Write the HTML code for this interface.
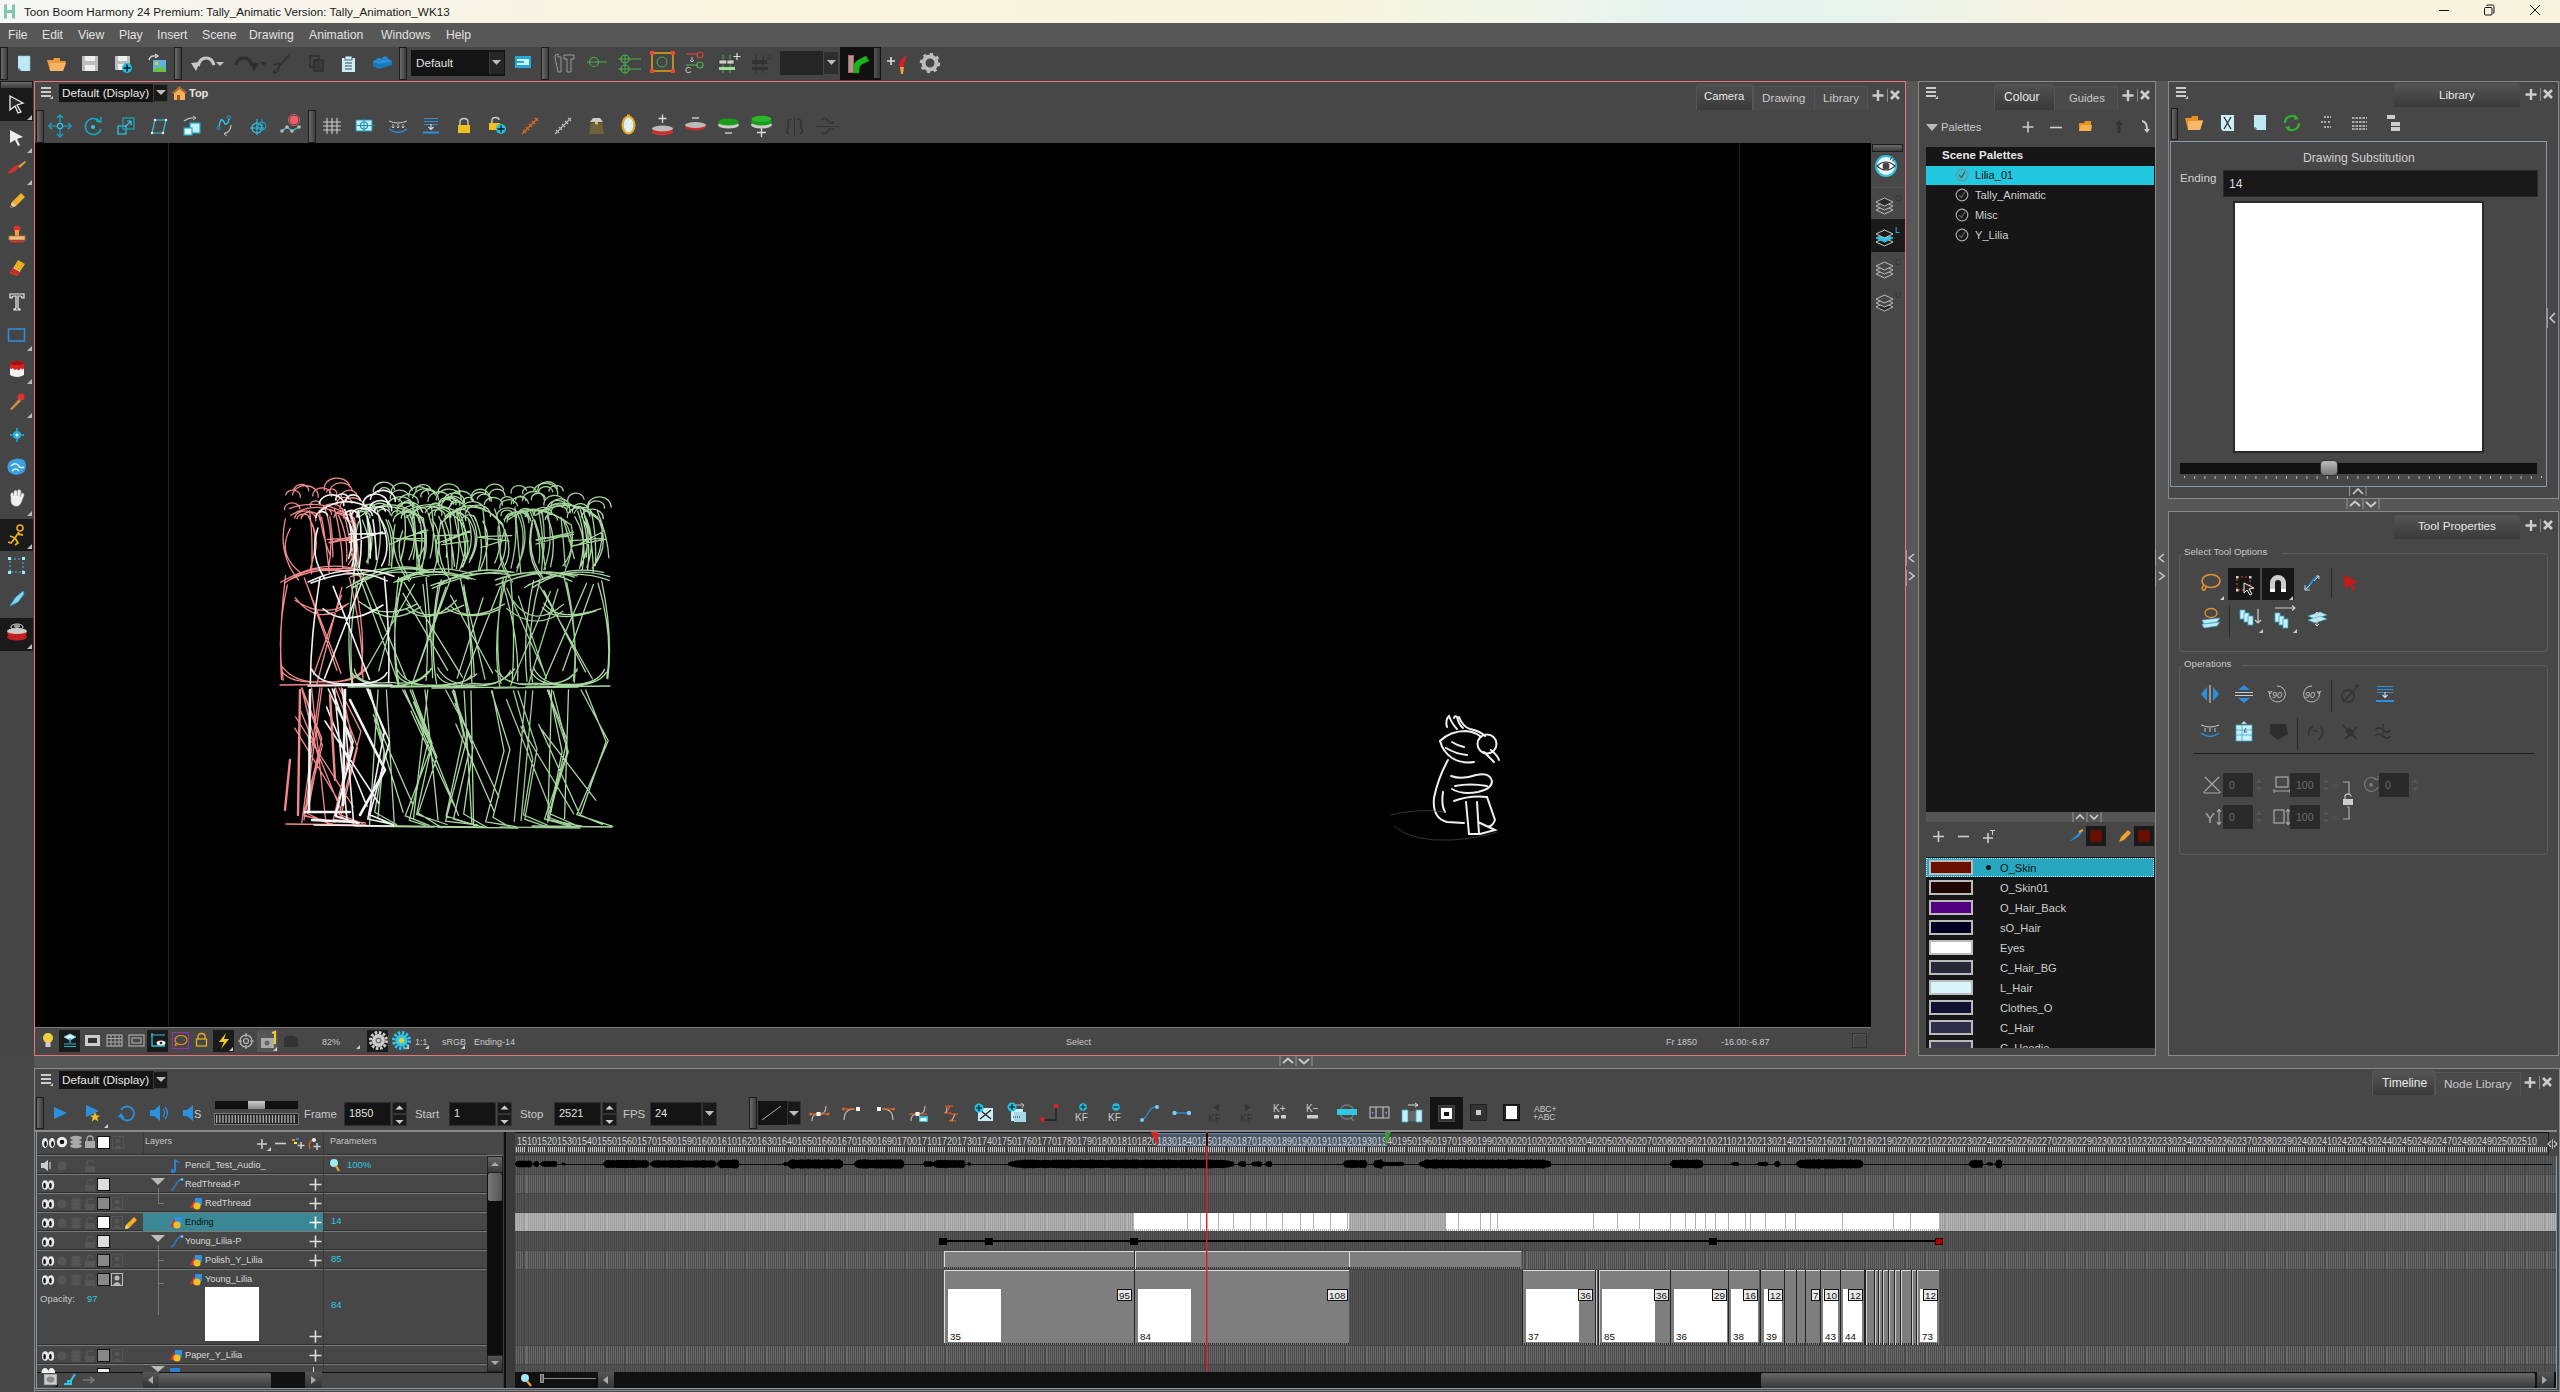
<!DOCTYPE html>
<html><head><meta charset="utf-8">
<style>
*{box-sizing:border-box;margin:0;padding:0}
html,body{width:2560px;height:1392px;overflow:hidden}
body{position:relative;background:#575757;font-family:"Liberation Sans",sans-serif;color:#ccc;font-size:12px}
.a{position:absolute}
.t{position:absolute;white-space:nowrap;line-height:1}
svg.a{overflow:visible}
</style></head><body>
<div class="a" style="left:0px;top:0px;width:2560px;height:23px;background:linear-gradient(90deg,#f5f7f4 0%,#f7f4ea 12%,#f9f5e0 30%,#f8f5dd 50%,#f2f6e8 58%,#e6f3f1 66%,#e8f4ee 72%,#f8f3e0 82%,#f8f3de 100%);"></div>
<svg class="a" style="left:3px;top:3px;" width="14" height="17" viewBox="0 0 14 17"><path d="M1 2 L4 1 L4 7 L9 7 L9 2 L12 1 L12 16 L9 15 L9 10 L4 10 L4 16 L1 15 Z" fill="#7cc9b0"/></svg>
<div class="t" style="left:24px;top:6px;font-size:11.7px;color:#1a1a1a;">Toon Boom Harmony 24 Premium: Tally_Animatic Version: Tally_Animation_WK13</div>
<div class="a" style="left:2439px;top:10px;width:10px;height:1px;background:#111;"></div>
<svg class="a" style="left:2483px;top:4px;" width="12" height="12" viewBox="0 0 12 12"><rect x="1.5" y="3.5" width="7.5" height="7.5" rx="1" fill="none" stroke="#111" stroke-width="1"/><path d="M3.5 2 Q3.5 1 5 1 H9.5 Q11 1 11 2.5 V8 Q11 9.5 10 9.5" fill="none" stroke="#111" stroke-width="1"/></svg>
<svg class="a" style="left:2529px;top:4px;" width="12" height="12" viewBox="0 0 12 12"><path d="M1 1 L11 11 M11 1 L1 11" stroke="#111" stroke-width="1"/></svg>
<div class="a" style="left:0px;top:23px;width:2560px;height:24px;background:#575757;"></div>
<div class="t" style="left:8px;top:29px;font-size:12.2px;color:#e0e0e0;">File</div>
<div class="t" style="left:42px;top:29px;font-size:12.2px;color:#e0e0e0;">Edit</div>
<div class="t" style="left:78px;top:29px;font-size:12.2px;color:#e0e0e0;">View</div>
<div class="t" style="left:119px;top:29px;font-size:12.2px;color:#e0e0e0;">Play</div>
<div class="t" style="left:157px;top:29px;font-size:12.2px;color:#e0e0e0;">Insert</div>
<div class="t" style="left:202px;top:29px;font-size:12.2px;color:#e0e0e0;">Scene</div>
<div class="t" style="left:249px;top:29px;font-size:12.2px;color:#e0e0e0;">Drawing</div>
<div class="t" style="left:309px;top:29px;font-size:12.2px;color:#e0e0e0;">Animation</div>
<div class="t" style="left:381px;top:29px;font-size:12.2px;color:#e0e0e0;">Windows</div>
<div class="t" style="left:446px;top:29px;font-size:12.2px;color:#e0e0e0;">Help</div>
<div class="a" style="left:0px;top:47px;width:2560px;height:34px;background:#454545;"></div>
<div class="a" style="left:0px;top:47px;width:8px;height:33px;background:#1c1c1c;"><div class="a" style="left:1px;top:1px;right:1px;bottom:1px;background:linear-gradient(90deg,#6a6a6a,#3c3c3c)"></div></div>
<div class="a" style="left:174px;top:47px;width:8px;height:33px;background:#1c1c1c;"><div class="a" style="left:1px;top:1px;right:1px;bottom:1px;background:linear-gradient(90deg,#6a6a6a,#3c3c3c)"></div></div>
<div class="a" style="left:399px;top:47px;width:8px;height:33px;background:#1c1c1c;"><div class="a" style="left:1px;top:1px;right:1px;bottom:1px;background:linear-gradient(90deg,#6a6a6a,#3c3c3c)"></div></div>
<div class="a" style="left:541px;top:47px;width:8px;height:33px;background:#1c1c1c;"><div class="a" style="left:1px;top:1px;right:1px;bottom:1px;background:linear-gradient(90deg,#6a6a6a,#3c3c3c)"></div></div>
<svg class="a" style="left:16px;top:55px;" width="16" height="17" viewBox="0 0 16 17"><path d="M2 1 H14 V16 H4 L2 14 Z" fill="#bfe8f5"/><path d="M2 14 L4 14 L4 16" fill="none" stroke="#457" stroke-width="1"/><path d="M2 1 H14 V16" fill="none" stroke="#8cc" stroke-width="0.6"/></svg>
<svg class="a" style="left:46px;top:57px;" width="21" height="15" viewBox="0 0 21 15"><path d="M1 3 L7 3 L8 1 L14 1 L14 4 L20 4 L17 14 L4 14 Z" fill="#e89a3c"/><path d="M4 6 L20 6 L17 14 L4 14 Z" fill="#f3b565"/></svg>
<svg class="a" style="left:81px;top:55px;" width="18" height="17" viewBox="0 0 18 17"><path d="M1 1 H17 V16 H1 Z" fill="#bdbdbd"/><rect x="4" y="1" width="10" height="5" fill="#eee"/><rect x="4" y="10" width="10" height="6" fill="#eee"/></svg>
<svg class="a" style="left:114px;top:55px;" width="19" height="18" viewBox="0 0 19 18"><path d="M1 1 H16 V15 H1 Z" fill="#bdbdbd"/><rect x="4" y="1" width="9" height="5" fill="#eee"/><rect x="4" y="9" width="9" height="6" fill="#eee"/><circle cx="13" cy="13" r="5" fill="#20c0e0"/><path d="M13 9.5 V16.5 M9.5 13 H16.5" stroke="#111" stroke-width="1.4"/></svg>
<svg class="a" style="left:147px;top:53px;" width="20" height="20" viewBox="0 0 20 20"><path d="M2 7 Q3 2 9 3" fill="none" stroke="#ddd" stroke-width="1.4"/><path d="M8 1 L11 3 L8 5" fill="none" stroke="#ddd" stroke-width="1.2"/><rect x="6" y="7" width="13" height="12" fill="#5ab6e0"/><path d="M6 19 L10 13 L13 16 L16 12 L19 19 Z" fill="#6cbf3c"/><rect x="8" y="9" width="3" height="3" fill="#f0c040"/></svg>
<svg class="a" style="left:190px;top:54px;" width="36" height="18" viewBox="0 0 36 18"><path d="M8 12 Q10 4 16 4 Q22 4 24 11" fill="none" stroke="#c8c8c8" stroke-width="3.2"/><path d="M1 9 L10 8 L6 17 Z" fill="#c8c8c8"/><path d="M26 8 L34 8 L30 12 Z" fill="#c8c8c8"/></svg>
<svg class="a" style="left:232px;top:54px;" width="36" height="18" viewBox="0 0 36 18"><path d="M4 11 Q6 4 12 4 Q18 4 20 12" fill="none" stroke="#2e2e2e" stroke-width="3.2"/><path d="M27 9 L18 8 L22 17 Z" fill="#2e2e2e"/><path d="M28 8 L35 8 L31.5 12 Z" fill="#2e2e2e"/></svg>
<svg class="a" style="left:271px;top:52px;" width="22" height="22" viewBox="0 0 22 22"><path d="M19 2 L8 14 M4 18 Q1 21 4 21 Q7 20 8 14 Q10 9 3 13" fill="none" stroke="#2e2e2e" stroke-width="1.6"/></svg>
<svg class="a" style="left:309px;top:55px;" width="15" height="17" viewBox="0 0 15 17"><rect x="1" y="1" width="9" height="11" fill="none" stroke="#2e2e2e" stroke-width="1.4"/><rect x="5" y="5" width="9" height="11" fill="#3a3a3a" stroke="#2e2e2e" stroke-width="1.4"/></svg>
<svg class="a" style="left:340px;top:55px;" width="17" height="18" viewBox="0 0 17 18"><rect x="2" y="3" width="13" height="14" fill="#cdeef7"/><rect x="5" y="1" width="7" height="4" fill="#cdeef7" stroke="#345" stroke-width="0.8"/><path d="M5 8 H12 M5 11 H12 M5 14 H12" stroke="#345" stroke-width="1"/></svg>
<svg class="a" style="left:372px;top:53px;" width="21" height="17" viewBox="0 0 21 17"><path d="M1 8 L14 5 L20 8 L20 12 L7 16 L1 13 Z" fill="#1a7ac0"/><path d="M1 8 L14 5 L20 8 L7 11 Z" fill="#2c94d8"/><ellipse cx="7" cy="6.5" rx="2.6" ry="1.6" fill="#2c94d8" stroke="#1a6aa8" stroke-width="0.6"/><ellipse cx="13" cy="5" rx="2.6" ry="1.6" fill="#2c94d8" stroke="#1a6aa8" stroke-width="0.6"/></svg>
<div class="a" style="left:411px;top:50px;width:94px;height:26px;background:#141414;"></div>
<div class="t" style="left:416px;top:57px;font-size:11.7px;color:#e0e0e0;">Default</div>
<div class="a" style="left:489px;top:52px;width:15px;height:22px;background:#262626;border-left:1px solid #3a3a3a"></div>
<svg class="a" style="left:491px;top:59px;" width="11" height="8" viewBox="0 0 11 8"><path d="M1 1 L10 1 L5.5 6 Z" fill="#bbb"/></svg>
<svg class="a" style="left:514px;top:53px;" width="19" height="18" viewBox="0 0 19 18"><rect x="1" y="3" width="16" height="12" fill="#25a8d8"/><rect x="3" y="6" width="12" height="2" fill="#d6f2ff"/><rect x="3" y="10" width="7" height="2" fill="#d6f2ff"/><rect x="10" y="6" width="5" height="6" fill="#bfe"/></svg>
<svg class="a" style="left:552px;top:53px;" width="23" height="20" viewBox="0 0 23 20"><path d="M3 4 Q3 1 6 1 L6 4 L9 4 L9 19 L6 19 Z M12 2 L22 2 L22 6 L19 6 L19 19 L15 19 L15 6 L12 6 Z" fill="none" stroke="#999" stroke-width="1"/></svg>
<svg class="a" style="left:586px;top:54px;" width="22" height="18" viewBox="0 0 22 18"><circle cx="8" cy="8" r="4.5" fill="none" stroke="#4cae4c" stroke-width="1.2"/><path d="M1 8 H21" stroke="#4cae4c" stroke-width="1"/></svg>
<svg class="a" style="left:617px;top:53px;" width="26" height="22" viewBox="0 0 26 22"><circle cx="8" cy="6" r="4" fill="none" stroke="#4cae4c" stroke-width="1.2"/><circle cx="8" cy="16" r="4" fill="none" stroke="#4cae4c" stroke-width="1.2"/><path d="M1 6 H24 M1 16 H24 M8 2 V21" stroke="#4cae4c" stroke-width="1"/></svg>
<svg class="a" style="left:650px;top:51px;" width="25" height="22" viewBox="0 0 25 22"><rect x="2" y="2" width="21" height="18" fill="none" stroke="#e8b010" stroke-width="1.4"/><circle cx="12" cy="11" r="5" fill="none" stroke="#4cae4c" stroke-width="1"/><rect x="0" y="0" width="4" height="4" fill="#e43"/><rect x="21" y="0" width="4" height="4" fill="#e43"/><rect x="0" y="18" width="4" height="4" fill="#e43"/><rect x="21" y="18" width="4" height="4" fill="#e43"/></svg>
<svg class="a" style="left:685px;top:51px;" width="22" height="22" viewBox="0 0 22 22"><path d="M1 3 H13" stroke="#e04040" stroke-width="1.2"/><circle cx="15" cy="4" r="3" fill="none" stroke="#e04040" stroke-width="1.2"/><path d="M1 14 H13" stroke="#4cae4c" stroke-width="1.2"/><circle cx="15" cy="14" r="3" fill="none" stroke="#4cae4c" stroke-width="1.2"/><path d="M7 6 V11 M5 9 L7 11 L9 9" stroke="#ccc" stroke-width="1"/><text x="0" y="22" font-size="9" fill="#ccc" font-family="Liberation Sans">C</text></svg>
<svg class="a" style="left:717px;top:52px;" width="24" height="23" viewBox="0 0 24 23"><path d="M6 3 V21 M13 3 V21" stroke="#4cae4c" stroke-width="1"/><rect x="2" y="8" width="8" height="4" fill="#ccc" stroke="#222" stroke-width="0.6"/><rect x="10" y="8" width="7" height="4" fill="#ccc" stroke="#222" stroke-width="0.6"/><rect x="2" y="15" width="16" height="3" fill="#9be09b"/><path d="M20 1 V8 M16.5 4.5 H23.5" stroke="#ddd" stroke-width="1.2"/></svg>
<svg class="a" style="left:750px;top:52px;" width="24" height="23" viewBox="0 0 24 23"><path d="M6 3 V21 M13 3 V21" stroke="#2e2e2e" stroke-width="1"/><rect x="2" y="8" width="8" height="4" fill="#333"/><rect x="10" y="8" width="7" height="4" fill="#333"/><rect x="2" y="15" width="16" height="3" fill="#333"/><text x="17" y="8" font-size="8" fill="#333" font-family="Liberation Sans">A</text></svg>
<div class="a" style="left:780px;top:51px;width:43px;height:24px;background:#262626;"></div>
<div class="a" style="left:824px;top:52px;width:14px;height:22px;background:#2e2e2e;"></div>
<svg class="a" style="left:826px;top:59px;" width="11" height="8" viewBox="0 0 11 8"><path d="M1 1 L10 1 L5.5 6 Z" fill="#bbb"/></svg>
<div class="a" style="left:840px;top:47px;width:41px;height:33px;background:#111;"></div>
<div class="a" style="left:874px;top:48px;width:6px;height:30px;background:linear-gradient(90deg,#555,#333);"></div>
<svg class="a" style="left:846px;top:53px;" width="25" height="22" viewBox="0 0 25 22"><rect x="2" y="2" width="6" height="18" fill="#c06060"/><rect x="3" y="3" width="4" height="16" fill="#a99"/><path d="M8 20 L8 12 Q9 8 14 6 L20 3 L23 8 L16 11 Q13 13 13 16 L13 20 Z" fill="#20b020" stroke="#0a0" stroke-width="0.6"/></svg>
<svg class="a" style="left:886px;top:53px;" width="22" height="22" viewBox="0 0 22 22"><path d="M1 8 H9 M5 4 V12" stroke="#ddd" stroke-width="1.6"/><path d="M16 20 L18 12 Q19 6 21 2 Q14 6 13 12 Z" fill="#d82020"/><path d="M14 14 L18 14 L17 21 L15 21 Z" fill="#f0a040"/></svg>
<svg class="a" style="left:919px;top:52px;" width="22" height="22" viewBox="0 0 22 22"><circle cx="11" cy="11" r="6.5" fill="none" stroke="#bbb" stroke-width="4"/><circle cx="11" cy="11" r="9" fill="none" stroke="#bbb" stroke-width="2.5" stroke-dasharray="3.2 3.8"/><circle cx="11" cy="11" r="3" fill="#454545"/></svg>

<div class="a" style="left:0px;top:81px;width:34px;height:975px;background:#454545;"></div>
<div class="a" style="left:0px;top:81px;width:33px;height:8px;background:#1c1c1c;"><div class="a" style="left:1px;top:1px;right:1px;bottom:1px;background:linear-gradient(180deg,#6a6a6a,#3c3c3c)"></div></div>
<div class="a" style="left:0px;top:88px;width:33px;height:33px;background:#1a1a1a;"></div>
<div class="a" style="left:0px;top:519px;width:33px;height:32px;background:#1a1a1a;"></div>
<div class="a" style="left:0px;top:618px;width:33px;height:33px;background:#1a1a1a;"></div>
<svg class="a" style="left:8px;top:95px;" width="18" height="20" viewBox="0 0 18 20"><path d="M2 1 L15 8 L9 10 L13 17 L10 18 L7 11 L2 15 Z" fill="#2a2a2a" stroke="#eee" stroke-width="1.3"/></svg>
<svg class="a" style="left:27px;top:115px;" width="5" height="5" viewBox="0 0 5 5"><path d="M5 0 L5 5 L0 5 Z" fill="#bbb"/></svg>
<svg class="a" style="left:8px;top:129px;" width="18" height="18" viewBox="0 0 18 18"><path d="M2 1 L15 8 L9 10 L12 16 L10 17 L7 11 L2 14 Z" fill="#eee"/></svg>
<svg class="a" style="left:27px;top:148px;" width="5" height="5" viewBox="0 0 5 5"><path d="M5 0 L5 5 L0 5 Z" fill="#bbb"/></svg>
<svg class="a" style="left:6px;top:160px;" width="20" height="16" viewBox="0 0 20 16"><path d="M1 13 Q4 14 8 12 Q12 9 13 7 L11 5 Q6 7 4 10 Q3 12 1 13 Z" fill="#d03030"/><path d="M12 6 L19 1 L20 2 L14 8 Z" fill="#e0a040"/></svg>
<svg class="a" style="left:27px;top:180px;" width="5" height="5" viewBox="0 0 5 5"><path d="M5 0 L5 5 L0 5 Z" fill="#bbb"/></svg>
<svg class="a" style="left:8px;top:192px;" width="18" height="18" viewBox="0 0 18 18"><path d="M2 16 L4 10 L13 1 L17 5 L8 14 Z" fill="#f0b030"/><path d="M2 16 L4 10 L8 14 Z" fill="#f0d0a0"/><path d="M2 16 L3 13 L5 15 Z" fill="#553"/></svg>
<svg class="a" style="left:8px;top:225px;" width="18" height="18" viewBox="0 0 18 18"><circle cx="9" cy="4" r="3.5" fill="#e03030"/><rect x="7" y="5" width="4" height="7" fill="#e8a040"/><rect x="1" y="11" width="16" height="4" fill="#f0c080" stroke="#b07030" stroke-width="0.8"/><rect x="2" y="16" width="14" height="1.5" fill="#e03030"/></svg>
<svg class="a" style="left:8px;top:258px;" width="18" height="20" viewBox="0 0 18 20"><path d="M2 15 L10 2 L17 6 L9 18 Z" fill="#e8b020"/><path d="M2 15 L5 10 L12 14 L9 18 Z" fill="#d02828"/><path d="M6 10 L13 14" stroke="#fff" stroke-width="1" stroke-dasharray="1 1"/></svg>
<svg class="a" style="left:8px;top:292px;" width="18" height="20" viewBox="0 0 18 20"><path d="M2 2 H16 V6 H14 Q14 4 12 4 H10 V16 Q10 17 12 17 V18 H6 V17 Q8 17 8 16 V4 H6 Q4 4 4 6 H2 Z" fill="none" stroke="#eee" stroke-width="1.2"/></svg>
<svg class="a" style="left:7px;top:327px;" width="20" height="16" viewBox="0 0 20 16"><rect x="1.5" y="2" width="16" height="12" fill="none" stroke="#2a90e0" stroke-width="1.5"/></svg>
<svg class="a" style="left:27px;top:346px;" width="5" height="5" viewBox="0 0 5 5"><path d="M5 0 L5 5 L0 5 Z" fill="#bbb"/></svg>
<svg class="a" style="left:8px;top:359px;" width="18" height="20" viewBox="0 0 18 20"><path d="M2 4 Q9 0 16 4 V16 Q9 20 2 16 Z" fill="#f4f4f4"/><path d="M2 4 Q9 0 16 4 V9 Q14 12 13 9 Q11 13 9 10 Q6 12 5 9 Q3 11 2 9 Z" fill="#d82020"/><ellipse cx="9" cy="4" rx="7" ry="2" fill="#a01010"/></svg>
<svg class="a" style="left:27px;top:379px;" width="5" height="5" viewBox="0 0 5 5"><path d="M5 0 L5 5 L0 5 Z" fill="#bbb"/></svg>
<svg class="a" style="left:8px;top:393px;" width="18" height="18" viewBox="0 0 18 18"><circle cx="13" cy="4" r="3.5" fill="#e03030"/><path d="M2 16 L11 6 L13 8 L4 17 Z" fill="#d09040"/></svg>
<svg class="a" style="left:27px;top:413px;" width="5" height="5" viewBox="0 0 5 5"><path d="M5 0 L5 5 L0 5 Z" fill="#bbb"/></svg>
<svg class="a" style="left:8px;top:426px;" width="18" height="18" viewBox="0 0 18 18"><circle cx="9" cy="9" r="4" fill="#20b0e0"/><path d="M9 2 V16 M2 9 H16" stroke="#20b0e0" stroke-width="1.4"/><circle cx="9" cy="9" r="1.5" fill="#fff"/></svg>
<svg class="a" style="left:6px;top:456px;" width="22" height="22" viewBox="0 0 22 22"><path d="M3 6 Q10 0 18 4 Q22 10 18 16 Q10 22 3 16 Q0 11 3 6 Z" fill="#3aa0e0"/><path d="M5 10 Q9 6 12 9 Q14 13 18 11 M6 15 Q10 11 13 15" fill="none" stroke="#d8f0ff" stroke-width="1.6"/></svg>
<svg class="a" style="left:7px;top:489px;" width="20" height="20" viewBox="0 0 20 20"><path d="M4 8 Q3 3 6 4 L7 7 L7 2 Q9 1 10 2 L10 7 L11 1 Q13 0 14 2 L13 8 L15 4 Q17 4 17 6 L14 14 Q12 18 8 17 Q4 16 4 12 Z" fill="#f0f0f0" stroke="#bbb" stroke-width="0.6"/></svg>
<svg class="a" style="left:27px;top:511px;" width="5" height="5" viewBox="0 0 5 5"><path d="M5 0 L5 5 L0 5 Z" fill="#bbb"/></svg>
<svg class="a" style="left:6px;top:524px;" width="22" height="22" viewBox="0 0 22 22"><circle cx="14" cy="4" r="3" fill="none" stroke="#e8b020" stroke-width="1.6"/><path d="M13 8 L9 14 L4 12 M12 10 L17 11 M9 14 L12 19 L9 21 M9 14 L5 19 L2 18" fill="none" stroke="#e8b020" stroke-width="1.8"/></svg>
<svg class="a" style="left:27px;top:544px;" width="5" height="5" viewBox="0 0 5 5"><path d="M5 0 L5 5 L0 5 Z" fill="#bbb"/></svg>
<svg class="a" style="left:7px;top:556px;" width="20" height="20" viewBox="0 0 20 20"><rect x="3" y="3" width="13" height="13" fill="none" stroke="#40c0e0" stroke-width="1" stroke-dasharray="2 2"/><rect x="1" y="1" width="3" height="3" fill="#9ee"/><rect x="15" y="1" width="3" height="3" fill="#9ee"/><rect x="1" y="15" width="3" height="3" fill="#9ee"/><rect x="15" y="15" width="3" height="3" fill="#9ee"/></svg>
<svg class="a" style="left:7px;top:589px;" width="20" height="20" viewBox="0 0 20 20"><path d="M3 17 L8 9 L16 2 L17 5 L11 13 Z" fill="#8ad8f0" stroke="#30a0d0" stroke-width="1"/></svg>
<svg class="a" style="left:5px;top:621px;" width="24" height="24" viewBox="0 0 24 24"><ellipse cx="12" cy="6" rx="6" ry="3" fill="none" stroke="#ddd" stroke-width="1"/><ellipse cx="12" cy="12" rx="10" ry="3.5" fill="#d82828"/><ellipse cx="12" cy="16" rx="10" ry="3.5" fill="#c02020"/><ellipse cx="12" cy="10" rx="10" ry="3" fill="#ccc"/><ellipse cx="12" cy="5" rx="3" ry="2" fill="#999"/></svg>
<svg class="a" style="left:27px;top:644px;" width="5" height="5" viewBox="0 0 5 5"><path d="M5 0 L5 5 L0 5 Z" fill="#bbb"/></svg>
<div class="a" style="left:34px;top:81px;width:1872px;height:975px;background:#e87878;"></div>
<div class="a" style="left:35px;top:82px;width:1870px;height:973px;background:#474747;"></div>
<svg class="a" style="left:41px;top:87px;" width="13" height="13" viewBox="0 0 13 13"><rect x="0" y="0" width="10" height="2" fill="#ccc"/><rect x="0" y="4" width="10" height="2" fill="#ccc"/><rect x="0" y="8" width="10" height="2" fill="#ccc"/><path d="M12 9 L12 12 L9 12 Z" fill="#ccc"/></svg>
<div class="a" style="left:59px;top:84px;width:94px;height:18px;background:#141414;"></div>
<div class="t" style="left:62px;top:88px;font-size:11.8px;color:#e8e8e8;">Default (Display)</div>
<div class="a" style="left:153px;top:84px;width:15px;height:18px;background:#1a1a1a;border:1px solid #3c3c3c"></div>
<svg class="a" style="left:156px;top:90px;" width="10" height="6" viewBox="0 0 10 6"><path d="M0 0 L10 0 L5 5 Z" fill="#bbb"/></svg>
<svg class="a" style="left:172px;top:86px;" width="15" height="15" viewBox="0 0 15 15"><path d="M7.5 0.5 L15 7 L13 7 L13 14 L2 14 L2 7 L0 7 Z" fill="#f6b060"/><path d="M7.5 0.5 L15 7 L13.5 8 L7.5 3 L1.5 8 L0 7 Z" fill="#b06820"/><rect x="5" y="9" width="3" height="5" fill="#a05818"/></svg>
<div class="t" style="left:189px;top:88px;font-size:11px;color:#e8e8e8;font-weight:bold">Top</div>
<div class="a" style="left:1696px;top:84px;width:57px;height:26px;background:linear-gradient(180deg,#505050,#3a3a3a);border:1px solid #555;border-bottom:none;border-radius:3px 3px 0 0"></div>
<div class="t" style="left:1704px;top:91px;font-size:11.3px;color:#e8e8e8;">Camera</div>
<div class="a" style="left:1753px;top:86px;width:62px;height:24px;background:#4a4a4a;border:1px solid #555;border-bottom:none"></div>
<div class="t" style="left:1762px;top:93px;font-size:11.8px;color:#c8c8c8;">Drawing</div>
<div class="a" style="left:1814px;top:86px;width:54px;height:24px;background:#4a4a4a;border:1px solid #555;border-bottom:none"></div>
<div class="t" style="left:1823px;top:93px;font-size:11.8px;color:#c8c8c8;">Library</div>
<svg class="a" style="left:1872px;top:89px;" width="30" height="14" viewBox="0 0 30 14"><path d="M6 1 V12 M0.5 6.5 H11.5" stroke="#ccc" stroke-width="2.4"/><path d="M15.5 0 V13" stroke="#999" stroke-width="0.8"/><path d="M19 2 L27 10 M27 2 L19 10" stroke="#ccc" stroke-width="2.6"/></svg>
<div class="a" style="left:36px;top:110px;width:8px;height:33px;background:#1c1c1c;"><div class="a" style="left:1px;top:1px;right:1px;bottom:1px;background:linear-gradient(90deg,#6a6a6a,#3c3c3c)"></div></div>
<div class="a" style="left:308px;top:110px;width:8px;height:33px;background:#1c1c1c;"><div class="a" style="left:1px;top:1px;right:1px;bottom:1px;background:linear-gradient(90deg,#6a6a6a,#3c3c3c)"></div></div>
<svg class="a" style="left:48px;top:114px;" width="24" height="24" viewBox="0 0 24 24"><circle cx="12" cy="12" r="2.6" fill="none" stroke="#30c8e8" stroke-width="1.2"/><path d="M12 1 V9 M12 15 V23 M1 12 H9 M15 12 H23" stroke="#16a8c8" stroke-width="1.2"/><path d="M9 4 L12 1 L15 4 M9 20 L12 23 L15 20 M4 9 L1 12 L4 15 M20 9 L23 12 L20 15" fill="none" stroke="#16a8c8" stroke-width="1.4"/></svg>
<svg class="a" style="left:83px;top:116px;" width="20" height="20" viewBox="0 0 20 20"><path d="M17 6 A8 8 0 1 0 18 13" fill="none" stroke="#16a8c8" stroke-width="1.6"/><path d="M13 5 L18 6 L18 1" fill="none" stroke="#16a8c8" stroke-width="1.4"/><circle cx="10" cy="11" r="2" fill="#30c8e8"/></svg>
<svg class="a" style="left:117px;top:117px;" width="18" height="18" viewBox="0 0 18 18"><rect x="1" y="9" width="8" height="8" fill="none" stroke="#30c8e8" stroke-width="1.2"/><rect x="6" y="1" width="11" height="11" fill="none" stroke="#16a8c8" stroke-width="1.2"/><path d="M8 10 L14 4 M10 4 H14 V8" fill="none" stroke="#30c8e8" stroke-width="1.2"/></svg>
<svg class="a" style="left:150px;top:118px;" width="18" height="17" viewBox="0 0 18 17"><path d="M5 2 L16 2 L13 15 L2 15 Z" fill="none" stroke="#30c8e8" stroke-width="1.2"/><circle cx="5" cy="2" r="1.2" fill="#eee"/><circle cx="16" cy="2" r="1.2" fill="#eee"/><circle cx="13" cy="15" r="1.2" fill="#eee"/><circle cx="2" cy="15" r="1.2" fill="#eee"/></svg>
<svg class="a" style="left:182px;top:115px;" width="20" height="22" viewBox="0 0 20 22"><path d="M2 6 Q7 2 13 3" fill="none" stroke="#bbb" stroke-width="1.2"/><path d="M11 1 L14 3 L11 5" fill="none" stroke="#bbb" stroke-width="1"/><rect x="8" y="8" width="10" height="10" fill="#bff0f8" stroke="#20a8c8" stroke-width="1.2"/><rect x="2" y="13" width="8" height="7" fill="#dff" stroke="#20a8c8" stroke-width="1.2"/></svg>
<svg class="a" style="left:216px;top:115px;" width="18" height="22" viewBox="0 0 18 22"><circle cx="13" cy="2.5" r="1.6" fill="none" stroke="#16a8c8" stroke-width="1"/><circle cx="2.5" cy="13" r="1.6" fill="none" stroke="#16a8c8" stroke-width="1"/><path d="M13 4 Q12 10 9 9 Q7 4 5 5 Q3 9 3 11" fill="none" stroke="#30c8e8" stroke-width="1.4"/><path d="M15 10 Q15 17 8 19" fill="none" stroke="#bbb" stroke-width="1.2"/><path d="M10 17 L8 19 L11 21" fill="none" stroke="#bbb" stroke-width="1"/></svg>
<svg class="a" style="left:249px;top:115px;" width="20" height="20" viewBox="0 0 20 20"><circle cx="8" cy="13" r="5" fill="none" stroke="#30c8e8" stroke-width="1.2"/><path d="M8 4 V20 M1 13 H15" stroke="#30c8e8" stroke-width="1"/><circle cx="13" cy="11" r="4" fill="none" stroke="#16a8c8" stroke-width="1"/><path d="M13 4 V16" stroke="#16a8c8" stroke-width="1"/></svg>
<svg class="a" style="left:280px;top:115px;" width="23" height="20" viewBox="0 0 23 20"><circle cx="14" cy="5" r="4" fill="#f06060" stroke="#f06060" stroke-width="0.8"/><circle cx="14" cy="5" r="5.6" fill="none" stroke="#f06060" stroke-width="0.8"/><path d="M2 16 L7 12 L12 16 L19 12" fill="none" stroke="#30c8e8" stroke-width="1.2"/><circle cx="2" cy="16" r="1.8" fill="#bbb"/><circle cx="7" cy="12" r="1.8" fill="#bbb"/><circle cx="12" cy="16" r="1.8" fill="#bbb"/><circle cx="19" cy="12" r="1.8" fill="#bbb"/></svg>
<svg class="a" style="left:322px;top:117px;" width="20" height="18" viewBox="0 0 20 18"><path d="M5 1 V17 M10 1 V17 M15 1 V17 M1 5 H19 M1 9 H19 M1 13 H19" stroke="#ccc" stroke-width="1.1"/></svg>
<svg class="a" style="left:355px;top:117px;" width="21" height="17" viewBox="0 0 21 17"><rect x="1" y="3" width="16" height="11" fill="#c8eef8" stroke="#1890b0" stroke-width="1"/><circle cx="9" cy="8.5" r="3.5" fill="none" stroke="#1890b0" stroke-width="1.2"/><path d="M9 2 V15 M2 8.5 H20" stroke="#1890b0" stroke-width="1"/></svg>
<svg class="a" style="left:388px;top:118px;" width="20" height="17" viewBox="0 0 20 17"><path d="M1 3 Q10 7 19 3" fill="none" stroke="#ccc" stroke-width="1"/><path d="M1 11 Q10 18 19 11" fill="none" stroke="#2a90e0" stroke-width="1.4"/><path d="M5 6 V10 M10 6 V10 M15 6 V10 M3.5 8.5 L5 10 L6.5 8.5 M8.5 8.5 L10 10 L11.5 8.5 M13.5 8.5 L15 10 L16.5 8.5" fill="none" stroke="#ccc" stroke-width="0.9"/></svg>
<svg class="a" style="left:422px;top:117px;" width="18" height="18" viewBox="0 0 18 18"><path d="M2 1.5 H16 M2 4.5 H16 M2 7.5 H16" stroke="#2a90e0" stroke-width="1.2"/><path d="M9 7 V12 M6.5 10 L9 12.5 L11.5 10" fill="none" stroke="#ddd" stroke-width="1.1"/><rect x="1" y="14.5" width="16" height="2" fill="#2a90e0"/></svg>
<svg class="a" style="left:456px;top:117px;" width="16" height="17" viewBox="0 0 16 17"><path d="M4 8 V5 Q4 1.5 8 1.5 Q12 1.5 12 5 V8" fill="none" stroke="#ccc" stroke-width="1.4"/><rect x="2" y="8" width="12" height="8" fill="#f0c020"/></svg>
<svg class="a" style="left:488px;top:116px;" width="19" height="19" viewBox="0 0 19 19"><path d="M4 7 V4.5 Q4 1.5 7.5 1.5 Q11 1.5 11 4" fill="none" stroke="#ccc" stroke-width="1.4"/><rect x="1" y="7" width="11" height="7" fill="#f0c020"/><circle cx="13" cy="13" r="5" fill="#20c0e0"/><path d="M13 9.5 V16.5 M9.5 13 H16.5" stroke="#111" stroke-width="1.3"/></svg>
<svg class="a" style="left:521px;top:117px;" width="18" height="18" viewBox="0 0 18 18"><path d="M1 17 L17 1" stroke="#e06820" stroke-width="1.2"/><path d="M2 13 L5 16 M5 10 L8 13 M8 7 L11 10 M11 4 L14 7 M14 1 L17 4" stroke="#e06820" stroke-width="1.2"/></svg>
<svg class="a" style="left:554px;top:117px;" width="18" height="18" viewBox="0 0 18 18"><path d="M1 17 L17 1" stroke="#bbb" stroke-width="1.1"/><path d="M2 13 L5 16 M5 10 L8 13 M8 7 L11 10 M11 4 L14 7 M14 1 L17 4" stroke="#bbb" stroke-width="1.1"/></svg>
<svg class="a" style="left:588px;top:116px;" width="17" height="19" viewBox="0 0 17 19"><path d="M5 2 H12 L15 6 H2 Z" fill="#ccc"/><path d="M3 7 H14 L16 18 H1 Z" fill="#8a7430" opacity="0.6"/><circle cx="8.5" cy="7" r="1.5" fill="#f0d040"/></svg>
<svg class="a" style="left:620px;top:114px;" width="17" height="22" viewBox="0 0 17 22"><ellipse cx="8.5" cy="11" rx="7" ry="9.5" fill="#e8a820"/><ellipse cx="8.5" cy="11" rx="4.8" ry="7.5" fill="#d8f0f8"/><path d="M6 13 L11 6 M7 16 L11 11" stroke="#fff" stroke-width="1"/><rect x="7" y="0.5" width="3" height="2" fill="#e8a820"/></svg>
<svg class="a" style="left:651px;top:114px;" width="23" height="22" viewBox="0 0 23 22"><path d="M11.5 0.5 V9 M7.5 4.5 H15.5" stroke="#ddd" stroke-width="1.3"/><ellipse cx="11.5" cy="17" rx="10.5" ry="3.5" fill="#d02828"/><ellipse cx="11.5" cy="14.5" rx="10.5" ry="3" fill="#bbb"/><path d="M1 18.5 Q11 23 22 18.5" stroke="#e04040" fill="none" stroke-width="1"/></svg>
<svg class="a" style="left:684px;top:115px;" width="23" height="18" viewBox="0 0 23 18"><path d="M8 3 H15" stroke="#ddd" stroke-width="1.3"/><ellipse cx="11.5" cy="12" rx="10.5" ry="3.2" fill="#d02828"/><ellipse cx="11.5" cy="10" rx="10.5" ry="3" fill="#bbb"/></svg>
<svg class="a" style="left:717px;top:117px;" width="23" height="20" viewBox="0 0 23 20"><ellipse cx="11.5" cy="8" rx="10.5" ry="3.6" fill="#ccc"/><ellipse cx="11.5" cy="5" rx="10.5" ry="3.6" fill="#1a9a1a"/><path d="M8 16 H15" stroke="#ddd" stroke-width="1.3"/></svg>
<svg class="a" style="left:750px;top:115px;" width="23" height="23" viewBox="0 0 23 23"><ellipse cx="11.5" cy="10" rx="10.5" ry="3.4" fill="#ccc"/><ellipse cx="11.5" cy="7" rx="10.5" ry="3.4" fill="#1a9a1a"/><ellipse cx="11.5" cy="3.8" rx="10" ry="3" fill="#2ab82a"/><path d="M11.5 13 V22 M7 17.5 H16" stroke="#ddd" stroke-width="1.3"/></svg>
<svg class="a" style="left:784px;top:116px;" width="21" height="20" viewBox="0 0 21 20"><path d="M10.5 0 V20" stroke="#333" stroke-width="1"/><path d="M8 3 Q3 3 4 8 Q5 12 3 14 Q2 17 5 17 M13 3 Q18 3 17 8 Q16 12 18 14 Q19 17 16 17" fill="none" stroke="#333" stroke-width="1.6"/></svg>
<svg class="a" style="left:816px;top:116px;" width="23" height="20" viewBox="0 0 23 20"><path d="M0 10.5 H23" stroke="#333" stroke-width="1"/><path d="M5 4 Q9 0 12 5 Q14 9 18 6 M5 16 Q9 20 12 15 Q14 11 18 14" fill="none" stroke="#333" stroke-width="1.6"/></svg>
<div class="a" style="left:35px;top:143px;width:1836px;height:884px;background:#000;"></div>
<div class="a" style="left:168px;top:143px;width:1px;height:884px;background:#1e1e1e;"></div>
<div class="a" style="left:1739px;top:143px;width:1px;height:884px;background:#1e1e1e;"></div>
<div class="a" style="left:1871px;top:143px;width:34px;height:884px;background:#474747;"></div>
<div class="a" style="left:1872px;top:144px;width:31px;height:8px;background:#1c1c1c;"><div class="a" style="left:1px;top:1px;right:1px;bottom:1px;background:linear-gradient(180deg,#6a6a6a,#3c3c3c)"></div></div>
<svg class="a" style="left:1874px;top:154px;" width="24" height="24" viewBox="0 0 24 24"><circle cx="12" cy="12" r="11" fill="#30c0e0"/><circle cx="12" cy="12" r="9" fill="#e8f8fc"/><path d="M3 12 Q12 4 21 12 Q12 20 3 12 Z" fill="#fff" stroke="#333" stroke-width="1.1"/><circle cx="12" cy="12" r="3.5" fill="#444"/><path d="M16 6 L18 3 M18 7 L21 5" stroke="#333" stroke-width="0.8"/></svg>
<div class="a" style="left:1871px;top:187px;width:34px;height:1px;background:#555;"></div>
<svg class="a" style="left:1875px;top:192px;" width="28" height="26" viewBox="0 0 28 26"><text x="20" y="9" font-size="9" font-family="Liberation Sans" fill="#333">O</text><path d="M1 18 L9.5 14 L18 18 L9.5 22 Z" fill="#474747" stroke="#bbb" stroke-width="1"/><path d="M1 14 L9.5 10 L18 14 L9.5 18 Z" fill="#474747" stroke="#bbb" stroke-width="1"/><path d="M1 10 L9.5 6 L18 10 L9.5 14 Z" fill="#2a2a2a" stroke="#bbb" stroke-width="1"/></svg>
<div class="a" style="left:1871px;top:219px;width:34px;height:33px;background:#1a1a1a;"></div>
<svg class="a" style="left:1875px;top:224px;" width="28" height="26" viewBox="0 0 28 26"><text x="20" y="9" font-size="9" font-family="Liberation Sans" fill="#30c0e0">L</text><path d="M1 18 L9.5 14 L18 18 L9.5 22 Z" fill="#1a1a1a" stroke="#ccc" stroke-width="1"/><path d="M1 14 L9.5 10 L18 14 L9.5 18 Z" fill="#30c0e0" stroke="#30c0e0" stroke-width="1"/><path d="M1 10 L9.5 6 L18 10 L9.5 14 Z" fill="#1a1a1a" stroke="#ccc" stroke-width="1"/></svg>
<svg class="a" style="left:1875px;top:256px;" width="28" height="26" viewBox="0 0 28 26"><text x="20" y="9" font-size="9" font-family="Liberation Sans" fill="#333">C</text><path d="M1 18 L9.5 14 L18 18 L9.5 22 Z" fill="#474747" stroke="#bbb" stroke-width="1"/><path d="M1 14 L9.5 10 L18 14 L9.5 18 Z" fill="#474747" stroke="#bbb" stroke-width="1"/><path d="M1 10 L9.5 6 L18 10 L9.5 14 Z" fill="#474747" stroke="#bbb" stroke-width="1"/></svg>
<svg class="a" style="left:1875px;top:289px;" width="28" height="26" viewBox="0 0 28 26"><text x="20" y="9" font-size="9" font-family="Liberation Sans" fill="#333">U</text><path d="M1 18 L9.5 14 L18 18 L9.5 22 Z" fill="#2a2a2a" stroke="#bbb" stroke-width="1"/><path d="M1 14 L9.5 10 L18 14 L9.5 18 Z" fill="#474747" stroke="#bbb" stroke-width="1"/><path d="M1 10 L9.5 6 L18 10 L9.5 14 Z" fill="#474747" stroke="#bbb" stroke-width="1"/></svg>
<div class="a" style="left:35px;top:1027px;width:1836px;height:1px;background:#7a7a7a;"></div>
<svg class="a" style="left:42px;top:1032px;" width="12" height="18" viewBox="0 0 12 18"><circle cx="6" cy="6" r="5" fill="#f0d040"/><rect x="3.5" y="10" width="5" height="5" fill="#ccc"/></svg>
<div class="a" style="left:59px;top:1030px;width:21px;height:22px;background:#1a1a1a;"></div>
<svg class="a" style="left:62px;top:1032px;" width="16" height="16" viewBox="0 0 16 16"><path d="M2 5 L8 2 L14 5 L8 8 Z" fill="#d8f4fc" stroke="#8ce" stroke-width="0.8"/><path d="M8 6 V11" stroke="#30b0d8" stroke-width="1.4"/><path d="M2 12 H14 M2 14.5 H14" stroke="#30b0d8" stroke-width="1"/></svg>
<svg class="a" style="left:84px;top:1034px;" width="17" height="13" viewBox="0 0 17 13"><rect x="1" y="1" width="15" height="11" fill="#ccc"/><rect x="4" y="4" width="9" height="5" fill="#333"/></svg>
<svg class="a" style="left:106px;top:1034px;" width="17" height="13" viewBox="0 0 17 13"><rect x="1" y="1" width="15" height="11" fill="none" stroke="#bbb" stroke-width="1"/><path d="M1 4.5 H16 M1 8 H16 M5 1 V12 M9 1 V12 M13 1 V12" stroke="#bbb" stroke-width="0.8"/></svg>
<svg class="a" style="left:128px;top:1034px;" width="17" height="13" viewBox="0 0 17 13"><rect x="1" y="1" width="15" height="11" fill="none" stroke="#bbb" stroke-width="1"/><rect x="4" y="4" width="9" height="5" fill="none" stroke="#bbb" stroke-width="1"/></svg>
<div class="a" style="left:147px;top:1030px;width:21px;height:22px;background:#1a1a1a;"></div>
<svg class="a" style="left:150px;top:1032px;" width="17" height="17" viewBox="0 0 17 17"><path d="M2 1 V14 H15" fill="none" stroke="#30c0e0" stroke-width="1.3"/><path d="M1 3 H15" stroke="#30c0e0" stroke-width="1"/><ellipse cx="11" cy="11" rx="4.5" ry="2.5" fill="#eee"/><circle cx="11" cy="11" r="1.3" fill="#222"/></svg>
<svg class="a" style="left:172px;top:1032px;" width="17" height="17" viewBox="0 0 17 17"><rect x="0.5" y="0.5" width="16" height="16" fill="none" stroke="#9a30b0" stroke-width="1"/><ellipse cx="9" cy="8" rx="6" ry="4.5" fill="none" stroke="#e89020" stroke-width="1.2"/><path d="M4 11 L3 14 L6 12" fill="none" stroke="#e89020" stroke-width="1"/></svg>
<svg class="a" style="left:195px;top:1032px;" width="13" height="16" viewBox="0 0 13 16"><path d="M3 7 V4.5 Q3 1.5 6.5 1.5 Q10 1.5 10 4.5 V7" fill="none" stroke="#e8b020" stroke-width="1.3"/><rect x="1.5" y="7" width="10" height="7" fill="none" stroke="#e8b020" stroke-width="1.3"/></svg>
<div class="a" style="left:213px;top:1030px;width:21px;height:22px;background:#1a1a1a;"></div>
<svg class="a" style="left:216px;top:1032px;" width="16" height="18" viewBox="0 0 16 18"><path d="M10 1 L3 10 L8 10 L5 17 L13 7 L8 7 Z" fill="#f0d020"/></svg>
<svg class="a" style="left:229px;top:1047px;" width="4" height="4" viewBox="0 0 4 4"><path d="M4 0 L4 4 L0 4 Z" fill="#ccc"/></svg>
<svg class="a" style="left:237px;top:1032px;" width="18" height="18" viewBox="0 0 18 18"><circle cx="9" cy="9" r="6" fill="none" stroke="#bbb" stroke-width="1.2"/><circle cx="9" cy="9" r="2.5" fill="none" stroke="#bbb" stroke-width="1.2"/><path d="M9 1 V5 M9 13 V17 M1 9 H5 M13 9 H17" stroke="#bbb" stroke-width="1.2"/></svg>
<div class="a" style="left:257px;top:1030px;width:21px;height:22px;background:#555;"></div>
<svg class="a" style="left:260px;top:1032px;" width="17" height="17" viewBox="0 0 17 17"><rect x="1" y="6" width="13" height="10" fill="#aaa"/><circle cx="7" cy="11" r="2.5" fill="#666"/><path d="M12 1 L15 0 L15 12" fill="none" stroke="#f0d020" stroke-width="2"/></svg>
<svg class="a" style="left:273px;top:1047px;" width="4" height="4" viewBox="0 0 4 4"><path d="M4 0 L4 4 L0 4 Z" fill="#ccc"/></svg>
<svg class="a" style="left:283px;top:1033px;" width="16" height="15" viewBox="0 0 16 15"><path d="M1 5 Q8 0 15 5 L15 14 L1 14 Z" fill="#333"/></svg>
<div class="t" style="left:322px;top:1038px;font-size:9px;color:#c8c8c8;">82%</div>
<svg class="a" style="left:356px;top:1045px;" width="4" height="4" viewBox="0 0 4 4"><path d="M4 0 L4 4 L0 4 Z" fill="#ccc"/></svg>
<div class="a" style="left:367px;top:1030px;width:21px;height:22px;background:#1a1a1a;"></div>
<svg class="a" style="left:369px;top:1031px;" width="19" height="19" viewBox="0 0 19 19"><circle cx="9.5" cy="9.5" r="6.5" fill="#ccc"/><circle cx="9.5" cy="9.5" r="8" fill="none" stroke="#ccc" stroke-width="3" stroke-dasharray="2.6 1.6"/><circle cx="9.5" cy="9.5" r="3" fill="#777"/><circle cx="9.5" cy="9.5" r="1.5" fill="#ddd"/></svg>
<svg class="a" style="left:392px;top:1031px;" width="19" height="19" viewBox="0 0 19 19"><circle cx="9.5" cy="9.5" r="6" fill="#30c8f0"/><circle cx="9.5" cy="9.5" r="7.8" fill="none" stroke="#30c8f0" stroke-width="3.4" stroke-dasharray="2.4 1.7"/><circle cx="9.5" cy="9.5" r="2.6" fill="#f0d020"/></svg>
<svg class="a" style="left:405px;top:1045px;" width="4" height="4" viewBox="0 0 4 4"><path d="M4 0 L4 4 L0 4 Z" fill="#ccc"/></svg>
<div class="t" style="left:415px;top:1038px;font-size:9px;color:#c8c8c8;">1:1</div>
<svg class="a" style="left:425px;top:1045px;" width="4" height="4" viewBox="0 0 4 4"><path d="M4 0 L4 4 L0 4 Z" fill="#ccc"/></svg>
<div class="t" style="left:442px;top:1038px;font-size:9px;color:#c8c8c8;">sRGB</div>
<svg class="a" style="left:461px;top:1045px;" width="4" height="4" viewBox="0 0 4 4"><path d="M4 0 L4 4 L0 4 Z" fill="#ccc"/></svg>
<div class="t" style="left:474px;top:1038px;font-size:9px;color:#c8c8c8;">Ending-14</div>
<div class="t" style="left:1066px;top:1038px;font-size:9px;color:#c8c8c8;">Select</div>
<div class="t" style="left:1666px;top:1038px;font-size:9px;color:#c8c8c8;">Fr 1850</div>
<div class="t" style="left:1721px;top:1038px;font-size:9px;color:#c8c8c8;">-16.00:-6.87</div>
<div class="a" style="left:1852px;top:1033px;width:15px;height:15px;border:1px solid #333;background:transparent;box-shadow:inset 1px 1px 0 #555"></div>
<svg class="a" style="left:1279px;top:1056px;" width="34" height="11" viewBox="0 0 34 11"><path d="M1 0 V10 M17 0 V10 M33 0 V10" stroke="#aaa" stroke-width="0.8"/><path d="M4 7 L9 2.5 L14 7" fill="none" stroke="#ccc" stroke-width="1.8"/><path d="M20 3 L25 7.5 L30 3" fill="none" stroke="#ccc" stroke-width="1.8"/></svg>

<svg class="a" style="left:0;top:0" width="1871" height="1027" viewBox="0 0 1871 1027"><path d="M320.5 511.7 a11.4 9.1 0 1 1 22.7 2.7 M334.1 517.5 a5.2 4.2 0 1 1 10.5 -0.2 M340.2 508.8 a12.2 9.8 0 1 1 24.4 -2.3 M312.7 495.9 a9.4 7.5 0 1 1 18.7 0.4 M285.6 494.9 a7.2 5.8 0 1 1 14.5 2.5 M329.6 493.1 a11.4 9.1 0 1 1 22.8 -2.2 M326.5 492.1 a5.0 4.0 0 1 1 10.0 2.2 M292.5 494.9 a12.9 10.3 0 1 1 25.7 2.2 M301.2 518.8 a9.3 7.5 0 1 1 18.6 1.1 M294.6 518.1 a10.5 8.4 0 1 1 21.1 2.8 M341.3 497.6 a7.9 6.3 0 1 1 15.8 -2.0 M293.9 490.1 a7.4 5.9 0 1 1 14.8 0.6 M284.5 509.7 a7.7 6.2 0 1 1 15.4 -1.1 M336.9 503.4 a7.5 6.0 0 1 1 15.1 -0.1 M324.3 489.8 a12.8 10.2 0 1 1 25.6 -2.9 M334.8 515.0 a5.1 4.1 0 1 1 10.3 1.7 M310.4 506.5 a5.1 4.1 0 1 1 10.1 -2.7 M297.0 518.6 a6.6 5.3 0 1 1 13.1 1.5 M343.7 518.1 a7.8 6.2 0 1 1 15.5 -0.9 M319.7 512.8 a5.9 4.7 0 1 1 11.7 1.5 M290.4 528.3 Q276.3 554.0 300.6 572.7 M290.7 515.3 Q322.0 496.2 352.7 523.2 Q362.4 544.0 348.5 564.5 M285.4 518.9 Q277.2 554.0 298.5 580.0 M289.3 508.6 Q322.0 496.9 354.3 518.1 Q359.9 544.0 350.8 568.6 M319.3 510.7 Q322.0 536.0 330.0 554.7 M321.6 517.4 Q325.2 536.0 329.3 573.0 M329.8 516.6 Q333.1 536.0 332.8 557.0 M342.7 508.7 Q350.1 536.0 354.7 571.0 M350.6 511.3 Q358.4 536.0 358.2 563.6 M309.5 510.5 Q313.2 536.0 311.5 573.8 M349.6 514.0 Q357.6 536.0 351.0 555.8 M308.3 516.5 Q320.7 536.0 310.1 569.7 M338.5 515.1 Q348.5 536.0 346.6 561.3 M334.3 508.5 Q342.1 536.0 342.6 567.8 M309.6 519.1 Q319.4 536.0 314.9 554.2 M324.8 508.0 Q334.9 536.0 328.2 570.3 M328.8 542.6 L354.8 535.7 M329.9 542.9 L354.8 538.1 M331.4 541.3 L359.8 539.5 M327.2 539.4 L353.3 538.0 M289.2 579.7 Q324.3 564.2 364.3 570.1 M287.4 581.0 Q324.0 561.2 363.2 577.3 M285.6 582.6 Q316.3 558.6 361.4 575.8 M280.6 582.2 Q323.6 557.4 361.7 570.7 M285.5 575.6 Q278.5 634.0 281.5 679.5 M349.4 577.6 Q363.0 634.0 362.9 678.7 M287.4 584.8 Q276.0 634.0 283.2 680.2 M353.1 573.4 Q366.7 634.0 361.0 674.3 M304.3 577.9 L341.1 673.4 M341.6 595.2 L313.6 674.7 M308.3 588.8 L336.9 670.3 M341.9 587.3 L317.0 683.5 M295.1 600.2 Q320.9 618.0 346.1 604.8 M295.2 597.7 Q318.3 628.7 348.8 603.2 M281.8 666.3 Q295.8 684.0 322.0 681.5 Q355.7 684.0 365.3 668.8 M282.1 671.8 Q292.0 684.0 322.0 681.7 Q350.6 684.0 365.9 667.9 M280.0 685.0 L364.0 684.0 M301.9 688.0 L321.7 738.4 L307.5 813.5 L331.5 825.1 M341.3 688.0 L352.2 739.7 L333.3 819.5 L365.4 823.0 M301.7 688.0 L317.9 755.8 L303.5 814.9 L333.7 824.6 M339.0 688.0 L360.9 731.4 L339.1 814.4 L362.4 823.3 M302.0 688.0 L322.4 745.3 L304.3 816.0 L335.1 822.1 M335.5 688.0 L357.5 747.3 L340.7 816.4 L356.2 825.1 M295.6 717.0 L353.2 806.6 M311.6 688.0 L325.5 819.1 M294.8 728.1 L337.9 799.9 M319.9 688.0 L301.8 822.7 M300.9 711.3 L340.6 809.6 M321.9 688.0 L304.0 819.8 M286.0 824.0 L366.0 825.0" stroke="#f08a8a" stroke-width="1.3" fill="none" stroke-linecap="round"/><path d="M387.5 505.9 a7.6 6.1 0 1 1 15.3 -2.1 M391.9 516.0 a5.5 4.4 0 1 1 11.1 -1.6 M402.1 515.3 a10.3 8.2 0 1 1 20.6 -2.8 M393.3 521.3 a13.0 10.4 0 1 1 26.0 1.2 M356.4 516.9 a6.8 5.4 0 1 1 13.5 0.9 M414.9 512.8 a6.1 4.9 0 1 1 12.2 -1.2 M408.9 494.8 a9.9 7.9 0 1 1 19.8 -0.5 M365.0 509.9 a5.3 4.3 0 1 1 10.7 -2.4 M378.8 492.3 a5.5 4.4 0 1 1 10.9 0.5 M401.4 518.1 a6.1 4.9 0 1 1 12.1 -0.4 M371.2 509.2 a8.9 7.1 0 1 1 17.8 2.6 M373.4 491.8 a10.6 8.5 0 1 1 21.2 -2.1 M388.1 506.2 a12.3 9.8 0 1 1 24.6 0.3 M390.3 498.4 a9.4 7.5 0 1 1 18.8 -1.5 M402.0 506.5 a6.1 4.9 0 1 1 12.1 -1.6 M377.3 513.6 a6.4 5.1 0 1 1 12.9 1.3 M391.6 492.7 a10.3 8.3 0 1 1 20.7 -2.5 M361.1 509.0 a6.9 5.5 0 1 1 13.8 2.3 M355.8 523.9 Q350.4 556.0 361.2 579.8 M356.4 511.8 Q390.0 498.5 423.4 518.2 Q426.9 546.0 421.8 569.3 M358.6 521.7 Q349.0 556.0 363.8 575.9 M358.7 517.4 Q390.0 492.5 421.1 517.4 Q432.6 546.0 419.2 570.4 M386.0 519.6 Q394.2 538.0 391.5 567.5 M404.4 512.3 Q407.6 538.0 400.9 560.0 M362.4 520.2 Q370.1 538.0 370.5 556.0 M388.2 520.2 Q397.6 538.0 391.1 565.3 M366.0 508.5 Q369.9 538.0 368.0 563.7 M412.8 508.4 Q417.9 538.0 413.3 559.2 M377.2 509.8 Q385.0 538.0 373.7 574.5 M382.1 521.0 Q392.4 538.0 388.9 565.4 M416.7 507.9 Q426.7 538.0 417.4 569.5 M403.8 508.6 Q408.2 538.0 400.2 560.6 M364.7 512.4 Q378.4 538.0 366.5 562.2 M394.6 538.4 L425.9 538.6 M391.0 537.9 L425.4 541.3 M396.8 540.2 L427.8 530.1 M389.7 544.4 L423.3 530.5 M352.6 587.9 Q390.2 562.5 425.9 570.9 M356.8 581.9 Q395.2 559.5 427.4 570.6 M350.8 576.7 Q387.1 563.1 428.1 570.6 M346.5 587.7 Q386.2 564.1 429.0 576.4 M353.8 579.8 Q344.9 636.0 352.3 687.4 M423.0 584.3 Q429.7 636.0 426.1 680.3 M357.9 582.9 Q347.0 636.0 353.0 685.8 M426.1 577.7 Q431.6 636.0 432.6 677.8 M362.3 584.2 L398.1 682.4 M414.4 584.3 L365.1 671.3 M364.9 579.7 L406.3 679.2 M402.9 579.2 L378.8 670.8 M359.0 601.4 Q383.7 621.2 417.2 603.8 M364.5 604.7 Q389.0 627.8 420.6 606.9 M351.5 672.5 Q361.2 686.0 390.0 685.8 Q421.8 686.0 431.6 668.1 M354.5 669.1 Q357.0 686.0 390.0 682.3 Q417.4 686.0 428.1 671.4 M348.0 687.0 L432.0 686.0 M369.9 690.0 L384.8 753.3 L374.7 812.2 L396.6 824.5 M404.6 690.0 L430.3 750.0 L405.3 815.8 L429.1 825.4 M370.3 690.0 L384.1 749.7 L377.9 817.8 L397.1 826.1 M402.7 690.0 L428.5 739.9 L409.3 820.4 L425.4 825.3 M373.3 714.4 L413.0 804.8 M386.4 690.0 L394.2 822.3 M374.4 719.8 L403.1 812.3 M378.1 690.0 L369.5 825.8 M354.0 826.0 L434.0 827.0" stroke="#a8d8a0" stroke-width="1.3" fill="none" stroke-linecap="round"/><path d="M396.2 508.5 a8.9 7.1 0 1 1 17.7 2.3 M420.9 496.9 a7.2 5.8 0 1 1 14.4 -1.8 M428.0 501.4 a11.0 8.8 0 1 1 22.0 -1.6 M412.7 497.9 a12.9 10.3 0 1 1 25.7 2.0 M449.2 509.8 a8.2 6.6 0 1 1 16.4 -2.1 M450.9 505.7 a5.3 4.2 0 1 1 10.6 -2.0 M397.1 513.0 a12.2 9.8 0 1 1 24.4 -1.8 M443.5 500.4 a10.5 8.4 0 1 1 20.9 2.2 M434.9 515.6 a8.0 6.4 0 1 1 16.0 -2.9 M429.3 508.8 a6.5 5.2 0 1 1 13.0 -0.7 M415.8 490.9 a7.5 6.0 0 1 1 15.0 -0.7 M425.3 512.5 a8.2 6.6 0 1 1 16.4 2.9 M444.7 519.6 a10.5 8.4 0 1 1 21.1 1.0 M429.4 515.6 a7.9 6.3 0 1 1 15.8 0.6 M439.2 506.7 a7.3 5.8 0 1 1 14.5 -2.5 M398.9 501.4 a9.6 7.7 0 1 1 19.3 1.6 M436.3 499.8 a12.4 9.9 0 1 1 24.9 -1.4 M437.8 492.3 a11.0 8.8 0 1 1 22.1 1.0 M402.7 530.8 Q392.5 556.0 410.7 579.9 M403.9 512.5 Q433.0 494.2 468.2 518.4 Q476.8 546.0 461.4 567.1 M395.0 524.7 Q388.4 556.0 409.2 581.2 M406.3 517.4 Q433.0 492.9 461.9 522.9 Q473.4 546.0 462.7 567.0 M456.2 509.4 Q461.9 538.0 456.5 568.4 M456.8 508.7 Q466.4 538.0 465.1 560.5 M406.8 515.1 Q418.7 538.0 416.8 570.6 M428.0 512.8 Q436.4 538.0 438.5 562.0 M419.8 515.7 Q433.4 538.0 418.8 556.6 M409.9 515.0 Q419.2 538.0 408.9 559.8 M438.7 516.3 Q449.0 538.0 446.3 557.2 M432.1 519.4 Q445.6 538.0 433.2 573.0 M441.7 520.8 Q446.5 538.0 448.9 572.8 M431.6 507.6 Q435.9 538.0 430.1 557.9 M412.1 515.9 Q415.4 538.0 420.2 570.7 M441.8 544.6 L468.7 541.1 M443.5 542.5 L470.7 531.2 M433.2 535.8 L464.7 534.5 M437.5 543.2 L468.9 531.0 M393.8 582.5 Q431.5 560.2 474.0 574.5 M397.2 581.9 Q438.6 568.5 468.7 579.1 M397.7 579.6 Q428.4 563.8 471.5 578.8 M400.0 580.6 Q430.5 564.0 475.0 579.5 M401.8 579.6 Q389.7 636.0 397.8 684.2 M460.5 579.0 Q472.9 636.0 474.3 676.6 M398.7 577.2 Q390.8 636.0 398.9 684.3 M463.9 585.2 Q471.7 636.0 471.8 682.5 M403.1 593.3 L447.7 670.3 M446.0 587.2 L414.2 678.3 M404.1 582.4 L462.4 677.1 M450.4 579.7 L411.7 685.3 M406.9 604.1 Q423.5 624.7 463.8 605.2 M405.9 608.8 Q429.5 627.6 456.4 600.3 M397.2 669.3 Q406.0 686.0 433.0 685.3 Q466.3 686.0 472.0 674.0 M397.0 673.1 Q400.2 686.0 433.0 685.1 Q462.4 686.0 476.8 674.0 M391.0 687.0 L475.0 686.0 M412.2 690.0 L432.1 743.4 L416.6 814.3 L447.0 824.5 M445.7 690.0 L468.5 732.5 L445.6 821.2 L477.6 824.8 M410.2 690.0 L436.9 757.2 L418.2 813.1 L441.8 827.7 M453.4 690.0 L463.4 734.7 L446.1 816.1 L476.0 825.5 M413.5 702.1 L458.5 815.5 M427.8 690.0 L413.5 818.9 M410.9 711.0 L454.1 805.6 M425.0 690.0 L438.0 819.9 M397.0 826.0 L477.0 827.0" stroke="#a8d8a0" stroke-width="1.3" fill="none" stroke-linecap="round"/><path d="M471.0 499.4 a9.4 7.5 0 1 1 18.7 1.4 M441.9 506.4 a10.6 8.5 0 1 1 21.3 -3.0 M484.3 504.4 a9.0 7.2 0 1 1 18.1 0.7 M485.7 492.8 a9.0 7.2 0 1 1 18.0 -2.8 M463.5 502.1 a5.2 4.1 0 1 1 10.3 -1.2 M460.4 512.0 a12.4 9.9 0 1 1 24.8 -0.8 M465.4 513.8 a12.5 10.0 0 1 1 25.0 2.7 M500.9 500.7 a6.3 5.1 0 1 1 12.7 2.6 M438.1 505.4 a10.9 8.7 0 1 1 21.8 0.2 M461.5 520.6 a7.4 5.9 0 1 1 14.8 0.3 M489.3 495.4 a7.8 6.2 0 1 1 15.6 -0.0 M471.6 497.6 a8.6 6.9 0 1 1 17.3 -2.6 M443.5 501.9 a6.2 4.9 0 1 1 12.3 2.8 M449.6 499.8 a11.3 9.0 0 1 1 22.5 1.4 M450.8 517.5 a10.0 8.0 0 1 1 20.0 -0.7 M477.1 498.9 a7.1 5.7 0 1 1 14.2 2.3 M439.5 531.8 Q429.4 557.0 446.1 575.4 M445.9 517.7 Q474.0 490.1 502.3 525.2 Q514.0 547.0 505.0 565.3 M440.7 522.4 Q433.8 557.0 449.9 579.9 M441.8 522.4 Q474.0 491.1 502.5 523.8 Q510.7 547.0 498.5 568.7 M482.9 521.3 Q493.6 539.0 480.0 569.9 M494.6 508.9 Q505.7 539.0 494.8 563.0 M444.1 519.1 Q452.3 539.0 454.5 566.3 M453.3 510.5 Q458.5 539.0 464.5 561.1 M449.3 512.6 Q452.2 539.0 452.1 569.4 M483.0 509.8 Q486.7 539.0 486.9 570.7 M470.8 516.2 Q483.8 539.0 469.2 562.4 M473.6 515.6 Q486.4 539.0 478.5 570.2 M469.2 519.5 Q481.2 539.0 469.9 559.2 M459.6 512.7 Q472.2 539.0 459.8 569.6 M480.7 547.5 L504.9 540.2 M477.0 537.2 L509.1 541.1 M480.0 536.6 L511.8 535.6 M437.6 585.7 Q471.1 564.1 512.3 572.2 M430.8 585.6 Q472.9 568.7 509.6 574.6 M432.2 588.3 Q477.5 569.0 514.1 572.3 M441.2 579.7 Q428.2 637.0 436.5 683.3 M502.1 581.1 Q519.5 637.0 517.6 680.7 M438.0 586.2 Q428.9 637.0 436.3 681.7 M510.9 581.5 Q515.5 637.0 512.2 681.4 M463.5 587.6 L485.0 679.2 M500.4 586.6 L461.2 685.7 M450.5 595.2 L492.7 673.2 M483.1 597.8 L457.2 678.1 M450.2 605.9 Q469.0 624.4 504.4 604.1 M445.7 608.1 Q470.0 622.6 499.0 609.3 M437.8 667.8 Q448.0 687.0 474.0 683.5 Q501.3 687.0 510.7 670.6 M437.0 673.9 Q441.3 687.0 474.0 685.8 Q500.8 687.0 514.6 669.0 M432.0 688.0 L516.0 687.0 M454.6 691.0 L468.6 753.4 L453.5 819.1 L484.0 827.4 M491.4 691.0 L509.9 749.5 L493.0 817.3 L512.0 828.5 M452.3 691.0 L473.0 747.3 L463.7 814.0 L487.9 828.0 M492.3 691.0 L504.0 750.9 L485.7 821.8 L515.9 826.7 M455.8 724.0 L494.2 811.6 M464.1 691.0 L471.9 823.9 M454.9 703.4 L498.8 797.0 M471.0 691.0 L473.6 825.7 M438.0 827.0 L518.0 828.0" stroke="#a8d8a0" stroke-width="1.3" fill="none" stroke-linecap="round"/><path d="M499.9 508.1 a8.8 7.1 0 1 1 17.7 -2.3 M507.1 522.2 a11.8 9.5 0 1 1 23.6 -1.6 M551.0 511.8 a8.1 6.5 0 1 1 16.2 0.9 M515.6 499.8 a5.1 4.1 0 1 1 10.2 0.9 M534.2 514.8 a9.0 7.2 0 1 1 18.1 -0.4 M517.6 514.5 a8.0 6.4 0 1 1 16.0 0.6 M544.0 505.2 a10.5 8.4 0 1 1 21.0 -2.6 M516.5 517.9 a6.2 4.9 0 1 1 12.4 -2.7 M501.1 515.5 a5.9 4.7 0 1 1 11.7 -0.3 M525.2 516.7 a8.8 7.1 0 1 1 17.6 0.1 M496.4 516.4 a11.1 8.9 0 1 1 22.3 0.7 M548.7 510.7 a10.7 8.6 0 1 1 21.5 2.1 M533.4 491.6 a12.1 9.7 0 1 1 24.2 2.9 M511.2 493.1 a7.7 6.2 0 1 1 15.4 -2.4 M522.9 493.9 a6.8 5.4 0 1 1 13.5 -3.0 M522.6 500.6 a10.8 8.7 0 1 1 21.7 -0.7 M504.5 521.5 a12.2 9.7 0 1 1 24.3 1.1 M511.3 503.9 a8.6 6.9 0 1 1 17.2 -0.5 M498.2 526.5 Q496.1 557.0 512.5 581.9 M507.5 520.2 Q536.0 498.7 571.3 524.9 Q575.3 547.0 565.3 570.3 M505.1 529.6 Q493.5 557.0 508.5 577.6 M504.0 519.2 Q536.0 497.7 565.5 522.3 Q578.7 547.0 562.9 565.8 M542.3 512.8 Q546.1 539.0 542.9 557.1 M514.9 513.8 Q518.2 539.0 511.0 568.0 M563.5 520.3 Q569.4 539.0 574.3 558.6 M515.0 507.1 Q517.7 539.0 520.7 572.1 M534.7 519.9 Q542.1 539.0 545.4 569.2 M538.2 509.7 Q545.3 539.0 541.3 573.5 M519.8 511.7 Q531.6 539.0 516.9 567.7 M519.2 517.6 Q528.3 539.0 516.7 571.6 M530.4 512.1 Q542.7 539.0 538.9 563.2 M546.7 509.0 Q554.9 539.0 544.0 569.8 M561.0 517.2 Q563.4 539.0 565.2 566.4 M540.3 537.8 L568.2 536.4 M535.9 544.1 L567.9 534.5 M536.1 539.6 L573.4 534.5 M536.2 540.1 L573.6 532.1 M496.1 579.5 Q538.2 564.6 572.0 581.3 M495.9 585.2 Q535.4 568.7 571.6 573.7 M495.4 580.2 Q539.9 565.0 574.5 577.1 M502.1 583.8 Q535.4 566.6 577.2 575.9 M503.3 578.6 Q493.5 637.0 501.0 683.4 M566.7 582.2 Q578.7 637.0 573.4 680.6 M506.3 577.5 Q490.9 637.0 500.0 688.2 M563.7 576.0 Q579.0 637.0 574.3 682.3 M506.7 588.1 L545.9 676.3 M557.9 589.2 L528.5 684.5 M518.4 596.0 L546.3 678.6 M550.4 591.5 L510.7 685.2 M506.7 608.4 Q535.4 632.3 562.9 611.3 M513.0 600.6 Q533.5 629.7 563.6 604.3 M495.4 670.3 Q509.5 687.0 536.0 684.6 Q564.0 687.0 577.0 670.5 M498.9 670.6 Q504.3 687.0 536.0 683.1 Q568.5 687.0 577.3 668.9 M494.0 688.0 L578.0 687.0 M518.0 691.0 L537.0 749.1 L524.8 819.2 L545.7 826.4 M553.1 691.0 L567.9 750.7 L544.5 819.0 L573.3 827.1 M513.5 691.0 L532.7 758.8 L523.5 814.8 L547.5 825.1 M548.2 691.0 L568.3 751.7 L547.7 817.0 L570.8 825.4 M520.9 726.6 L573.6 813.7 M532.8 691.0 L521.1 820.4 M506.4 699.6 L551.3 811.4 M525.8 691.0 L514.3 821.4 M500.0 827.0 L580.0 828.0" stroke="#9ccc94" stroke-width="1.3" fill="none" stroke-linecap="round"/><path d="M581.5 517.2 a10.8 8.7 0 1 1 21.7 1.4 M588.3 507.8 a8.1 6.5 0 1 1 16.1 0.4 M549.0 491.2 a7.1 5.7 0 1 1 14.2 -0.3 M538.7 492.6 a7.0 5.6 0 1 1 14.0 -0.8 M587.6 505.6 a11.7 9.4 0 1 1 23.4 1.5 M567.8 500.3 a8.1 6.5 0 1 1 16.3 -1.1 M567.3 517.4 a11.3 9.1 0 1 1 22.6 -1.2 M537.9 490.3 a9.7 7.7 0 1 1 19.4 -1.6 M531.5 499.7 a6.8 5.5 0 1 1 13.7 -1.8 M573.3 508.7 a7.3 5.8 0 1 1 14.5 1.4 M545.3 519.5 a6.0 4.8 0 1 1 11.9 0.6 M574.2 513.4 a8.9 7.1 0 1 1 17.8 2.2 M572.6 512.1 a5.6 4.5 0 1 1 11.3 -1.9 M562.0 507.4 a5.8 4.6 0 1 1 11.5 1.5 M551.0 505.2 a9.2 7.3 0 1 1 18.4 2.0 M547.5 507.9 a9.8 7.9 0 1 1 19.7 0.9 M532.5 523.3 Q525.8 556.0 543.8 579.2 M535.1 515.4 Q568.0 494.6 597.6 517.0 Q611.4 546.0 592.2 568.0 M532.4 520.4 Q524.2 556.0 540.3 577.2 M541.3 511.0 Q568.0 492.5 601.6 522.2 Q604.2 546.0 593.8 566.2 M591.7 513.1 Q596.8 538.0 595.4 565.7 M547.0 516.7 Q557.6 538.0 550.6 566.7 M584.2 521.3 Q593.6 538.0 580.9 566.1 M577.7 511.3 Q587.9 538.0 579.6 568.3 M574.8 516.7 Q588.0 538.0 582.2 570.2 M580.3 509.7 Q589.6 538.0 586.2 557.2 M583.3 509.6 Q591.2 538.0 587.6 570.4 M583.9 513.5 Q597.2 538.0 587.0 567.3 M597.5 511.2 Q608.1 538.0 608.8 557.7 M584.6 516.4 Q593.1 538.0 593.3 573.2 M568.8 540.8 L602.9 538.4 M578.5 544.6 L604.6 530.8 M572.1 546.0 L605.6 539.1 M528.0 585.2 Q568.4 565.7 609.4 580.4 M532.6 587.6 Q567.9 563.9 609.6 576.7 M524.6 587.5 Q565.8 564.0 603.4 572.3 M540.3 579.3 Q524.4 636.0 532.5 681.9 M601.7 580.8 Q613.2 636.0 607.8 678.6 M533.6 580.4 Q522.0 636.0 527.0 681.2 M598.1 583.2 Q613.5 636.0 606.8 678.0 M543.9 590.6 L585.5 671.9 M586.5 583.4 L543.5 682.6 M540.1 586.8 L592.4 678.7 M593.5 584.3 L562.7 670.7 M544.0 603.1 Q558.0 623.1 600.9 608.6 M542.4 607.7 Q558.1 623.7 595.7 610.9 M533.3 667.2 Q541.9 686.0 568.0 684.2 Q596.4 686.0 604.7 669.4 M530.2 669.6 Q536.5 686.0 568.0 685.8 Q597.8 686.0 606.5 672.2 M526.0 687.0 L610.0 686.0 M547.4 690.0 L567.1 740.1 L548.9 820.0 L581.5 826.1 M585.7 690.0 L606.1 741.4 L580.4 815.2 L602.4 824.5 M549.1 690.0 L562.1 751.5 L550.0 813.9 L577.8 826.0 M581.1 690.0 L608.2 740.7 L576.8 814.7 L612.7 826.3 M538.8 724.5 L579.4 813.8 M568.5 690.0 L564.6 818.4 M541.5 729.5 L595.8 800.2 M551.6 690.0 L547.8 822.2 M532.0 826.0 L612.0 827.0" stroke="#a8d8a0" stroke-width="1.3" fill="none" stroke-linecap="round"/><path d="M319.4 503.3 a12.2 9.7 0 1 1 24.3 2.4 M345.4 514.1 a6.1 4.9 0 1 1 12.1 2.7 M363.3 504.4 a12.1 9.7 0 1 1 24.2 -1.2 M370.4 499.3 a12.4 9.9 0 1 1 24.8 2.0 M374.2 512.3 a5.6 4.5 0 1 1 11.2 -1.3 M351.5 518.1 a10.4 8.4 0 1 1 20.9 -2.8 M335.9 500.0 a6.4 5.1 0 1 1 12.7 -1.6 M345.9 500.9 a7.1 5.7 0 1 1 14.3 -0.5 M369.6 508.1 a11.0 8.8 0 1 1 22.0 2.6 M316.2 517.2 a5.8 4.6 0 1 1 11.5 -1.8 M317.9 528.0 Q308.9 555.0 324.8 578.8 M319.4 511.3 Q350.0 490.2 378.9 515.4 Q393.6 545.0 381.6 565.8 M344.7 509.5 Q356.1 537.0 348.6 558.4 M373.0 519.9 Q375.6 537.0 376.4 559.4 M358.3 510.7 Q363.9 537.0 359.2 567.1 M350.2 512.8 Q360.4 537.0 353.8 573.9 M346.3 517.7 Q359.5 537.0 352.3 566.8 M367.4 516.4 Q371.7 537.0 370.1 558.1 M349.3 542.2 L382.6 532.1 M349.3 534.3 L385.4 533.3 M311.2 583.1 Q354.9 565.0 387.2 580.9 M308.2 582.0 Q351.7 560.9 393.9 576.3 M320.1 576.7 Q310.7 635.0 310.3 683.9 M384.4 576.9 Q390.1 635.0 388.6 682.8 M333.2 586.4 L369.5 679.5 M363.2 578.5 L324.6 678.3 M323.0 608.7 Q346.2 629.2 382.9 605.0 M311.4 668.8 Q319.0 685.0 350.0 684.0 Q380.6 685.0 387.0 672.6 M308.0 686.0 L392.0 685.0 M332.3 689.0 L353.0 747.9 L335.1 815.6 L357.4 823.5 M368.3 689.0 L384.2 732.6 L367.8 819.0 L393.2 824.5 M328.3 689.0 L353.1 741.3 L336.0 816.6 L359.3 823.0 M366.9 689.0 L389.5 741.8 L369.8 814.8 L392.8 824.7 M326.6 707.1 L366.9 806.0 M342.6 689.0 L353.5 821.8 M325.0 721.0 L378.8 803.2 M334.4 689.0 L347.1 820.1 M314.0 825.0 L394.0 826.0" stroke="#f2f2f2" stroke-width="1.6" fill="none" stroke-linecap="round"/><path d="M310 690 L309 810 M345 690 L343 805 M350 700 L385 770 L360 815 M305 812 L350 812 M312 820 L355 822" stroke="#f4f4f4" stroke-width="2.6" fill="none" stroke-linecap="round"/><path d="M300 690 L298 815 M290 760 L285 810 M330 695 L335 780" stroke="#f08a8a" stroke-width="2.4" fill="none" stroke-linecap="round"/></svg>
<svg class="a" style="left:0;top:0" width="1871" height="1027" viewBox="0 0 1871 1027"><g stroke="#f0f0f0" stroke-width="2" fill="none" stroke-linecap="round">
<path d="M1447 727 Q1445 720 1449 716 Q1452 724 1457 729 M1454 718 Q1455 715 1457 717 Q1459 725 1463 728 M1459 717 Q1463 727 1470 729 Q1480 731 1485 736"/>
<path d="M1440 741 Q1450 731 1466 731 Q1476 732 1481 737"/>
<circle cx="1487" cy="744" r="9.5"/>
<path d="M1491 750 Q1498 756 1499 760 M1484 752 Q1490 758 1494 762"/>
<path d="M1440 741 Q1443 752 1452 758 Q1462 764 1474 762 M1446 748 Q1456 754 1467 755 M1452 742 Q1458 746 1464 747"/>
<path d="M1448 760 Q1438 778 1434 798 Q1432 818 1447 822 L1464 823 M1443 792 Q1441 805 1445 812"/>
<path d="M1451 776 Q1462 780 1476 775 Q1490 772 1492 781 Q1492 789 1478 792 Q1462 795 1452 789 M1455 786 Q1470 783 1487 786"/>
<path d="M1454 801 Q1470 795 1487 797 L1495 820 Q1492 828 1486 826 M1466 802 L1469 834 L1479 834 L1477 802 M1478 822 L1495 830 L1480 834"/>
</g>
<path d="M1390 815 Q1420 808 1445 812 M1394 826 Q1412 842 1452 840 Q1480 838 1497 832" stroke="#444" stroke-width="0.8" fill="none"/></svg>

<div class="a" style="left:1918px;top:81px;width:238px;height:975px;background:#8a8a8a;"></div>
<div class="a" style="left:1919px;top:82px;width:236px;height:973px;background:#474747;"></div>
<svg class="a" style="left:1926px;top:87px;" width="13" height="13" viewBox="0 0 13 13"><rect x="0" y="0" width="10" height="2" fill="#ccc"/><rect x="0" y="4" width="10" height="2" fill="#ccc"/><rect x="0" y="8" width="10" height="2" fill="#ccc"/><path d="M12 9 L12 12 L9 12 Z" fill="#ccc"/></svg>
<div class="a" style="left:1994px;top:84px;width:61px;height:26px;background:linear-gradient(180deg,#505050,#3a3a3a);border:1px solid #555;border-bottom:none;border-radius:3px 3px 0 0"></div>
<div class="t" style="left:2004px;top:91px;font-size:12.1px;color:#e8e8e8;">Colour</div>
<div class="a" style="left:2054px;top:86px;width:64px;height:24px;background:#4a4a4a;border:1px solid #555;border-bottom:none"></div>
<div class="t" style="left:2069px;top:93px;font-size:11.3px;color:#c8c8c8;">Guides</div>
<svg class="a" style="left:2122px;top:89px;" width="30" height="14" viewBox="0 0 30 14"><path d="M6 1 V12 M0.5 6.5 H11.5" stroke="#ccc" stroke-width="2.4"/><path d="M15.5 0 V13" stroke="#999" stroke-width="0.8"/><path d="M19 2 L27 10 M27 2 L19 10" stroke="#ccc" stroke-width="2.6"/></svg>
<svg class="a" style="left:1926px;top:124px;" width="12" height="8" viewBox="0 0 12 8"><path d="M0 0 L12 0 L6 7 Z" fill="#bbb"/></svg>
<div class="t" style="left:1941px;top:122px;font-size:11.2px;color:#c8c8c8;">Palettes</div>
<svg class="a" style="left:2022px;top:121px;" width="12" height="12" viewBox="0 0 12 12"><path d="M6 0.5 V11.5 M0.5 6 H11.5" stroke="#ccc" stroke-width="1.6"/></svg>
<svg class="a" style="left:2050px;top:126px;" width="12" height="3" viewBox="0 0 12 3"><path d="M0 1.5 H12" stroke="#ccc" stroke-width="1.6"/></svg>
<svg class="a" style="left:2078px;top:120px;" width="15" height="12" viewBox="0 0 15 12"><path d="M1 3 H6 L7 1 H13 V11 H1 Z" fill="#e89020"/><path d="M3 5 H14 L13 11 H1 Z" fill="#f3b050"/></svg>
<svg class="a" style="left:2113px;top:119px;" width="12" height="15" viewBox="0 0 12 15"><path d="M6 1 L10 6 H7.5 V14 H4.5 V6 H2 Z" fill="#333"/></svg>
<svg class="a" style="left:2140px;top:119px;" width="12" height="15" viewBox="0 0 12 15"><path d="M2 1 Q8 2 8 10 L10 10 L7 14 L4 10 L6 10 Q6 4 2 3 Z" fill="#ccc"/></svg>
<div class="a" style="left:1926px;top:147px;width:229px;height:666px;background:#161616;"></div>
<div class="t" style="left:1942px;top:150px;font-size:11.5px;color:#e8e8e8;font-weight:bold">Scene Palettes</div>
<div class="a" style="left:1926px;top:166px;width:228px;height:19px;background:#22c8e0;"></div>
<svg class="a" style="left:1955px;top:168px;" width="14" height="14" viewBox="0 0 14 14"><circle cx="7" cy="7" r="5.8" fill="none" stroke="#888" stroke-width="1.2"/><path d="M4 7 L6.5 9.5 L10 3.5" fill="none" stroke="#5a5a5a" stroke-width="1.4"/></svg>
<div class="t" style="left:1975px;top:170px;font-size:11.1px;color:#111;">Lilia_01</div>
<svg class="a" style="left:1955px;top:188px;" width="14" height="14" viewBox="0 0 14 14"><circle cx="7" cy="7" r="5.8" fill="none" stroke="#aaa" stroke-width="1.2"/><path d="M4 7 L6.5 9.5 L10 3.5" fill="none" stroke="#5a5a5a" stroke-width="1.4"/></svg>
<div class="t" style="left:1975px;top:190px;font-size:11.1px;color:#d0d0d0;">Tally_Animatic</div>
<svg class="a" style="left:1955px;top:208px;" width="14" height="14" viewBox="0 0 14 14"><circle cx="7" cy="7" r="5.8" fill="none" stroke="#aaa" stroke-width="1.2"/><path d="M4 7 L6.5 9.5 L10 3.5" fill="none" stroke="#5a5a5a" stroke-width="1.4"/></svg>
<div class="t" style="left:1975px;top:210px;font-size:11.1px;color:#d0d0d0;">Misc</div>
<svg class="a" style="left:1955px;top:228px;" width="14" height="14" viewBox="0 0 14 14"><circle cx="7" cy="7" r="5.8" fill="none" stroke="#aaa" stroke-width="1.2"/><path d="M4 7 L6.5 9.5 L10 3.5" fill="none" stroke="#5a5a5a" stroke-width="1.4"/></svg>
<div class="t" style="left:1975px;top:230px;font-size:11.1px;color:#d0d0d0;">Y_Lilia</div>
<div class="a" style="left:1926px;top:812px;width:229px;height:10px;background:#555;"></div>
<svg class="a" style="left:2072px;top:811px;" width="30" height="12" viewBox="0 0 30 12"><path d="M1 1 V11 M15 1 V11 M29 1 V11" stroke="#aaa" stroke-width="0.8"/><path d="M4 8 L8 4 L12 8" fill="none" stroke="#ccc" stroke-width="1.6"/><path d="M18 4 L22 8 L26 4" fill="none" stroke="#ccc" stroke-width="1.6"/></svg>
<svg class="a" style="left:1932px;top:830px;" width="13" height="13" viewBox="0 0 13 13"><path d="M6.5 1 V12 M1 6.5 H12" stroke="#ccc" stroke-width="1.6"/></svg>
<svg class="a" style="left:1957px;top:835px;" width="13" height="3" viewBox="0 0 13 3"><path d="M1 1.5 H12" stroke="#ccc" stroke-width="1.6"/></svg>
<svg class="a" style="left:1982px;top:829px;" width="15" height="15" viewBox="0 0 15 15"><path d="M6 4 V14 M1 9 H11" stroke="#ccc" stroke-width="1.6"/><path d="M8 1.5 H13 M10.5 1.5 V6" stroke="#ccc" stroke-width="1"/></svg>
<svg class="a" style="left:2068px;top:829px;" width="16" height="13" viewBox="0 0 16 13"><path d="M1 12 Q5 10 9 6 L12 2 L14 4 L10 8 Q6 11 1 12 Z" fill="#2a90e0"/><path d="M11 3 L15 1" stroke="#e8a040" stroke-width="2"/></svg>
<div class="a" style="left:2086px;top:826px;width:20px;height:20px;background:#1a1a1a;"></div>
<div class="a" style="left:2090px;top:830px;width:12px;height:12px;background:#6a1000;border-radius:3px"></div>
<svg class="a" style="left:2118px;top:829px;" width="13" height="14" viewBox="0 0 13 14"><path d="M1 13 L3 8 L10 1 L13 4 L6 11 Z" fill="#f0a030"/></svg>
<div class="a" style="left:2134px;top:826px;width:20px;height:20px;background:#1a1a1a;"></div>
<div class="a" style="left:2138px;top:830px;width:12px;height:12px;background:#6a1000;border-radius:3px"></div>
<div class="a" style="left:1926px;top:857px;width:229px;height:191px;background:#161616;"></div>
<div class="a" style="left:1926px;top:858px;width:228px;height:19px;background:#28a8c0;outline:1px dotted #bdf;outline-offset:-1px"></div>
<div class="a" style="left:1986px;top:865px;width:5px;height:5px;background:#111;border-radius:50%"></div>
<div class="a" style="left:1929px;top:860px;width:44px;height:15px;background:#6a1000;border:2px solid #bbb;border-bottom-width:2px"></div>
<div class="t" style="left:2000px;top:863px;font-size:11.1px;color:#111;">O_Skin</div>
<div class="a" style="left:1929px;top:880px;width:44px;height:15px;background:#200400;border:2px solid #bbb;border-bottom-width:2px"></div>
<div class="t" style="left:2000px;top:883px;font-size:11.1px;color:#d0d0d0;">O_Skin01</div>
<div class="a" style="left:1929px;top:900px;width:44px;height:15px;background:#500080;border:2px solid #bbb;border-bottom-width:2px"></div>
<div class="t" style="left:2000px;top:903px;font-size:11.1px;color:#d0d0d0;">O_Hair_Back</div>
<div class="a" style="left:1929px;top:920px;width:44px;height:15px;background:#000020;border:2px solid #bbb;border-bottom-width:2px"></div>
<div class="t" style="left:2000px;top:923px;font-size:11.1px;color:#d0d0d0;">sO_Hair</div>
<div class="a" style="left:1929px;top:940px;width:44px;height:15px;background:#ffffff;border:2px solid #bbb;border-bottom-width:2px"></div>
<div class="t" style="left:2000px;top:943px;font-size:11.1px;color:#d0d0d0;">Eyes</div>
<div class="a" style="left:1929px;top:960px;width:44px;height:15px;background:#282838;border:2px solid #bbb;border-bottom-width:2px"></div>
<div class="t" style="left:2000px;top:963px;font-size:11.1px;color:#d0d0d0;">C_Hair_BG</div>
<div class="a" style="left:1929px;top:980px;width:44px;height:15px;background:#d8f4fc;border:2px solid #bbb;border-bottom-width:2px"></div>
<div class="t" style="left:2000px;top:983px;font-size:11.1px;color:#d0d0d0;">L_Hair</div>
<div class="a" style="left:1929px;top:1000px;width:44px;height:15px;background:#101030;border:2px solid #bbb;border-bottom-width:2px"></div>
<div class="t" style="left:2000px;top:1003px;font-size:11.1px;color:#d0d0d0;">Clothes_O</div>
<div class="a" style="left:1929px;top:1020px;width:44px;height:15px;background:#2e2e48;border:2px solid #bbb;border-bottom-width:2px"></div>
<div class="t" style="left:2000px;top:1023px;font-size:11.1px;color:#d0d0d0;">C_Hair</div>
<div class="a" style="left:1929px;top:1040px;width:44px;height:9px;background:#3e3e50;border:2px solid #bbb;border-bottom-width:0px"></div>
<div class="t" style="left:2000px;top:1043px;font-size:11.1px;color:#d0d0d0;">C_Hoodie</div>
<div class="a" style="left:1926px;top:1048px;width:229px;height:7px;background:#474747;"></div>
<svg class="a" style="left:1906px;top:550px;" width="11" height="36" viewBox="0 0 11 36"><path d="M0.5 0 V16 M0.5 20 V36" stroke="#aaa" stroke-width="0.8"/><path d="M8 4 L3 8 L8 12" fill="none" stroke="#ccc" stroke-width="1.5"/><path d="M3 22 L8 26 L3 30" fill="none" stroke="#ccc" stroke-width="1.5"/></svg>

<div class="a" style="left:2168px;top:81px;width:391px;height:418px;background:#8a8a8a;"></div>
<div class="a" style="left:2169px;top:82px;width:389px;height:416px;background:#474747;"></div>
<svg class="a" style="left:2176px;top:87px;" width="13" height="13" viewBox="0 0 13 13"><rect x="0" y="0" width="10" height="2" fill="#ccc"/><rect x="0" y="4" width="10" height="2" fill="#ccc"/><rect x="0" y="8" width="10" height="2" fill="#ccc"/><path d="M12 9 L12 12 L9 12 Z" fill="#ccc"/></svg>
<div class="a" style="left:2394px;top:83px;width:126px;height:24px;background:linear-gradient(180deg,#555,#3a3a3a);border-radius:3px 3px 0 0"></div>
<div class="t" style="left:2439px;top:89px;font-size:11.6px;color:#e8e8e8;">Library</div>
<svg class="a" style="left:2525px;top:88px;" width="30" height="14" viewBox="0 0 30 14"><path d="M6 1 V12 M0.5 6.5 H11.5" stroke="#ccc" stroke-width="2.4"/><path d="M15.5 0 V13" stroke="#999" stroke-width="0.8"/><path d="M19 2 L27 10 M27 2 L19 10" stroke="#ccc" stroke-width="2.6"/></svg>
<div class="a" style="left:2171px;top:108px;width:7px;height:32px;background:#1c1c1c;"><div class="a" style="left:1px;top:1px;right:1px;bottom:1px;background:linear-gradient(90deg,#6a6a6a,#3c3c3c)"></div></div>
<svg class="a" style="left:2184px;top:115px;" width="20" height="16" viewBox="0 0 20 16"><path d="M1 3 H7 L8 1 H14 V5 H19 L16 15 H4 Z" fill="#e89020"/><path d="M4 6 H19 L16 15 H4 Z" fill="#f6b868"/></svg>
<svg class="a" style="left:2219px;top:114px;" width="17" height="18" viewBox="0 0 17 18"><path d="M2 1 H15 V17 H4 L2 15 Z" fill="#cdeef7"/><path d="M5 3 L12 15 M12 3 L5 15" stroke="#222" stroke-width="1.2"/></svg>
<svg class="a" style="left:2253px;top:114px;" width="14" height="17" viewBox="0 0 14 17"><path d="M1 1 H13 V16 H3 L1 14 Z" fill="#bfe8f5"/><path d="M1 14 H3 V16" fill="none" stroke="#457" stroke-width="1"/></svg>
<svg class="a" style="left:2282px;top:114px;" width="20" height="18" viewBox="0 0 20 18"><path d="M3 9 A7 7 0 0 1 15 4" fill="none" stroke="#30b030" stroke-width="2.2"/><path d="M13 1 L17 5 L12 6 Z" fill="#30b030"/><path d="M17 9 A7 7 0 0 1 5 14" fill="none" stroke="#30b030" stroke-width="2.2"/><path d="M7 17 L3 13 L8 12 Z" fill="#30b030"/></svg>
<svg class="a" style="left:2319px;top:115px;" width="16" height="16" viewBox="0 0 16 16"><path d="M5 2 H12 M2 7 H7 M9 7 H12 M5 12 H12" stroke="#ccc" stroke-width="1.6" stroke-dasharray="2 1"/></svg>
<svg class="a" style="left:2351px;top:116px;" width="17" height="14" viewBox="0 0 17 14"><path d="M1 2 H16 M1 6 H16 M1 10 H16 M1 13 H16" stroke="#ccc" stroke-width="1.4" stroke-dasharray="2.5 1"/></svg>
<svg class="a" style="left:2386px;top:114px;" width="15" height="18" viewBox="0 0 15 18"><rect x="1" y="1" width="8" height="4" fill="#ccc"/><rect x="5" y="8" width="9" height="4" fill="#ccc"/><rect x="5" y="13" width="9" height="4" fill="#ccc"/></svg>
<div class="a" style="left:2170px;top:141px;width:377px;height:346px;background:#8898a8;"></div>
<div class="a" style="left:2171px;top:142px;width:375px;height:344px;background:#474747;"></div>
<div class="t" style="left:2303px;top:152px;font-size:12.2px;color:#d0d0d0;">Drawing Substitution</div>
<div class="t" style="left:2180px;top:172px;font-size:11.7px;color:#d0d0d0;">Ending</div>
<div class="a" style="left:2223px;top:170px;width:315px;height:27px;background:#181818;border:1px solid #2a2a2a"></div>
<div class="t" style="left:2229px;top:178px;font-size:12.2px;color:#d8d8d8;">14</div>
<div class="a" style="left:2233px;top:201px;width:251px;height:252px;background:#2a2a2a;"></div>
<div class="a" style="left:2235px;top:203px;width:247px;height:248px;background:#ffffff;"></div>
<div class="a" style="left:2180px;top:463px;width:357px;height:11px;background:#111;"></div>
<div class="a" style="left:2320px;top:460px;width:18px;height:16px;background:linear-gradient(180deg,#bbb,#777);border-radius:4px;border:1px solid #333"></div>
<svg class="a" style="left:2180px;top:476px;" width="360" height="4" viewBox="0 0 360 4"><rect x="4.0" y="0" width="1" height="2" fill="#bbb"/><rect x="14.2" y="0" width="1" height="3" fill="#bbb"/><rect x="24.4" y="0" width="1" height="3" fill="#bbb"/><rect x="34.6" y="0" width="1" height="3" fill="#bbb"/><rect x="44.8" y="0" width="1" height="3" fill="#bbb"/><rect x="55.0" y="0" width="1" height="3" fill="#bbb"/><rect x="65.2" y="0" width="1" height="3" fill="#bbb"/><rect x="75.4" y="0" width="1" height="3" fill="#bbb"/><rect x="85.6" y="0" width="1" height="3" fill="#bbb"/><rect x="95.8" y="0" width="1" height="3" fill="#bbb"/><rect x="106.0" y="0" width="1" height="3" fill="#bbb"/><rect x="116.2" y="0" width="1" height="3" fill="#bbb"/><rect x="126.4" y="0" width="1" height="3" fill="#bbb"/><rect x="136.6" y="0" width="1" height="3" fill="#bbb"/><rect x="146.8" y="0" width="1" height="3" fill="#bbb"/><rect x="157.0" y="0" width="1" height="3" fill="#bbb"/><rect x="167.2" y="0" width="1" height="3" fill="#bbb"/><rect x="177.4" y="0" width="1" height="3" fill="#bbb"/><rect x="187.6" y="0" width="1" height="3" fill="#bbb"/><rect x="197.8" y="0" width="1" height="3" fill="#bbb"/><rect x="208.0" y="0" width="1" height="3" fill="#bbb"/><rect x="218.2" y="0" width="1" height="3" fill="#bbb"/><rect x="228.4" y="0" width="1" height="3" fill="#bbb"/><rect x="238.6" y="0" width="1" height="3" fill="#bbb"/><rect x="248.8" y="0" width="1" height="3" fill="#bbb"/><rect x="259.0" y="0" width="1" height="3" fill="#bbb"/><rect x="269.2" y="0" width="1" height="3" fill="#bbb"/><rect x="279.4" y="0" width="1" height="3" fill="#bbb"/><rect x="289.6" y="0" width="1" height="3" fill="#bbb"/><rect x="299.8" y="0" width="1" height="3" fill="#bbb"/><rect x="310.0" y="0" width="1" height="3" fill="#bbb"/><rect x="320.2" y="0" width="1" height="3" fill="#bbb"/><rect x="330.4" y="0" width="1" height="3" fill="#bbb"/><rect x="340.6" y="0" width="1" height="3" fill="#bbb"/><rect x="350.8" y="0" width="1" height="3" fill="#bbb"/><rect x="361.0" y="0" width="1" height="2" fill="#bbb"/></svg>
<svg class="a" style="left:2547px;top:308px;" width="11" height="20" viewBox="0 0 11 20"><path d="M0.5 0 V20" stroke="#aaa" stroke-width="0.8"/><path d="M8 5 L3 10 L8 15" fill="none" stroke="#ccc" stroke-width="1.5"/></svg>
<svg class="a" style="left:2349px;top:486px;" width="18" height="11" viewBox="0 0 18 11"><path d="M0.5 0 V10 M17 0 V10" stroke="#aaa" stroke-width="0.8"/><path d="M4 8 L9 3 L14 8" fill="none" stroke="#ccc" stroke-width="1.6"/></svg>
<svg class="a" style="left:2346px;top:499px;" width="35" height="11" viewBox="0 0 35 11"><path d="M1 0 V10 M17 0 V10 M33 0 V10" stroke="#aaa" stroke-width="0.8"/><path d="M4 7 L9 2.5 L14 7" fill="none" stroke="#ccc" stroke-width="1.8"/><path d="M20 3 L25 7.5 L30 3" fill="none" stroke="#ccc" stroke-width="1.8"/></svg>
<div class="a" style="left:2168px;top:511px;width:391px;height:545px;background:#8a8a8a;"></div>
<div class="a" style="left:2169px;top:512px;width:389px;height:543px;background:#474747;"></div>
<div class="a" style="left:2394px;top:515px;width:126px;height:24px;background:linear-gradient(180deg,#555,#3a3a3a);border-radius:3px 3px 0 0"></div>
<div class="t" style="left:2418px;top:520px;font-size:11.7px;color:#e8e8e8;">Tool Properties</div>
<svg class="a" style="left:2525px;top:519px;" width="30" height="14" viewBox="0 0 30 14"><path d="M6 1 V12 M0.5 6.5 H11.5" stroke="#ccc" stroke-width="2.4"/><path d="M15.5 0 V13" stroke="#999" stroke-width="0.8"/><path d="M19 2 L27 10 M27 2 L19 10" stroke="#ccc" stroke-width="2.6"/></svg>
<svg class="a" style="left:2155px;top:550px;" width="12" height="36" viewBox="0 0 12 36"><path d="M0.5 0 V16 M0.5 20 V36" stroke="#aaa" stroke-width="0.8"/><path d="M9 4 L4 8 L9 12" fill="none" stroke="#ccc" stroke-width="1.5"/><path d="M4 22 L9 26 L4 30" fill="none" stroke="#ccc" stroke-width="1.5"/></svg>
<div class="a" style="left:2179px;top:553px;width:369px;height:99px;border:1px solid #5e5e5e;background:transparent;border-radius:4px"></div>
<div class="a" style="left:2182px;top:545px;width:100px;height:14px;background:#474747;"></div>
<div class="t" style="left:2184px;top:547px;font-size:9.7px;color:#c8c8c8;">Select Tool Options</div>
<div class="a" style="left:2179px;top:665px;width:369px;height:190px;border:1px solid #5e5e5e;background:transparent;border-radius:4px"></div>
<div class="a" style="left:2182px;top:657px;width:60px;height:14px;background:#474747;"></div>
<div class="t" style="left:2184px;top:659px;font-size:9.7px;color:#c8c8c8;">Operations</div>
<svg class="a" style="left:2198px;top:572px;" width="24" height="22" viewBox="0 0 24 22"><ellipse cx="13" cy="9" rx="9" ry="6.5" fill="none" stroke="#e89030" stroke-width="1.6"/><path d="M6 13 Q3 16 5 18 Q7 19 8 15" fill="none" stroke="#e89030" stroke-width="1.6"/></svg>
<svg class="a" style="left:2220px;top:596px;" width="4" height="4" viewBox="0 0 4 4"><path d="M4 0 L4 4 L0 4 Z" fill="#ccc"/></svg>
<div class="a" style="left:2228px;top:568px;width:32px;height:32px;background:#161616;"></div>
<svg class="a" style="left:2234px;top:574px;" width="22" height="22" viewBox="0 0 22 22"><rect x="3" y="3" width="13" height="13" fill="none" stroke="#e85020" stroke-width="1" stroke-dasharray="2 2"/><rect x="2" y="2" width="2.5" height="2.5" fill="#ccc"/><rect x="15" y="2" width="2.5" height="2.5" fill="#ccc"/><rect x="2" y="15" width="2.5" height="2.5" fill="#ccc"/><path d="M10 9 L20 14 L15 15 L18 20 L16 21 L13 16 L10 19 Z" fill="#222" stroke="#eee" stroke-width="1"/></svg>
<div class="a" style="left:2262px;top:568px;width:32px;height:32px;background:#161616;"></div>
<svg class="a" style="left:2268px;top:574px;" width="20" height="20" viewBox="0 0 20 20"><path d="M2 18 V9 A8 8 0 0 1 18 9 V18 H13 V9 A3 3 0 0 0 7 9 V18 Z" fill="#ccc"/><rect x="2" y="15" width="5" height="3" fill="#fff"/><rect x="13" y="15" width="5" height="3" fill="#fff"/></svg>
<svg class="a" style="left:2289px;top:596px;" width="4" height="4" viewBox="0 0 4 4"><path d="M4 0 L4 4 L0 4 Z" fill="#ccc"/></svg>
<svg class="a" style="left:2303px;top:574px;" width="18" height="18" viewBox="0 0 18 18"><path d="M1 16 Q5 14 8 9 Q11 4 16 2" fill="none" stroke="#2a90e0" stroke-width="1.8"/><path d="M11 7 L16 2 M13 2 H16 V5 M2 11 V16 H7 M2 16 L7 11" fill="none" stroke="#ccc" stroke-width="1"/></svg>
<div class="a" style="left:2331px;top:568px;width:1px;height:30px;background:#2a2a2a;"></div>
<svg class="a" style="left:2343px;top:574px;" width="16" height="18" viewBox="0 0 16 18"><path d="M1 1 L15 8 L9 10 L13 16 L11 17 L7 11 L2 15 Z" fill="#c81818"/></svg>
<svg class="a" style="left:2200px;top:607px;" width="22" height="22" viewBox="0 0 22 22"><ellipse cx="11" cy="6" rx="6" ry="4.5" fill="none" stroke="#e89030" stroke-width="1.3"/><path d="M2 13 L20 11 L17 15 L4 17 Z M2 17 L20 15 L17 19 L4 21 Z" fill="#bfeaf6" stroke="#3ac" stroke-width="0.6"/></svg>
<div class="a" style="left:2229px;top:605px;width:1px;height:32px;background:#2a2a2a;"></div>
<svg class="a" style="left:2238px;top:607px;" width="26" height="22" viewBox="0 0 26 22"><rect x="2" y="3" width="5" height="9" fill="#c8f0f8" stroke="#38a8c8" stroke-width="0.8"/><rect x="6" y="6" width="5" height="9" fill="#c8f0f8" stroke="#38a8c8" stroke-width="0.8"/><rect x="10" y="9" width="5" height="9" fill="#c8f0f8" stroke="#38a8c8" stroke-width="0.8"/><path d="M20 2 V16 M17 13 L20 16 L23 13" fill="none" stroke="#ccc" stroke-width="1.2"/></svg>
<svg class="a" style="left:2259px;top:629px;" width="4" height="4" viewBox="0 0 4 4"><path d="M4 0 L4 4 L0 4 Z" fill="#ccc"/></svg>
<svg class="a" style="left:2273px;top:605px;" width="26" height="24" viewBox="0 0 26 24"><path d="M2 3 H22 M19 0.5 L22 3 L19 5.5" fill="none" stroke="#ccc" stroke-width="1.2"/><rect x="2" y="8" width="5" height="9" fill="#c8f0f8" stroke="#38a8c8" stroke-width="0.8"/><rect x="6" y="11" width="5" height="9" fill="#c8f0f8" stroke="#38a8c8" stroke-width="0.8"/><rect x="10" y="14" width="5" height="9" fill="#c8f0f8" stroke="#38a8c8" stroke-width="0.8"/></svg>
<svg class="a" style="left:2293px;top:629px;" width="4" height="4" viewBox="0 0 4 4"><path d="M4 0 L4 4 L0 4 Z" fill="#ccc"/></svg>
<svg class="a" style="left:2306px;top:609px;" width="22" height="18" viewBox="0 0 22 18"><path d="M2 7 L14 3 L21 6 L9 10 Z" fill="#bfeaf6" stroke="#3ac" stroke-width="0.6"/><path d="M2 11 L14 7 L21 10 L9 14 Z" fill="#bfeaf6" stroke="#3ac" stroke-width="0.6"/><path d="M11 3 V17 M9 15 L11 17 L13 15 M9 5 L11 3 L13 5" fill="none" stroke="#ccc" stroke-width="1"/></svg>
<svg class="a" style="left:2200px;top:684px;" width="20" height="20" viewBox="0 0 20 20"><path d="M7 3 L1 10 L7 17 Z M13 3 L19 10 L13 17 Z" fill="#2a90e0"/><path d="M10 1 V19" stroke="#ccc" stroke-width="1.2"/></svg>
<svg class="a" style="left:2234px;top:684px;" width="20" height="20" viewBox="0 0 20 20"><path d="M4 6 L10 1 L16 6 Z M4 14 L10 19 L16 14 Z" fill="#2a90e0"/><path d="M1 8.5 H19 M1 11.5 H19" stroke="#ccc" stroke-width="1"/></svg>
<svg class="a" style="left:2266px;top:683px;" width="23" height="22" viewBox="0 0 23 22"><path d="M4 8 A8 8 0 1 0 11 3" fill="none" stroke="#bbb" stroke-width="1"/><path d="M2 8 L4 11 L6 8" fill="none" stroke="#bbb" stroke-width="1"/><text x="6" y="15" font-size="9" fill="#bbb" font-family="Liberation Sans" font-style="italic">90</text></svg>
<svg class="a" style="left:2300px;top:683px;" width="23" height="22" viewBox="0 0 23 22"><path d="M19 8 A8 8 0 1 1 12 3" fill="none" stroke="#bbb" stroke-width="1"/><path d="M17 8 L19 11 L21 8" fill="none" stroke="#bbb" stroke-width="1"/><text x="5" y="15" font-size="9" fill="#bbb" font-family="Liberation Sans" font-style="italic">90</text></svg>
<div class="a" style="left:2331px;top:680px;width:1px;height:32px;background:#2a2a2a;"></div>
<svg class="a" style="left:2340px;top:684px;" width="20" height="20" viewBox="0 0 20 20"><circle cx="8" cy="12" r="6" fill="none" stroke="#333" stroke-width="1.4"/><path d="M3 18 L18 2 M15 2 H19 M17 0 V4" stroke="#333" stroke-width="1.4"/></svg>
<svg class="a" style="left:2375px;top:685px;" width="20" height="19" viewBox="0 0 20 19"><path d="M2 1.5 H18 M2 4.5 H18 M2 7.5 H18" stroke="#2a90e0" stroke-width="1.1"/><path d="M10 7 V12 M7.5 10 L10 12.5 L12.5 10" fill="none" stroke="#ddd" stroke-width="1.1"/><rect x="1" y="15" width="18" height="2" fill="#2a90e0"/></svg>
<svg class="a" style="left:2200px;top:722px;" width="20" height="18" viewBox="0 0 20 18"><path d="M1 3 Q10 7 19 3" fill="none" stroke="#ccc" stroke-width="1"/><path d="M1 11 Q10 18 19 11" fill="none" stroke="#2a90e0" stroke-width="1.4"/><path d="M5 6 V10 M10 6 V10 M15 6 V10" fill="none" stroke="#ccc" stroke-width="0.9"/></svg>
<svg class="a" style="left:2234px;top:720px;" width="20" height="22" viewBox="0 0 20 22"><path d="M10 1 L13 4 H7 Z" fill="#ccc"/><rect x="2" y="5" width="16" height="16" fill="#c8f0f8" stroke="#38a8c8" stroke-width="0.8"/><path d="M2 10 H18 M2 15 H18 M8 5 V21" stroke="#38a8c8" stroke-width="0.8"/><path d="M12 8 L10 12 L13 12" fill="none" stroke="#333" stroke-width="0.8"/></svg>
<svg class="a" style="left:2268px;top:722px;" width="22" height="20" viewBox="0 0 22 20"><path d="M2 2 H18 L20 12 L10 18 L2 12 Z" fill="#2e2e2e"/></svg>
<div class="a" style="left:2297px;top:718px;width:1px;height:32px;background:#2a2a2a;"></div>
<svg class="a" style="left:2305px;top:722px;" width="22" height="20" viewBox="0 0 22 20"><path d="M4 14 Q2 8 8 4 M14 18 Q20 12 16 4 M8 8 L13 10" fill="none" stroke="#333" stroke-width="1.6"/></svg>
<svg class="a" style="left:2340px;top:722px;" width="20" height="20" viewBox="0 0 20 20"><path d="M3 3 L17 17 M17 5 L5 17" stroke="#333" stroke-width="1.6"/><rect x="6" y="7" width="8" height="6" fill="#333" transform="rotate(40 10 10)"/></svg>
<svg class="a" style="left:2373px;top:722px;" width="22" height="20" viewBox="0 0 22 20"><path d="M2 8 Q6 4 10 8 Q14 12 18 8 M2 14 Q6 10 10 14 Q14 18 18 14 M10 2 V12" fill="none" stroke="#333" stroke-width="1.4"/></svg>
<div class="a" style="left:2194px;top:753px;width:340px;height:1px;background:#1e1e1e;"></div>
<svg class="a" style="left:2203px;top:776px;" width="18" height="18" viewBox="0 0 18 18"><path d="M2 1 L16 15 M16 1 L2 15" stroke="#aaa" stroke-width="1.1"/><path d="M1 17 H17 M1 15 V17 M17 15 V17" stroke="#aaa" stroke-width="1"/></svg>
<div class="a" style="left:2223px;top:773px;width:30px;height:24px;background:#2a2a2a;"></div><div class="t" style="left:2229px;top:780px;font-size:10.5px;color:#6a6a6a;">0</div>
<svg class="a" style="left:2255px;top:778px;" width="8" height="14" viewBox="0 0 8 14"><path d="M1 5 L4 1 L7 5 Z M1 9 L4 13 L7 9 Z" fill="#555"/></svg>
<svg class="a" style="left:2273px;top:776px;" width="18" height="18" viewBox="0 0 18 18"><rect x="3" y="1" width="12" height="10" fill="none" stroke="#aaa" stroke-width="1.2"/><path d="M1 15 H17 M1 13 V17 M17 13 V17" stroke="#aaa" stroke-width="1"/></svg>
<div class="a" style="left:2290px;top:773px;width:30px;height:24px;background:#2a2a2a;"></div><div class="t" style="left:2296px;top:780px;font-size:10.5px;color:#6a6a6a;">100</div>
<svg class="a" style="left:2322px;top:778px;" width="8" height="14" viewBox="0 0 8 14"><path d="M1 5 L4 1 L7 5 Z M1 9 L4 13 L7 9 Z" fill="#555"/></svg>
<div class="t" style="left:2330px;top:780px;font-size:9.5px;color:#555;">%</div>
<svg class="a" style="left:2343px;top:781px;" width="8" height="14" viewBox="0 0 8 14"><path d="M0 1 H6 V13 H4" fill="none" stroke="#aaa" stroke-width="1.2"/></svg>
<svg class="a" style="left:2342px;top:793px;" width="12" height="13" viewBox="0 0 12 13"><path d="M3 6 V3.5 Q3 1 6 1 Q9 1 9 3.5" fill="none" stroke="#ccc" stroke-width="1.1"/><rect x="1" y="6" width="10" height="6" fill="#ccc"/></svg>
<svg class="a" style="left:2343px;top:806px;" width="8" height="14" viewBox="0 0 8 14"><path d="M4 1 H6 V13 H0" fill="none" stroke="#aaa" stroke-width="1.2"/></svg>
<svg class="a" style="left:2362px;top:776px;" width="19" height="18" viewBox="0 0 19 18"><path d="M15 4 A7 7 0 1 0 16 11" fill="none" stroke="#777" stroke-width="1.1"/><path d="M12 3 L16 4 L16 0" fill="none" stroke="#777" stroke-width="1"/><circle cx="9" cy="9" r="2" fill="#777"/></svg>
<div class="a" style="left:2379px;top:773px;width:30px;height:24px;background:#2a2a2a;"></div><div class="t" style="left:2385px;top:780px;font-size:10.5px;color:#6a6a6a;">0</div>
<svg class="a" style="left:2411px;top:778px;" width="8" height="14" viewBox="0 0 8 14"><path d="M1 5 L4 1 L7 5 Z M1 9 L4 13 L7 9 Z" fill="#555"/></svg>
<svg class="a" style="left:2205px;top:808px;" width="18" height="18" viewBox="0 0 18 18"><text x="0" y="15" font-size="15" fill="#aaa" font-family="Liberation Sans">Y</text><path d="M14 2 V16 M12 4 L14 1.5 L16 4 M12 14 L14 16.5 L16 14" fill="none" stroke="#aaa" stroke-width="1.1"/></svg>
<div class="a" style="left:2223px;top:805px;width:30px;height:24px;background:#2a2a2a;"></div><div class="t" style="left:2229px;top:812px;font-size:10.5px;color:#6a6a6a;">0</div>
<svg class="a" style="left:2255px;top:810px;" width="8" height="14" viewBox="0 0 8 14"><path d="M1 5 L4 1 L7 5 Z M1 9 L4 13 L7 9 Z" fill="#555"/></svg>
<svg class="a" style="left:2273px;top:808px;" width="18" height="18" viewBox="0 0 18 18"><rect x="1" y="2" width="10" height="13" fill="none" stroke="#aaa" stroke-width="1.2"/><path d="M15 2 V16 M13 4 L15 1.5 L17 4 M13 14 L15 16.5 L17 14" fill="none" stroke="#aaa" stroke-width="1.1"/></svg>
<div class="a" style="left:2290px;top:805px;width:30px;height:24px;background:#2a2a2a;"></div><div class="t" style="left:2296px;top:812px;font-size:10.5px;color:#6a6a6a;">100</div>
<svg class="a" style="left:2322px;top:810px;" width="8" height="14" viewBox="0 0 8 14"><path d="M1 5 L4 1 L7 5 Z M1 9 L4 13 L7 9 Z" fill="#555"/></svg>
<div class="t" style="left:2330px;top:812px;font-size:9.5px;color:#555;">%</div>

<div class="a" style="left:0px;top:1056px;width:34px;height:336px;background:#474747;"></div>
<div class="a" style="left:34px;top:1068px;width:2526px;height:324px;background:#8a8a8a;"></div>
<div class="a" style="left:35px;top:1069px;width:2524px;height:323px;background:#474747;"></div>
<svg class="a" style="left:41px;top:1074px;" width="13" height="13" viewBox="0 0 13 13"><rect x="0" y="0" width="10" height="2" fill="#ccc"/><rect x="0" y="4" width="10" height="2" fill="#ccc"/><rect x="0" y="8" width="10" height="2" fill="#ccc"/><path d="M12 9 L12 12 L9 12 Z" fill="#ccc"/></svg>
<div class="a" style="left:59px;top:1071px;width:94px;height:18px;background:#141414;"></div>
<div class="t" style="left:62px;top:1075px;font-size:11.8px;color:#e8e8e8;">Default (Display)</div>
<div class="a" style="left:153px;top:1071px;width:15px;height:18px;background:#1a1a1a;border:1px solid #3c3c3c"></div>
<svg class="a" style="left:156px;top:1077px;" width="10" height="6" viewBox="0 0 10 6"><path d="M0 0 L10 0 L5 5 Z" fill="#bbb"/></svg>
<div class="a" style="left:2372px;top:1070px;width:63px;height:25px;background:linear-gradient(180deg,#555,#3a3a3a);border:1px solid #555;border-bottom:none;border-radius:3px 3px 0 0"></div>
<div class="t" style="left:2382px;top:1077px;font-size:12.1px;color:#e8e8e8;">Timeline</div>
<div class="a" style="left:2435px;top:1072px;width:86px;height:23px;background:#4a4a4a;border:1px solid #555;border-bottom:none"></div>
<div class="t" style="left:2444px;top:1079px;font-size:11.8px;color:#c8c8c8;">Node Library</div>
<svg class="a" style="left:2524px;top:1076px;" width="30" height="14" viewBox="0 0 30 14"><path d="M6 1 V12 M0.5 6.5 H11.5" stroke="#ccc" stroke-width="2.4"/><path d="M15.5 0 V13" stroke="#999" stroke-width="0.8"/><path d="M19 2 L27 10 M27 2 L19 10" stroke="#ccc" stroke-width="2.6"/></svg>
<div class="a" style="left:36px;top:1097px;width:8px;height:32px;background:#1c1c1c;"><div class="a" style="left:1px;top:1px;right:1px;bottom:1px;background:linear-gradient(90deg,#6a6a6a,#3c3c3c)"></div></div>
<svg class="a" style="left:53px;top:1106px;" width="15" height="14" viewBox="0 0 15 14"><path d="M1 1 L14 7 L1 13 Z" fill="#2a90e0"/></svg>
<svg class="a" style="left:85px;top:1104px;" width="19" height="19" viewBox="0 0 19 19"><path d="M1 1 L14 7 L1 13 Z" fill="#2a90e0"/><path d="M10 8 L11.5 11.5 L15 11.5 L12.3 13.8 L13.3 17.5 L10 15.3 L6.7 17.5 L7.7 13.8 L5 11.5 L8.5 11.5 Z" fill="#f0c030"/></svg>
<svg class="a" style="left:104px;top:1124px;" width="4" height="4" viewBox="0 0 4 4"><path d="M4 0 L4 4 L0 4 Z" fill="#ccc"/></svg>
<svg class="a" style="left:117px;top:1104px;" width="19" height="18" viewBox="0 0 19 18"><path d="M4 6 A7 7 0 1 1 4 13" fill="none" stroke="#2a90e0" stroke-width="1.8"/><path d="M1 13 L4 9 L8 14 Z" fill="#2a90e0"/></svg>
<svg class="a" style="left:149px;top:1104px;" width="20" height="18" viewBox="0 0 20 18"><path d="M1 6 H5 L11 1 V17 L5 12 H1 Z" fill="#2a90e0"/><path d="M14 5 Q17 9 14 13 M16 3 Q21 9 16 15" fill="none" stroke="#2a90e0" stroke-width="1.2"/></svg>
<svg class="a" style="left:182px;top:1104px;" width="20" height="18" viewBox="0 0 20 18"><path d="M1 6 H5 L11 1 V17 L5 12 H1 Z" fill="#2a90e0"/><text x="12" y="14" font-size="11" fill="#ccc" font-family="Liberation Sans">S</text></svg>
<div class="a" style="left:215px;top:1101px;width:83px;height:8px;background:#111;"></div>
<div class="a" style="left:248px;top:1101px;width:17px;height:8px;background:linear-gradient(180deg,#ccc,#888);"></div>
<svg class="a" style="left:214px;top:1113px;" width="85" height="12" viewBox="0 0 85 12"><rect x="0.5" y="0.5" width="84" height="11" fill="#222" stroke="#777"/><rect x="2.0" y="2" width="1.4" height="8" fill="#aaa"/><rect x="5.1" y="2" width="1.4" height="8" fill="#aaa"/><rect x="8.2" y="2" width="1.4" height="8" fill="#aaa"/><rect x="11.3" y="2" width="1.4" height="8" fill="#aaa"/><rect x="14.4" y="2" width="1.4" height="8" fill="#aaa"/><rect x="17.5" y="2" width="1.4" height="8" fill="#aaa"/><rect x="20.6" y="2" width="1.4" height="8" fill="#aaa"/><rect x="23.7" y="2" width="1.4" height="8" fill="#aaa"/><rect x="26.8" y="2" width="1.4" height="8" fill="#aaa"/><rect x="29.9" y="2" width="1.4" height="8" fill="#aaa"/><rect x="33.0" y="2" width="1.4" height="8" fill="#aaa"/><rect x="36.1" y="2" width="1.4" height="8" fill="#aaa"/><rect x="39.2" y="2" width="1.4" height="8" fill="#aaa"/><rect x="42.3" y="2" width="1.4" height="8" fill="#aaa"/><rect x="45.4" y="2" width="1.4" height="8" fill="#aaa"/><rect x="48.5" y="2" width="1.4" height="8" fill="#aaa"/><rect x="51.6" y="2" width="1.4" height="8" fill="#aaa"/><rect x="54.7" y="2" width="1.4" height="8" fill="#aaa"/><rect x="57.8" y="2" width="1.4" height="8" fill="#aaa"/><rect x="60.9" y="2" width="1.4" height="8" fill="#aaa"/><rect x="64.0" y="2" width="1.4" height="8" fill="#aaa"/><rect x="67.1" y="2" width="1.4" height="8" fill="#aaa"/><rect x="70.2" y="2" width="1.4" height="8" fill="#aaa"/><rect x="73.3" y="2" width="1.4" height="8" fill="#aaa"/><rect x="76.4" y="2" width="1.4" height="8" fill="#aaa"/><rect x="79.5" y="2" width="1.4" height="8" fill="#aaa"/></svg>
<div class="t" style="left:304px;top:1109px;font-size:11.4px;color:#c8c8c8;">Frame</div>
<div class="a" style="left:344px;top:1102px;width:47px;height:24px;background:#141414;border:1px solid #2e2e2e"></div><div class="t" style="left:349px;top:1108px;font-size:11px;color:#e0e0e0;">1850</div>
<div class="a" style="left:392px;top:1102px;width:15px;height:12px;background:#1a1a1a;border:1px solid #333"></div><div class="a" style="left:392px;top:1114px;width:15px;height:12px;background:#1a1a1a;border:1px solid #333"></div><svg class="a" style="left:395px;top:1105px;" width="9" height="20" viewBox="0 0 9 20"><path d="M0.5 4.5 L4.5 0.5 L8.5 4.5 Z M0.5 15 L4.5 19 L8.5 15 Z" fill="#ccc"/></svg>
<div class="t" style="left:415px;top:1109px;font-size:11.4px;color:#c8c8c8;">Start</div>
<div class="a" style="left:449px;top:1102px;width:47px;height:24px;background:#141414;border:1px solid #2e2e2e"></div><div class="t" style="left:454px;top:1108px;font-size:11px;color:#e0e0e0;">1</div>
<div class="a" style="left:497px;top:1102px;width:15px;height:12px;background:#1a1a1a;border:1px solid #333"></div><div class="a" style="left:497px;top:1114px;width:15px;height:12px;background:#1a1a1a;border:1px solid #333"></div><svg class="a" style="left:500px;top:1105px;" width="9" height="20" viewBox="0 0 9 20"><path d="M0.5 4.5 L4.5 0.5 L8.5 4.5 Z M0.5 15 L4.5 19 L8.5 15 Z" fill="#ccc"/></svg>
<div class="t" style="left:520px;top:1109px;font-size:11.4px;color:#c8c8c8;">Stop</div>
<div class="a" style="left:554px;top:1102px;width:47px;height:24px;background:#141414;border:1px solid #2e2e2e"></div><div class="t" style="left:559px;top:1108px;font-size:11px;color:#e0e0e0;">2521</div>
<div class="a" style="left:602px;top:1102px;width:15px;height:12px;background:#1a1a1a;border:1px solid #333"></div><div class="a" style="left:602px;top:1114px;width:15px;height:12px;background:#1a1a1a;border:1px solid #333"></div><svg class="a" style="left:605px;top:1105px;" width="9" height="20" viewBox="0 0 9 20"><path d="M0.5 4.5 L4.5 0.5 L8.5 4.5 Z M0.5 15 L4.5 19 L8.5 15 Z" fill="#ccc"/></svg>
<div class="t" style="left:623px;top:1109px;font-size:11.4px;color:#c8c8c8;">FPS</div>
<div class="a" style="left:650px;top:1102px;width:52px;height:24px;background:#141414;border:1px solid #2e2e2e"></div><div class="t" style="left:655px;top:1108px;font-size:11px;color:#e0e0e0;">24</div>
<div class="a" style="left:702px;top:1102px;width:15px;height:24px;background:#1a1a1a;border:1px solid #333"></div>
<svg class="a" style="left:705px;top:1111px;" width="9" height="6" viewBox="0 0 9 6"><path d="M0 0 L9 0 L4.5 5 Z" fill="#bbb"/></svg>
<div class="a" style="left:749px;top:1097px;width:8px;height:32px;background:#1c1c1c;"><div class="a" style="left:1px;top:1px;right:1px;bottom:1px;background:linear-gradient(90deg,#6a6a6a,#3c3c3c)"></div></div>
<div class="a" style="left:758px;top:1101px;width:29px;height:24px;background:#141414;"></div>
<svg class="a" style="left:760px;top:1104px;" width="24" height="18" viewBox="0 0 24 18"><path d="M2 16 L21 2" stroke="#aaa" stroke-width="1"/></svg>
<div class="a" style="left:787px;top:1101px;width:14px;height:24px;background:#1a1a1a;border:1px solid #333"></div>
<svg class="a" style="left:789px;top:1111px;" width="10" height="6" viewBox="0 0 10 6"><path d="M0 0 L10 0 L5 5 Z" fill="#bbb"/></svg>
<svg class="a" style="left:809px;top:1103px;" width="22" height="22" viewBox="0 0 22 22"><path d="M3 18 Q3 11 9 11 H11 Q17 11 17 3" fill="none" stroke="#bbb" stroke-width="1.1"/><path d="M1 11 H19" stroke="#e86020" stroke-width="1.2"/><circle cx="1.5" cy="11" r="1.5" fill="#e86020"/><circle cx="19" cy="11" r="1.5" fill="#e86020"/><rect x="7.5" y="9" width="4" height="4" fill="#fff"/></svg>
<svg class="a" style="left:842px;top:1104px;" width="22" height="22" viewBox="0 0 22 22"><path d="M2 16 Q2 5 12 5" fill="none" stroke="#bbb" stroke-width="1.1"/><path d="M1 5 H13" stroke="#e86020" stroke-width="1.2"/><circle cx="1.5" cy="5" r="1.5" fill="#e86020"/><rect x="14" y="3" width="4" height="4" fill="#fff"/></svg>
<svg class="a" style="left:875px;top:1104px;" width="22" height="22" viewBox="0 0 22 22"><path d="M18 16 Q18 5 8 5" fill="none" stroke="#bbb" stroke-width="1.1"/><path d="M7 5 H19" stroke="#e86020" stroke-width="1.2"/><circle cx="18.5" cy="5" r="1.5" fill="#e86020"/><rect x="2" y="3" width="4" height="4" fill="#fff"/></svg>
<svg class="a" style="left:908px;top:1103px;" width="22" height="22" viewBox="0 0 22 22"><path d="M3 18 Q3 11 9 11 H11 Q17 11 17 3" fill="none" stroke="#bbb" stroke-width="1.1"/><path d="M1 11 H19" stroke="#e86020" stroke-width="1.2"/><rect x="7.5" y="9" width="4" height="4" fill="#fff"/><rect x="11" y="13" width="9" height="6" fill="#30c0e0"/><rect x="12.5" y="15" width="6" height="3" fill="#fff"/></svg>
<svg class="a" style="left:941px;top:1104px;" width="22" height="22" viewBox="0 0 22 22"><path d="M4 2 H12 M9 2 Q6 9 3 9 H10 M9 10 H17 M14 10 Q11 17 8 17 H15" fill="none" stroke="#e86020" stroke-width="1.2"/><path d="M6 3 L5 9 M14 10 L11 17" stroke="#bbb" stroke-width="1"/></svg>
<svg class="a" style="left:974px;top:1103px;" width="22" height="22" viewBox="0 0 22 22"><rect x="4" y="5" width="15" height="13" fill="#c8eef8"/><path d="M6 7 L17 16 M17 7 L6 16" stroke="#222" stroke-width="1.3"/><circle cx="5" cy="5" r="4.5" fill="#20c0e0"/><path d="M5 2 V8 M2 5 H8" stroke="#111" stroke-width="1.2"/></svg>
<svg class="a" style="left:1007px;top:1102px;" width="22" height="22" viewBox="0 0 22 22"><path d="M8 3 L17 3 M14 1 L17 3 L15 6" fill="none" stroke="#bbb" stroke-width="1"/><rect x="4" y="7" width="12" height="12" fill="#c8eef8"/><rect x="7" y="10" width="12" height="10" fill="#a8d8e8"/><path d="M6 15 H14" stroke="#333" stroke-dasharray="1 1"/><circle cx="5" cy="5" r="4.5" fill="#20c0e0"/><path d="M5 2 V8 M2 5 H8" stroke="#111" stroke-width="1.2"/></svg>
<svg class="a" style="left:1040px;top:1103px;" width="22" height="22" viewBox="0 0 22 22"><path d="M3 17 H16 V3" fill="none" stroke="#222" stroke-width="1.4"/><rect x="0.5" y="14.5" width="4" height="4" fill="#e02020"/><rect x="14" y="1" width="4" height="4" fill="#e02020"/></svg>
<svg class="a" style="left:1074px;top:1103px;" width="22" height="22" viewBox="0 0 22 22"><circle cx="9" cy="4" r="3.8" fill="#20c0e0"/><path d="M9 1.5 V6.5 M6.5 4 H11.5" stroke="#111" stroke-width="1.1"/><text x="1" y="18" font-size="10" fill="#ccc" font-family="Liberation Sans">KF</text></svg>
<svg class="a" style="left:1107px;top:1103px;" width="22" height="22" viewBox="0 0 22 22"><circle cx="9" cy="4" r="3.8" fill="#20c0e0"/><path d="M6.5 4 H11.5" stroke="#111" stroke-width="1.1"/><text x="1" y="18" font-size="10" fill="#ccc" font-family="Liberation Sans">KF</text></svg>
<svg class="a" style="left:1140px;top:1104px;" width="22" height="22" viewBox="0 0 22 22"><path d="M2 16 Q4 16 8 9 Q12 2 17 3" fill="none" stroke="#2a90e0" stroke-width="1.3"/><circle cx="2" cy="16" r="2" fill="#7cc8f0"/><circle cx="17" cy="3" r="2" fill="#7cc8f0"/></svg>
<svg class="a" style="left:1172px;top:1106px;" width="22" height="22" viewBox="0 0 22 22"><path d="M2 7 H17" stroke="#2a90e0" stroke-width="1.3"/><circle cx="2.5" cy="7" r="2.2" fill="#7cc8f0"/><circle cx="17" cy="7" r="2.2" fill="#7cc8f0"/></svg>
<svg class="a" style="left:1206px;top:1102px;" width="22" height="22" viewBox="0 0 22 22"><path d="M13 2 L7 5.5 L13 9 Z" fill="#333"/><text x="2" y="20" font-size="10" fill="#333" font-family="Liberation Sans">KF</text></svg>
<svg class="a" style="left:1238px;top:1102px;" width="22" height="22" viewBox="0 0 22 22"><path d="M7 2 L13 5.5 L7 9 Z" fill="#333"/><text x="2" y="20" font-size="10" fill="#333" font-family="Liberation Sans">KF</text></svg>
<svg class="a" style="left:1273px;top:1102px;" width="22" height="22" viewBox="0 0 22 22"><text x="0" y="10" font-size="10" fill="#ccc" font-family="Liberation Sans">K+</text><rect x="1" y="13" width="5" height="3.5" fill="#ccc"/><rect x="8" y="13" width="5" height="3.5" fill="#ccc"/></svg>
<svg class="a" style="left:1306px;top:1102px;" width="22" height="22" viewBox="0 0 22 22"><text x="0" y="10" font-size="10" fill="#ccc" font-family="Liberation Sans">K−</text><rect x="1" y="13" width="11" height="3.5" fill="#ccc"/></svg>
<svg class="a" style="left:1336px;top:1103px;" width="22" height="22" viewBox="0 0 22 22"><circle cx="11" cy="9" r="7" fill="none" stroke="#777" stroke-width="1.3"/><path d="M15 15 L18 18" stroke="#777" stroke-width="1.6"/><rect x="1" y="6" width="20" height="6" fill="#30c8e0"/></svg>
<svg class="a" style="left:1369px;top:1104px;" width="22" height="22" viewBox="0 0 22 22"><rect x="1" y="3" width="19" height="11" fill="none" stroke="#ccc" stroke-width="1"/><path d="M7 3 V14 M14 3 V14" stroke="#ccc" stroke-width="1"/><rect x="3" y="8" width="1.5" height="1.5" fill="#30c8e0"/><rect x="16.5" y="8" width="1.5" height="1.5" fill="#30c8e0"/></svg>
<svg class="a" style="left:1401px;top:1102px;" width="22" height="22" viewBox="0 0 22 22"><path d="M7 3 H17 M14 1 L17 3 L14 5" fill="none" stroke="#ddd" stroke-width="1"/><rect x="1" y="8" width="6" height="12" fill="#c8eef8" stroke="#38a8c8" stroke-width="0.8"/><rect x="7" y="9" width="8" height="10" fill="#666"/><rect x="15" y="8" width="6" height="12" fill="#c8eef8" stroke="#38a8c8" stroke-width="0.8"/></svg>
<div class="a" style="left:1430px;top:1097px;width:33px;height:32px;background:#141414;"></div>
<svg class="a" style="left:1438px;top:1105px;" width="17" height="17" viewBox="0 0 17 17"><rect x="0.5" y="0.5" width="16" height="16" fill="#333" stroke="#444"/><rect x="3" y="3" width="11" height="11" fill="#fff"/><rect x="6" y="7" width="5" height="4" fill="#111"/></svg>
<svg class="a" style="left:1470px;top:1104px;" width="17" height="17" viewBox="0 0 17 17"><rect x="0.5" y="0.5" width="16" height="16" fill="#333" stroke="#222"/><rect x="6" y="6" width="5" height="5" fill="#ccc"/></svg>
<svg class="a" style="left:1503px;top:1104px;" width="17" height="17" viewBox="0 0 17 17"><rect x="0.5" y="0.5" width="16" height="16" fill="#222" stroke="#111"/><rect x="3" y="2" width="11" height="13" fill="#fff"/></svg>
<svg class="a" style="left:1533px;top:1104px;" width="24" height="16" viewBox="0 0 24 16"><text x="1" y="8" font-size="8.5" fill="#ccc" font-family="Liberation Sans">ABC+</text><text x="0" y="15.5" font-size="8.5" fill="#ccc" font-family="Liberation Sans">+ABC</text></svg>
<div class="a" style="left:35px;top:1130px;width:2522px;height:2px;background:#8a8a8a;"></div>
<div class="a" style="left:37px;top:1132px;width:466px;height:23px;background:#474747;"></div>
<svg class="a" style="left:40px;top:1136px;" width="18" height="14" viewBox="0 0 18 14"><ellipse cx="5" cy="7" rx="3" ry="5" fill="#eee"/><ellipse cx="12" cy="7" rx="3" ry="5" fill="#eee"/><ellipse cx="5.5" cy="8" rx="1.3" ry="3" fill="#111"/><ellipse cx="12.5" cy="8" rx="1.3" ry="3" fill="#111"/></svg>
<svg class="a" style="left:56px;top:1136px;" width="12" height="12" viewBox="0 0 12 12"><circle cx="6" cy="6" r="5.2" fill="#eee"/><circle cx="6" cy="6" r="2.3" fill="#111"/></svg>
<svg class="a" style="left:69px;top:1135px;" width="14" height="14" viewBox="0 0 14 14"><ellipse cx="7" cy="3" rx="6" ry="2.2" fill="#aaa"/><ellipse cx="7" cy="7" rx="6" ry="2.2" fill="#aaa"/><ellipse cx="7" cy="11" rx="6" ry="2.2" fill="#aaa"/></svg>
<svg class="a" style="left:84px;top:1135px;" width="12" height="14" viewBox="0 0 12 14"><path d="M3 6 V4 Q3 1 6 1 Q9 1 9 4 V6" fill="none" stroke="#aaa" stroke-width="1.3"/><rect x="1" y="6" width="10" height="7" fill="#aaa"/></svg>
<div class="a" style="left:97px;top:1136px;width:13px;height:13px;background:#fff;border:1.5px solid #111"></div>
<svg class="a" style="left:112px;top:1136px;" width="12" height="13" viewBox="0 0 12 13"><rect x="0.5" y="0.5" width="11" height="12" fill="none" stroke="#555"/><circle cx="6" cy="5" r="2.5" fill="#555"/><path d="M2 12 Q6 6 10 12" fill="#555"/></svg>
<div class="a" style="left:143px;top:1132px;width:1px;height:23px;background:#3a3a3a;"></div>
<div class="t" style="left:145px;top:1137px;font-size:9px;color:#c8c8c8;">Layers</div>
<svg class="a" style="left:257px;top:1138px;" width="16" height="14" viewBox="0 0 16 14"><path d="M5 1 V11 M0 6 H10" stroke="#ccc" stroke-width="1.6"/><path d="M14 9 L14 13 L10 13 Z" fill="#ccc"/></svg>
<svg class="a" style="left:275px;top:1142px;" width="12" height="3" viewBox="0 0 12 3"><path d="M0 1.5 H11" stroke="#ccc" stroke-width="1.6"/></svg>
<svg class="a" style="left:291px;top:1138px;" width="14" height="12" viewBox="0 0 14 12"><rect x="1" y="1" width="3" height="2" fill="#e83"/><rect x="5" y="0" width="3" height="2" fill="#38e"/><rect x="3" y="4" width="3" height="2" fill="#ee3"/><path d="M10 4 V11 M6.5 7.5 H13.5" stroke="#ccc" stroke-width="1.5"/></svg>
<svg class="a" style="left:307px;top:1137px;" width="14" height="14" viewBox="0 0 14 14"><path d="M3 12 Q1 6 5 3" fill="none" stroke="#e86020" stroke-width="1.3"/><circle cx="7" cy="3" r="2" fill="#eee"/><path d="M10 6 V13 M6.5 9.5 H13.5" stroke="#ccc" stroke-width="1.5"/></svg>
<div class="a" style="left:323px;top:1132px;width:1px;height:23px;background:#3a3a3a;"></div>
<div class="t" style="left:330px;top:1137px;font-size:9px;color:#c8c8c8;">Parameters</div>
<div class="a" style="left:37px;top:1155px;width:466px;height:1px;background:#7a7a7a;"></div>
<div class="a" style="left:37px;top:1154px;width:450px;height:1px;background:#2e2e2e;"></div>
<div class="a" style="left:37px;top:1155px;width:450px;height:1px;background:#7a7a7a;"></div>
<div class="a" style="left:37px;top:1173px;width:450px;height:1px;background:#2e2e2e;"></div>
<div class="a" style="left:37px;top:1174px;width:450px;height:1px;background:#7a7a7a;"></div>
<div class="a" style="left:37px;top:1192px;width:450px;height:1px;background:#2e2e2e;"></div>
<div class="a" style="left:37px;top:1193px;width:450px;height:1px;background:#7a7a7a;"></div>
<div class="a" style="left:37px;top:1211px;width:450px;height:1px;background:#2e2e2e;"></div>
<div class="a" style="left:37px;top:1212px;width:450px;height:1px;background:#7a7a7a;"></div>
<div class="a" style="left:37px;top:1230px;width:450px;height:1px;background:#2e2e2e;"></div>
<div class="a" style="left:37px;top:1231px;width:450px;height:1px;background:#7a7a7a;"></div>
<div class="a" style="left:37px;top:1249px;width:450px;height:1px;background:#2e2e2e;"></div>
<div class="a" style="left:37px;top:1250px;width:450px;height:1px;background:#7a7a7a;"></div>
<div class="a" style="left:37px;top:1268px;width:450px;height:1px;background:#2e2e2e;"></div>
<div class="a" style="left:37px;top:1269px;width:450px;height:1px;background:#7a7a7a;"></div>
<div class="a" style="left:37px;top:1344px;width:450px;height:1px;background:#2e2e2e;"></div>
<div class="a" style="left:37px;top:1345px;width:450px;height:1px;background:#7a7a7a;"></div>
<div class="a" style="left:37px;top:1363px;width:450px;height:1px;background:#2e2e2e;"></div>
<div class="a" style="left:37px;top:1364px;width:450px;height:1px;background:#7a7a7a;"></div>
<div class="a" style="left:37px;top:1372px;width:466px;height:1px;background:#111;"></div>
<svg class="a" style="left:40px;top:1159px;" width="14" height="13" viewBox="0 0 14 13"><path d="M1 4 H4 L8 1 V12 L4 9 H1 Z" fill="#ccc"/><path d="M10 3 V10" stroke="#ccc" stroke-width="1.2"/></svg>
<svg class="a" style="left:56px;top:1160px;" width="12" height="12" viewBox="0 0 12 12"><circle cx="6" cy="6" r="4.5" fill="#555"/></svg>
<svg class="a" style="left:84px;top:1159px;" width="12" height="14" viewBox="0 0 12 14"><path d="M3 7 V4.5 Q3 1.5 6 1.5 Q9 1.5 9 3.5" fill="none" stroke="#555" stroke-width="1.4"/><rect x="1" y="7" width="10" height="6" fill="#555"/></svg>
<svg class="a" style="left:170px;top:1158px;" width="12" height="16" viewBox="0 0 12 16"><path d="M4 12 V1 Q8 2 11 6 Q9 4 6 4 V12 Q6 15 3 15 Q0 15 1 12 Q2 10 4 12 Z" fill="#2a80d8"/></svg>
<div class="t" style="left:185px;top:1161px;font-size:9.2px;color:#d8d8d8;">Pencil_Test_Audio_</div>
<svg class="a" style="left:329px;top:1158px;" width="12" height="15" viewBox="0 0 12 15"><circle cx="5" cy="5" r="4" fill="#9ee8f8"/><path d="M7 8 L10 13" stroke="#e8a030" stroke-width="2.2"/></svg>
<div class="t" style="left:347px;top:1160px;font-size:9.5px;color:#30c8e8;">100%</div>
<svg class="a" style="left:41px;top:1179px;" width="14" height="12" viewBox="0 0 14 12"><ellipse cx="4.2" cy="6" rx="3.2" ry="4.8" fill="#e8e8e8"/><ellipse cx="10" cy="6" rx="3.2" ry="4.8" fill="#e8e8e8"/><ellipse cx="3.6" cy="6.5" rx="1.3" ry="2.8" fill="#111"/><ellipse cx="9.4" cy="6.5" rx="1.3" ry="2.8" fill="#111"/></svg>
<svg class="a" style="left:84px;top:1178px;" width="12" height="14" viewBox="0 0 12 14"><path d="M3 7 V4.5 Q3 1.5 6 1.5 Q9 1.5 9 3.5" fill="none" stroke="#555" stroke-width="1.4"/><rect x="1" y="7" width="10" height="6" fill="#555"/></svg>
<div class="a" style="left:97px;top:1178px;width:13px;height:13px;background:#ddd;border:1.5px solid #111"></div>
<svg class="a" style="left:151px;top:1178px;" width="14" height="8" viewBox="0 0 14 8"><path d="M0 0 L14 0 L7 7 Z" fill="#bbb"/></svg>
<svg class="a" style="left:170px;top:1177px;" width="14" height="15" viewBox="0 0 14 15"><path d="M1 13 Q3 13 5 9 Q8 3 12 2" fill="none" stroke="#2a80d8" stroke-width="1.4"/><circle cx="12" cy="2.5" r="1.3" fill="#7cf"/></svg>
<div class="t" style="left:185px;top:1180px;font-size:9.2px;color:#d8d8d8;">RedThread-P</div>
<svg class="a" style="left:309px;top:1178px;" width="13" height="13" viewBox="0 0 13 13"><path d="M6.5 0.5 V12.5 M0.5 6.5 H12.5" stroke="#ddd" stroke-width="1.6"/></svg>
<div class="a" style="left:158px;top:1188px;width:1px;height:10px;background:#777;"></div>
<svg class="a" style="left:41px;top:1198px;" width="14" height="12" viewBox="0 0 14 12"><ellipse cx="4.2" cy="6" rx="3.2" ry="4.8" fill="#e8e8e8"/><ellipse cx="10" cy="6" rx="3.2" ry="4.8" fill="#e8e8e8"/><ellipse cx="3.6" cy="6.5" rx="1.3" ry="2.8" fill="#111"/><ellipse cx="9.4" cy="6.5" rx="1.3" ry="2.8" fill="#111"/></svg>
<svg class="a" style="left:56px;top:1198px;" width="12" height="12" viewBox="0 0 12 12"><circle cx="6" cy="6" r="4.5" fill="#555"/></svg>
<svg class="a" style="left:69px;top:1198px;" width="14" height="12" viewBox="0 0 14 12"><ellipse cx="7" cy="2.5" rx="5" ry="2" fill="#555"/><ellipse cx="7" cy="6" rx="5" ry="2" fill="#555"/><ellipse cx="7" cy="9.5" rx="5" ry="2" fill="#555"/></svg>
<svg class="a" style="left:84px;top:1197px;" width="12" height="14" viewBox="0 0 12 14"><path d="M3 7 V4.5 Q3 1.5 6 1.5 Q9 1.5 9 3.5" fill="none" stroke="#555" stroke-width="1.4"/><rect x="1" y="7" width="10" height="6" fill="#555"/></svg>
<div class="a" style="left:97px;top:1197px;width:13px;height:13px;background:#888;border:1.5px solid #111"></div>
<svg class="a" style="left:111px;top:1197px;" width="12" height="13" viewBox="0 0 12 13"><rect x="0.5" y="0.5" width="11" height="12" fill="none" stroke="#555"/><circle cx="6" cy="5" r="2.5" fill="#555"/><path d="M2 12 Q6 6 10 12" fill="#555"/></svg>
<div class="a" style="left:158px;top:1194px;width:1px;height:9px;background:#777;"></div>
<div class="a" style="left:158px;top:1203px;width:6px;height:1px;background:#777;"></div>
<svg class="a" style="left:189px;top:1197px;" width="14" height="13" viewBox="0 0 14 13"><path d="M1 11 L5 3 L9 11 Z" fill="#d83030"/><rect x="6" y="1" width="7" height="7" fill="#3090e0"/><circle cx="8" cy="9" r="3.6" fill="#f0c020"/></svg>
<div class="t" style="left:205px;top:1199px;font-size:9.2px;color:#d8d8d8;">RedThread</div>
<svg class="a" style="left:309px;top:1197px;" width="13" height="13" viewBox="0 0 13 13"><path d="M6.5 0.5 V12.5 M0.5 6.5 H12.5" stroke="#ddd" stroke-width="1.6"/></svg>
<svg class="a" style="left:41px;top:1217px;" width="14" height="12" viewBox="0 0 14 12"><ellipse cx="4.2" cy="6" rx="3.2" ry="4.8" fill="#e8e8e8"/><ellipse cx="10" cy="6" rx="3.2" ry="4.8" fill="#e8e8e8"/><ellipse cx="3.6" cy="6.5" rx="1.3" ry="2.8" fill="#111"/><ellipse cx="9.4" cy="6.5" rx="1.3" ry="2.8" fill="#111"/></svg>
<svg class="a" style="left:56px;top:1217px;" width="12" height="12" viewBox="0 0 12 12"><circle cx="6" cy="6" r="4.5" fill="#555"/></svg>
<svg class="a" style="left:69px;top:1217px;" width="14" height="12" viewBox="0 0 14 12"><ellipse cx="7" cy="2.5" rx="5" ry="2" fill="#555"/><ellipse cx="7" cy="6" rx="5" ry="2" fill="#555"/><ellipse cx="7" cy="9.5" rx="5" ry="2" fill="#555"/></svg>
<svg class="a" style="left:84px;top:1216px;" width="12" height="14" viewBox="0 0 12 14"><path d="M3 7 V4.5 Q3 1.5 6 1.5 Q9 1.5 9 3.5" fill="none" stroke="#555" stroke-width="1.4"/><rect x="1" y="7" width="10" height="6" fill="#555"/></svg>
<div class="a" style="left:97px;top:1216px;width:13px;height:13px;background:#fff;border:1.5px solid #111"></div>
<svg class="a" style="left:111px;top:1216px;" width="12" height="13" viewBox="0 0 12 13"><rect x="0.5" y="0.5" width="11" height="12" fill="none" stroke="#555"/><circle cx="6" cy="5" r="2.5" fill="#555"/><path d="M2 12 Q6 6 10 12" fill="#555"/></svg>
<svg class="a" style="left:124px;top:1216px;" width="14" height="14" viewBox="0 0 14 14"><path d="M1 13 L2 9 L10 1 L13 4 L5 12 Z" fill="#f0b020"/><path d="M1 13 L2 9 L5 12 Z" fill="#f4d8a0"/></svg>
<div class="a" style="left:143px;top:1213px;width:180px;height:18px;background:#3a8896;"></div>
<svg class="a" style="left:169px;top:1216px;" width="14" height="13" viewBox="0 0 14 13"><path d="M1 11 L5 3 L9 11 Z" fill="#d83030"/><rect x="6" y="1" width="7" height="7" fill="#3090e0"/><circle cx="8" cy="9" r="3.6" fill="#f0c020"/></svg>
<div class="t" style="left:185px;top:1218px;font-size:9.2px;color:#111;">Ending</div>
<svg class="a" style="left:309px;top:1216px;" width="13" height="13" viewBox="0 0 13 13"><path d="M6.5 0.5 V12.5 M0.5 6.5 H12.5" stroke="#fff" stroke-width="1.6"/></svg>
<div class="t" style="left:331px;top:1216px;font-size:9.5px;color:#30c8e8;">14</div>
<svg class="a" style="left:41px;top:1236px;" width="14" height="12" viewBox="0 0 14 12"><ellipse cx="4.2" cy="6" rx="3.2" ry="4.8" fill="#e8e8e8"/><ellipse cx="10" cy="6" rx="3.2" ry="4.8" fill="#e8e8e8"/><ellipse cx="3.6" cy="6.5" rx="1.3" ry="2.8" fill="#111"/><ellipse cx="9.4" cy="6.5" rx="1.3" ry="2.8" fill="#111"/></svg>
<svg class="a" style="left:84px;top:1235px;" width="12" height="14" viewBox="0 0 12 14"><path d="M3 7 V4.5 Q3 1.5 6 1.5 Q9 1.5 9 3.5" fill="none" stroke="#555" stroke-width="1.4"/><rect x="1" y="7" width="10" height="6" fill="#555"/></svg>
<div class="a" style="left:97px;top:1235px;width:13px;height:13px;background:#ddd;border:1.5px solid #111"></div>
<svg class="a" style="left:151px;top:1235px;" width="14" height="8" viewBox="0 0 14 8"><path d="M0 0 L14 0 L7 7 Z" fill="#bbb"/></svg>
<svg class="a" style="left:170px;top:1234px;" width="14" height="15" viewBox="0 0 14 15"><path d="M1 13 Q3 13 5 9 Q8 3 12 2" fill="none" stroke="#2a80d8" stroke-width="1.4"/><circle cx="12" cy="2.5" r="1.3" fill="#7cf"/></svg>
<div class="t" style="left:185px;top:1237px;font-size:9.2px;color:#d8d8d8;">Young_Lilia-P</div>
<svg class="a" style="left:309px;top:1235px;" width="13" height="13" viewBox="0 0 13 13"><path d="M6.5 0.5 V12.5 M0.5 6.5 H12.5" stroke="#ddd" stroke-width="1.6"/></svg>
<div class="a" style="left:158px;top:1245px;width:1px;height:70px;background:#777;"></div>
<svg class="a" style="left:41px;top:1255px;" width="14" height="12" viewBox="0 0 14 12"><ellipse cx="4.2" cy="6" rx="3.2" ry="4.8" fill="#e8e8e8"/><ellipse cx="10" cy="6" rx="3.2" ry="4.8" fill="#e8e8e8"/><ellipse cx="3.6" cy="6.5" rx="1.3" ry="2.8" fill="#111"/><ellipse cx="9.4" cy="6.5" rx="1.3" ry="2.8" fill="#111"/></svg>
<svg class="a" style="left:56px;top:1255px;" width="12" height="12" viewBox="0 0 12 12"><circle cx="6" cy="6" r="4.5" fill="#555"/></svg>
<svg class="a" style="left:69px;top:1255px;" width="14" height="12" viewBox="0 0 14 12"><ellipse cx="7" cy="2.5" rx="5" ry="2" fill="#555"/><ellipse cx="7" cy="6" rx="5" ry="2" fill="#555"/><ellipse cx="7" cy="9.5" rx="5" ry="2" fill="#555"/></svg>
<svg class="a" style="left:84px;top:1254px;" width="12" height="14" viewBox="0 0 12 14"><path d="M3 7 V4.5 Q3 1.5 6 1.5 Q9 1.5 9 3.5" fill="none" stroke="#555" stroke-width="1.4"/><rect x="1" y="7" width="10" height="6" fill="#555"/></svg>
<div class="a" style="left:97px;top:1254px;width:13px;height:13px;background:#888;border:1.5px solid #111"></div>
<svg class="a" style="left:111px;top:1254px;" width="12" height="13" viewBox="0 0 12 13"><rect x="0.5" y="0.5" width="11" height="12" fill="none" stroke="#555"/><circle cx="6" cy="5" r="2.5" fill="#555"/><path d="M2 12 Q6 6 10 12" fill="#555"/></svg>
<div class="a" style="left:158px;top:1260px;width:6px;height:1px;background:#777;"></div>
<svg class="a" style="left:189px;top:1254px;" width="14" height="13" viewBox="0 0 14 13"><path d="M1 11 L5 3 L9 11 Z" fill="#d83030"/><rect x="6" y="1" width="7" height="7" fill="#3090e0"/><circle cx="8" cy="9" r="3.6" fill="#f0c020"/></svg>
<div class="t" style="left:205px;top:1256px;font-size:9.2px;color:#d8d8d8;">Polish_Y_Lilia</div>
<svg class="a" style="left:309px;top:1254px;" width="13" height="13" viewBox="0 0 13 13"><path d="M6.5 0.5 V12.5 M0.5 6.5 H12.5" stroke="#ddd" stroke-width="1.6"/></svg>
<div class="t" style="left:331px;top:1254px;font-size:9.5px;color:#30c8e8;">85</div>
<svg class="a" style="left:41px;top:1274px;" width="14" height="12" viewBox="0 0 14 12"><ellipse cx="4.2" cy="6" rx="3.2" ry="4.8" fill="#e8e8e8"/><ellipse cx="10" cy="6" rx="3.2" ry="4.8" fill="#e8e8e8"/><ellipse cx="3.6" cy="6.5" rx="1.3" ry="2.8" fill="#111"/><ellipse cx="9.4" cy="6.5" rx="1.3" ry="2.8" fill="#111"/></svg>
<svg class="a" style="left:56px;top:1274px;" width="12" height="12" viewBox="0 0 12 12"><circle cx="6" cy="6" r="4.5" fill="#555"/></svg>
<svg class="a" style="left:69px;top:1274px;" width="14" height="12" viewBox="0 0 14 12"><ellipse cx="7" cy="2.5" rx="5" ry="2" fill="#555"/><ellipse cx="7" cy="6" rx="5" ry="2" fill="#555"/><ellipse cx="7" cy="9.5" rx="5" ry="2" fill="#555"/></svg>
<svg class="a" style="left:84px;top:1273px;" width="12" height="14" viewBox="0 0 12 14"><path d="M3 7 V4.5 Q3 1.5 6 1.5 Q9 1.5 9 3.5" fill="none" stroke="#555" stroke-width="1.4"/><rect x="1" y="7" width="10" height="6" fill="#555"/></svg>
<div class="a" style="left:97px;top:1273px;width:13px;height:13px;background:#888;border:1.5px solid #111"></div>
<svg class="a" style="left:111px;top:1273px;" width="12" height="13" viewBox="0 0 12 13"><rect x="0.5" y="0.5" width="11" height="12" fill="none" stroke="#bbb"/><circle cx="6" cy="5" r="2.5" fill="#bbb"/><path d="M2 12 Q6 6 10 12" fill="#bbb"/></svg>
<div class="a" style="left:158px;top:1283px;width:6px;height:1px;background:#777;"></div>
<svg class="a" style="left:189px;top:1273px;" width="14" height="13" viewBox="0 0 14 13"><path d="M1 11 L5 3 L9 11 Z" fill="#d83030"/><rect x="6" y="1" width="7" height="7" fill="#3090e0"/><circle cx="8" cy="9" r="3.6" fill="#f0c020"/></svg>
<div class="t" style="left:205px;top:1275px;font-size:9.2px;color:#d8d8d8;">Young_Lilia</div>
<div class="t" style="left:40px;top:1294px;font-size:9.5px;color:#c8c8c8;">Opacity:</div>
<div class="t" style="left:87px;top:1294px;font-size:9.5px;color:#30c8e8;">97</div>
<div class="a" style="left:205px;top:1287px;width:54px;height:54px;background:#fff;"></div>
<svg class="a" style="left:309px;top:1330px;" width="13" height="13" viewBox="0 0 13 13"><path d="M6.5 0.5 V12.5 M0.5 6.5 H12.5" stroke="#ddd" stroke-width="1.6"/></svg>
<div class="t" style="left:331px;top:1300px;font-size:9.5px;color:#30c8e8;">84</div>
<svg class="a" style="left:41px;top:1350px;" width="14" height="12" viewBox="0 0 14 12"><ellipse cx="4.2" cy="6" rx="3.2" ry="4.8" fill="#e8e8e8"/><ellipse cx="10" cy="6" rx="3.2" ry="4.8" fill="#e8e8e8"/><ellipse cx="3.6" cy="6.5" rx="1.3" ry="2.8" fill="#111"/><ellipse cx="9.4" cy="6.5" rx="1.3" ry="2.8" fill="#111"/></svg>
<svg class="a" style="left:56px;top:1350px;" width="12" height="12" viewBox="0 0 12 12"><circle cx="6" cy="6" r="4.5" fill="#555"/></svg>
<svg class="a" style="left:69px;top:1350px;" width="14" height="12" viewBox="0 0 14 12"><ellipse cx="7" cy="2.5" rx="5" ry="2" fill="#555"/><ellipse cx="7" cy="6" rx="5" ry="2" fill="#555"/><ellipse cx="7" cy="9.5" rx="5" ry="2" fill="#555"/></svg>
<svg class="a" style="left:84px;top:1349px;" width="12" height="14" viewBox="0 0 12 14"><path d="M3 7 V4.5 Q3 1.5 6 1.5 Q9 1.5 9 3.5" fill="none" stroke="#555" stroke-width="1.4"/><rect x="1" y="7" width="10" height="6" fill="#555"/></svg>
<div class="a" style="left:97px;top:1349px;width:13px;height:13px;background:#888;border:1.5px solid #111"></div>
<svg class="a" style="left:111px;top:1349px;" width="12" height="13" viewBox="0 0 12 13"><rect x="0.5" y="0.5" width="11" height="12" fill="none" stroke="#555"/><circle cx="6" cy="5" r="2.5" fill="#555"/><path d="M2 12 Q6 6 10 12" fill="#555"/></svg>
<svg class="a" style="left:169px;top:1349px;" width="14" height="13" viewBox="0 0 14 13"><path d="M1 11 L5 3 L9 11 Z" fill="#d83030"/><rect x="6" y="1" width="7" height="7" fill="#3090e0"/><circle cx="8" cy="9" r="3.6" fill="#f0c020"/></svg>
<div class="t" style="left:185px;top:1351px;font-size:9.2px;color:#d8d8d8;">Paper_Y_Lilia</div>
<svg class="a" style="left:309px;top:1349px;" width="13" height="13" viewBox="0 0 13 13"><path d="M6.5 0.5 V12.5 M0.5 6.5 H12.5" stroke="#ddd" stroke-width="1.6"/></svg>
<svg class="a" style="left:40px;top:1368px;" width="16" height="4" viewBox="0 0 16 4"><ellipse cx="5" cy="5" rx="3.6" ry="5" fill="#f4f4f4"/><ellipse cx="11.5" cy="5" rx="3.6" ry="5" fill="#f4f4f4"/></svg>
<div class="a" style="left:97px;top:1368px;width:13px;height:4px;background:#eee;border:1.5px solid #111;border-bottom:none"></div>
<svg class="a" style="left:151px;top:1366px;" width="14" height="6" viewBox="0 0 14 6"><path d="M0 0 L14 0 L7 6 Z" fill="#bbb"/></svg>
<div class="a" style="left:170px;top:1368px;width:10px;height:4px;background:#2a80d8;"></div>
<div class="a" style="left:313px;top:1367px;width:1px;height:5px;background:#ddd;"></div>
<div class="a" style="left:323px;top:1156px;width:1px;height:216px;background:#3a3a3a;"></div>
<div class="a" style="left:487px;top:1156px;width:16px;height:216px;background:#0e0e0e;"></div>
<div class="a" style="left:487px;top:1156px;width:16px;height:17px;background:linear-gradient(180deg,#666,#3a3a3a);border:1px solid #222"></div>
<svg class="a" style="left:491px;top:1162px;" width="8" height="5" viewBox="0 0 8 5"><path d="M0 4 L4 0 L8 4 Z" fill="#aaa"/></svg>
<div class="a" style="left:488px;top:1173px;width:14px;height:28px;background:linear-gradient(90deg,#777,#555);border-radius:2px"></div>
<div class="a" style="left:487px;top:1355px;width:16px;height:17px;background:linear-gradient(180deg,#555,#333);border:1px solid #222"></div>
<svg class="a" style="left:491px;top:1361px;" width="8" height="5" viewBox="0 0 8 5"><path d="M0 0 L4 4 L8 0 Z" fill="#aaa"/></svg>
<div class="a" style="left:37px;top:1373px;width:466px;height:15px;background:#474747;"></div>
<svg class="a" style="left:44px;top:1374px;" width="14" height="13" viewBox="0 0 14 13"><rect x="0.5" y="0.5" width="12" height="10" fill="#ccc" stroke="#aaa"/><ellipse cx="6.5" cy="5.5" rx="4" ry="3" fill="#888"/><path d="M11 13 L14 10 L14 13 Z" fill="#111"/></svg>
<svg class="a" style="left:63px;top:1373px;" width="14" height="14" viewBox="0 0 14 14"><path d="M1 11 H5 V8 H8 V11 H5 M7 9 L12 1" fill="none" stroke="#30c8e8" stroke-width="2"/></svg>
<svg class="a" style="left:82px;top:1376px;" width="14" height="8" viewBox="0 0 14 8"><path d="M1 4 H10 M8 1 L12 4 L8 7" fill="none" stroke="#777" stroke-width="1.6"/></svg>
<div class="a" style="left:143px;top:1372px;width:16px;height:16px;background:linear-gradient(180deg,#555,#333);"></div>
<svg class="a" style="left:148px;top:1376px;" width="6" height="8" viewBox="0 0 6 8"><path d="M5 0 L0 4 L5 8 Z" fill="#aaa"/></svg>
<div class="a" style="left:159px;top:1373px;width:112px;height:15px;background:linear-gradient(180deg,#666,#3a3a3a);border-radius:2px"></div>
<div class="a" style="left:271px;top:1373px;width:34px;height:15px;background:#111;"></div>
<div class="a" style="left:305px;top:1372px;width:17px;height:16px;background:linear-gradient(180deg,#555,#333);"></div>
<svg class="a" style="left:311px;top:1376px;" width="6" height="8" viewBox="0 0 6 8"><path d="M0 0 L5 4 L0 8 Z" fill="#aaa"/></svg>
<div class="a" style="left:503px;top:1132px;width:12px;height:256px;background:#3a3a3a;"></div>
<div class="a" style="left:504px;top:1132px;width:2px;height:256px;background:#111;"></div>
<div class="a" style="left:35px;top:1388px;width:2522px;height:1px;background:#8898a8;"></div>
<div class="a" style="left:34px;top:1390px;width:2526px;height:1px;background:#8a8a8a;"></div>
<div class="a" style="left:36px;top:1132px;width:1px;height:256px;background:#8898a8;"></div>
<div class="a" style="left:2556px;top:1132px;width:1px;height:256px;background:#8898a8;"></div>

<div class="a" style="left:515px;top:1132px;width:2041px;height:24px;background:#474747;"></div>
<div class="a" style="left:515px;top:1132px;width:2033px;height:1px;background:#111;"></div>
<div class="a" style="left:1157px;top:1133px;width:230px;height:13px;background:#4a5868;border-top:1px solid #6a88a8;border-bottom:1px solid #6a88a8"></div>
<div class="a" style="left:0;top:0;width:2548px;height:1147px;overflow:hidden"><div class="t" style="left:514.5px;top:1136px;width:24px;text-align:center;font-size:10.6px;color:#d4d4d4;transform:scaleX(0.84)">1510</div><div class="t" style="left:534.5px;top:1136px;width:24px;text-align:center;font-size:10.6px;color:#d4d4d4;transform:scaleX(0.84)">1520</div><div class="t" style="left:554.5px;top:1136px;width:24px;text-align:center;font-size:10.6px;color:#d4d4d4;transform:scaleX(0.84)">1530</div><div class="t" style="left:574.5px;top:1136px;width:24px;text-align:center;font-size:10.6px;color:#d4d4d4;transform:scaleX(0.84)">1540</div><div class="t" style="left:594.5px;top:1136px;width:24px;text-align:center;font-size:10.6px;color:#d4d4d4;transform:scaleX(0.84)">1550</div><div class="t" style="left:614.5px;top:1136px;width:24px;text-align:center;font-size:10.6px;color:#d4d4d4;transform:scaleX(0.84)">1560</div><div class="t" style="left:634.5px;top:1136px;width:24px;text-align:center;font-size:10.6px;color:#d4d4d4;transform:scaleX(0.84)">1570</div><div class="t" style="left:654.5px;top:1136px;width:24px;text-align:center;font-size:10.6px;color:#d4d4d4;transform:scaleX(0.84)">1580</div><div class="t" style="left:674.5px;top:1136px;width:24px;text-align:center;font-size:10.6px;color:#d4d4d4;transform:scaleX(0.84)">1590</div><div class="t" style="left:694.5px;top:1136px;width:24px;text-align:center;font-size:10.6px;color:#d4d4d4;transform:scaleX(0.84)">1600</div><div class="t" style="left:714.5px;top:1136px;width:24px;text-align:center;font-size:10.6px;color:#d4d4d4;transform:scaleX(0.84)">1610</div><div class="t" style="left:734.5px;top:1136px;width:24px;text-align:center;font-size:10.6px;color:#d4d4d4;transform:scaleX(0.84)">1620</div><div class="t" style="left:754.5px;top:1136px;width:24px;text-align:center;font-size:10.6px;color:#d4d4d4;transform:scaleX(0.84)">1630</div><div class="t" style="left:774.5px;top:1136px;width:24px;text-align:center;font-size:10.6px;color:#d4d4d4;transform:scaleX(0.84)">1640</div><div class="t" style="left:794.5px;top:1136px;width:24px;text-align:center;font-size:10.6px;color:#d4d4d4;transform:scaleX(0.84)">1650</div><div class="t" style="left:814.5px;top:1136px;width:24px;text-align:center;font-size:10.6px;color:#d4d4d4;transform:scaleX(0.84)">1660</div><div class="t" style="left:834.5px;top:1136px;width:24px;text-align:center;font-size:10.6px;color:#d4d4d4;transform:scaleX(0.84)">1670</div><div class="t" style="left:854.5px;top:1136px;width:24px;text-align:center;font-size:10.6px;color:#d4d4d4;transform:scaleX(0.84)">1680</div><div class="t" style="left:874.5px;top:1136px;width:24px;text-align:center;font-size:10.6px;color:#d4d4d4;transform:scaleX(0.84)">1690</div><div class="t" style="left:894.5px;top:1136px;width:24px;text-align:center;font-size:10.6px;color:#d4d4d4;transform:scaleX(0.84)">1700</div><div class="t" style="left:914.5px;top:1136px;width:24px;text-align:center;font-size:10.6px;color:#d4d4d4;transform:scaleX(0.84)">1710</div><div class="t" style="left:934.5px;top:1136px;width:24px;text-align:center;font-size:10.6px;color:#d4d4d4;transform:scaleX(0.84)">1720</div><div class="t" style="left:954.5px;top:1136px;width:24px;text-align:center;font-size:10.6px;color:#d4d4d4;transform:scaleX(0.84)">1730</div><div class="t" style="left:974.5px;top:1136px;width:24px;text-align:center;font-size:10.6px;color:#d4d4d4;transform:scaleX(0.84)">1740</div><div class="t" style="left:994.5px;top:1136px;width:24px;text-align:center;font-size:10.6px;color:#d4d4d4;transform:scaleX(0.84)">1750</div><div class="t" style="left:1014.5px;top:1136px;width:24px;text-align:center;font-size:10.6px;color:#d4d4d4;transform:scaleX(0.84)">1760</div><div class="t" style="left:1034.5px;top:1136px;width:24px;text-align:center;font-size:10.6px;color:#d4d4d4;transform:scaleX(0.84)">1770</div><div class="t" style="left:1054.5px;top:1136px;width:24px;text-align:center;font-size:10.6px;color:#d4d4d4;transform:scaleX(0.84)">1780</div><div class="t" style="left:1074.5px;top:1136px;width:24px;text-align:center;font-size:10.6px;color:#d4d4d4;transform:scaleX(0.84)">1790</div><div class="t" style="left:1094.5px;top:1136px;width:24px;text-align:center;font-size:10.6px;color:#d4d4d4;transform:scaleX(0.84)">1800</div><div class="t" style="left:1114.5px;top:1136px;width:24px;text-align:center;font-size:10.6px;color:#d4d4d4;transform:scaleX(0.84)">1810</div><div class="t" style="left:1134.5px;top:1136px;width:24px;text-align:center;font-size:10.6px;color:#d4d4d4;transform:scaleX(0.84)">1820</div><div class="t" style="left:1154.5px;top:1136px;width:24px;text-align:center;font-size:10.6px;color:#d4d4d4;transform:scaleX(0.84)">1830</div><div class="t" style="left:1174.5px;top:1136px;width:24px;text-align:center;font-size:10.6px;color:#d4d4d4;transform:scaleX(0.84)">1840</div><div class="t" style="left:1194.5px;top:1136px;width:24px;text-align:center;font-size:10.6px;color:#d4d4d4;transform:scaleX(0.84)">1850</div><div class="t" style="left:1214.5px;top:1136px;width:24px;text-align:center;font-size:10.6px;color:#d4d4d4;transform:scaleX(0.84)">1860</div><div class="t" style="left:1234.5px;top:1136px;width:24px;text-align:center;font-size:10.6px;color:#d4d4d4;transform:scaleX(0.84)">1870</div><div class="t" style="left:1254.5px;top:1136px;width:24px;text-align:center;font-size:10.6px;color:#d4d4d4;transform:scaleX(0.84)">1880</div><div class="t" style="left:1274.5px;top:1136px;width:24px;text-align:center;font-size:10.6px;color:#d4d4d4;transform:scaleX(0.84)">1890</div><div class="t" style="left:1294.5px;top:1136px;width:24px;text-align:center;font-size:10.6px;color:#d4d4d4;transform:scaleX(0.84)">1900</div><div class="t" style="left:1314.5px;top:1136px;width:24px;text-align:center;font-size:10.6px;color:#d4d4d4;transform:scaleX(0.84)">1910</div><div class="t" style="left:1334.5px;top:1136px;width:24px;text-align:center;font-size:10.6px;color:#d4d4d4;transform:scaleX(0.84)">1920</div><div class="t" style="left:1354.5px;top:1136px;width:24px;text-align:center;font-size:10.6px;color:#d4d4d4;transform:scaleX(0.84)">1930</div><div class="t" style="left:1374.5px;top:1136px;width:24px;text-align:center;font-size:10.6px;color:#d4d4d4;transform:scaleX(0.84)">1940</div><div class="t" style="left:1394.5px;top:1136px;width:24px;text-align:center;font-size:10.6px;color:#d4d4d4;transform:scaleX(0.84)">1950</div><div class="t" style="left:1414.5px;top:1136px;width:24px;text-align:center;font-size:10.6px;color:#d4d4d4;transform:scaleX(0.84)">1960</div><div class="t" style="left:1434.5px;top:1136px;width:24px;text-align:center;font-size:10.6px;color:#d4d4d4;transform:scaleX(0.84)">1970</div><div class="t" style="left:1454.5px;top:1136px;width:24px;text-align:center;font-size:10.6px;color:#d4d4d4;transform:scaleX(0.84)">1980</div><div class="t" style="left:1474.5px;top:1136px;width:24px;text-align:center;font-size:10.6px;color:#d4d4d4;transform:scaleX(0.84)">1990</div><div class="t" style="left:1494.5px;top:1136px;width:24px;text-align:center;font-size:10.6px;color:#d4d4d4;transform:scaleX(0.84)">2000</div><div class="t" style="left:1514.5px;top:1136px;width:24px;text-align:center;font-size:10.6px;color:#d4d4d4;transform:scaleX(0.84)">2010</div><div class="t" style="left:1534.5px;top:1136px;width:24px;text-align:center;font-size:10.6px;color:#d4d4d4;transform:scaleX(0.84)">2020</div><div class="t" style="left:1554.5px;top:1136px;width:24px;text-align:center;font-size:10.6px;color:#d4d4d4;transform:scaleX(0.84)">2030</div><div class="t" style="left:1574.5px;top:1136px;width:24px;text-align:center;font-size:10.6px;color:#d4d4d4;transform:scaleX(0.84)">2040</div><div class="t" style="left:1594.5px;top:1136px;width:24px;text-align:center;font-size:10.6px;color:#d4d4d4;transform:scaleX(0.84)">2050</div><div class="t" style="left:1614.5px;top:1136px;width:24px;text-align:center;font-size:10.6px;color:#d4d4d4;transform:scaleX(0.84)">2060</div><div class="t" style="left:1634.5px;top:1136px;width:24px;text-align:center;font-size:10.6px;color:#d4d4d4;transform:scaleX(0.84)">2070</div><div class="t" style="left:1654.5px;top:1136px;width:24px;text-align:center;font-size:10.6px;color:#d4d4d4;transform:scaleX(0.84)">2080</div><div class="t" style="left:1674.5px;top:1136px;width:24px;text-align:center;font-size:10.6px;color:#d4d4d4;transform:scaleX(0.84)">2090</div><div class="t" style="left:1694.5px;top:1136px;width:24px;text-align:center;font-size:10.6px;color:#d4d4d4;transform:scaleX(0.84)">2100</div><div class="t" style="left:1714.5px;top:1136px;width:24px;text-align:center;font-size:10.6px;color:#d4d4d4;transform:scaleX(0.84)">2110</div><div class="t" style="left:1734.5px;top:1136px;width:24px;text-align:center;font-size:10.6px;color:#d4d4d4;transform:scaleX(0.84)">2120</div><div class="t" style="left:1754.5px;top:1136px;width:24px;text-align:center;font-size:10.6px;color:#d4d4d4;transform:scaleX(0.84)">2130</div><div class="t" style="left:1774.5px;top:1136px;width:24px;text-align:center;font-size:10.6px;color:#d4d4d4;transform:scaleX(0.84)">2140</div><div class="t" style="left:1794.5px;top:1136px;width:24px;text-align:center;font-size:10.6px;color:#d4d4d4;transform:scaleX(0.84)">2150</div><div class="t" style="left:1814.5px;top:1136px;width:24px;text-align:center;font-size:10.6px;color:#d4d4d4;transform:scaleX(0.84)">2160</div><div class="t" style="left:1834.5px;top:1136px;width:24px;text-align:center;font-size:10.6px;color:#d4d4d4;transform:scaleX(0.84)">2170</div><div class="t" style="left:1854.5px;top:1136px;width:24px;text-align:center;font-size:10.6px;color:#d4d4d4;transform:scaleX(0.84)">2180</div><div class="t" style="left:1874.5px;top:1136px;width:24px;text-align:center;font-size:10.6px;color:#d4d4d4;transform:scaleX(0.84)">2190</div><div class="t" style="left:1894.5px;top:1136px;width:24px;text-align:center;font-size:10.6px;color:#d4d4d4;transform:scaleX(0.84)">2200</div><div class="t" style="left:1914.5px;top:1136px;width:24px;text-align:center;font-size:10.6px;color:#d4d4d4;transform:scaleX(0.84)">2210</div><div class="t" style="left:1934.5px;top:1136px;width:24px;text-align:center;font-size:10.6px;color:#d4d4d4;transform:scaleX(0.84)">2220</div><div class="t" style="left:1954.5px;top:1136px;width:24px;text-align:center;font-size:10.6px;color:#d4d4d4;transform:scaleX(0.84)">2230</div><div class="t" style="left:1974.5px;top:1136px;width:24px;text-align:center;font-size:10.6px;color:#d4d4d4;transform:scaleX(0.84)">2240</div><div class="t" style="left:1994.5px;top:1136px;width:24px;text-align:center;font-size:10.6px;color:#d4d4d4;transform:scaleX(0.84)">2250</div><div class="t" style="left:2014.5px;top:1136px;width:24px;text-align:center;font-size:10.6px;color:#d4d4d4;transform:scaleX(0.84)">2260</div><div class="t" style="left:2034.5px;top:1136px;width:24px;text-align:center;font-size:10.6px;color:#d4d4d4;transform:scaleX(0.84)">2270</div><div class="t" style="left:2054.5px;top:1136px;width:24px;text-align:center;font-size:10.6px;color:#d4d4d4;transform:scaleX(0.84)">2280</div><div class="t" style="left:2074.5px;top:1136px;width:24px;text-align:center;font-size:10.6px;color:#d4d4d4;transform:scaleX(0.84)">2290</div><div class="t" style="left:2094.5px;top:1136px;width:24px;text-align:center;font-size:10.6px;color:#d4d4d4;transform:scaleX(0.84)">2300</div><div class="t" style="left:2114.5px;top:1136px;width:24px;text-align:center;font-size:10.6px;color:#d4d4d4;transform:scaleX(0.84)">2310</div><div class="t" style="left:2134.5px;top:1136px;width:24px;text-align:center;font-size:10.6px;color:#d4d4d4;transform:scaleX(0.84)">2320</div><div class="t" style="left:2154.5px;top:1136px;width:24px;text-align:center;font-size:10.6px;color:#d4d4d4;transform:scaleX(0.84)">2330</div><div class="t" style="left:2174.5px;top:1136px;width:24px;text-align:center;font-size:10.6px;color:#d4d4d4;transform:scaleX(0.84)">2340</div><div class="t" style="left:2194.5px;top:1136px;width:24px;text-align:center;font-size:10.6px;color:#d4d4d4;transform:scaleX(0.84)">2350</div><div class="t" style="left:2214.5px;top:1136px;width:24px;text-align:center;font-size:10.6px;color:#d4d4d4;transform:scaleX(0.84)">2360</div><div class="t" style="left:2234.5px;top:1136px;width:24px;text-align:center;font-size:10.6px;color:#d4d4d4;transform:scaleX(0.84)">2370</div><div class="t" style="left:2254.5px;top:1136px;width:24px;text-align:center;font-size:10.6px;color:#d4d4d4;transform:scaleX(0.84)">2380</div><div class="t" style="left:2274.5px;top:1136px;width:24px;text-align:center;font-size:10.6px;color:#d4d4d4;transform:scaleX(0.84)">2390</div><div class="t" style="left:2294.5px;top:1136px;width:24px;text-align:center;font-size:10.6px;color:#d4d4d4;transform:scaleX(0.84)">2400</div><div class="t" style="left:2314.5px;top:1136px;width:24px;text-align:center;font-size:10.6px;color:#d4d4d4;transform:scaleX(0.84)">2410</div><div class="t" style="left:2334.5px;top:1136px;width:24px;text-align:center;font-size:10.6px;color:#d4d4d4;transform:scaleX(0.84)">2420</div><div class="t" style="left:2354.5px;top:1136px;width:24px;text-align:center;font-size:10.6px;color:#d4d4d4;transform:scaleX(0.84)">2430</div><div class="t" style="left:2374.5px;top:1136px;width:24px;text-align:center;font-size:10.6px;color:#d4d4d4;transform:scaleX(0.84)">2440</div><div class="t" style="left:2394.5px;top:1136px;width:24px;text-align:center;font-size:10.6px;color:#d4d4d4;transform:scaleX(0.84)">2450</div><div class="t" style="left:2414.5px;top:1136px;width:24px;text-align:center;font-size:10.6px;color:#d4d4d4;transform:scaleX(0.84)">2460</div><div class="t" style="left:2434.5px;top:1136px;width:24px;text-align:center;font-size:10.6px;color:#d4d4d4;transform:scaleX(0.84)">2470</div><div class="t" style="left:2454.5px;top:1136px;width:24px;text-align:center;font-size:10.6px;color:#d4d4d4;transform:scaleX(0.84)">2480</div><div class="t" style="left:2474.5px;top:1136px;width:24px;text-align:center;font-size:10.6px;color:#d4d4d4;transform:scaleX(0.84)">2490</div><div class="t" style="left:2494.5px;top:1136px;width:24px;text-align:center;font-size:10.6px;color:#d4d4d4;transform:scaleX(0.84)">2500</div><div class="t" style="left:2514.5px;top:1136px;width:24px;text-align:center;font-size:10.6px;color:#d4d4d4;transform:scaleX(0.84)">2510</div></div>
<div class="a" style="left:515px;top:1147px;width:2033px;height:6px;background:#555;"></div>
<div class="a" style="left:516px;top:1147px;width:2032px;height:5px;background:repeating-linear-gradient(90deg,#c8c8c8 0 1px,#444 1px 2px)"></div>
<div class="a" style="left:526px;top:1147px;width:1px;height:5px;background:#333;"></div>
<div class="a" style="left:546px;top:1147px;width:1px;height:5px;background:#333;"></div>
<div class="a" style="left:566px;top:1147px;width:1px;height:5px;background:#333;"></div>
<div class="a" style="left:586px;top:1147px;width:1px;height:5px;background:#333;"></div>
<div class="a" style="left:606px;top:1147px;width:1px;height:5px;background:#333;"></div>
<div class="a" style="left:626px;top:1147px;width:1px;height:5px;background:#333;"></div>
<div class="a" style="left:646px;top:1147px;width:1px;height:5px;background:#333;"></div>
<div class="a" style="left:666px;top:1147px;width:1px;height:5px;background:#333;"></div>
<div class="a" style="left:686px;top:1147px;width:1px;height:5px;background:#333;"></div>
<div class="a" style="left:706px;top:1147px;width:1px;height:5px;background:#333;"></div>
<div class="a" style="left:726px;top:1147px;width:1px;height:5px;background:#333;"></div>
<div class="a" style="left:746px;top:1147px;width:1px;height:5px;background:#333;"></div>
<div class="a" style="left:766px;top:1147px;width:1px;height:5px;background:#333;"></div>
<div class="a" style="left:786px;top:1147px;width:1px;height:5px;background:#333;"></div>
<div class="a" style="left:806px;top:1147px;width:1px;height:5px;background:#333;"></div>
<div class="a" style="left:826px;top:1147px;width:1px;height:5px;background:#333;"></div>
<div class="a" style="left:846px;top:1147px;width:1px;height:5px;background:#333;"></div>
<div class="a" style="left:866px;top:1147px;width:1px;height:5px;background:#333;"></div>
<div class="a" style="left:886px;top:1147px;width:1px;height:5px;background:#333;"></div>
<div class="a" style="left:906px;top:1147px;width:1px;height:5px;background:#333;"></div>
<div class="a" style="left:926px;top:1147px;width:1px;height:5px;background:#333;"></div>
<div class="a" style="left:946px;top:1147px;width:1px;height:5px;background:#333;"></div>
<div class="a" style="left:966px;top:1147px;width:1px;height:5px;background:#333;"></div>
<div class="a" style="left:986px;top:1147px;width:1px;height:5px;background:#333;"></div>
<div class="a" style="left:1006px;top:1147px;width:1px;height:5px;background:#333;"></div>
<div class="a" style="left:1026px;top:1147px;width:1px;height:5px;background:#333;"></div>
<div class="a" style="left:1046px;top:1147px;width:1px;height:5px;background:#333;"></div>
<div class="a" style="left:1066px;top:1147px;width:1px;height:5px;background:#333;"></div>
<div class="a" style="left:1086px;top:1147px;width:1px;height:5px;background:#333;"></div>
<div class="a" style="left:1106px;top:1147px;width:1px;height:5px;background:#333;"></div>
<div class="a" style="left:1126px;top:1147px;width:1px;height:5px;background:#333;"></div>
<div class="a" style="left:1146px;top:1147px;width:1px;height:5px;background:#333;"></div>
<div class="a" style="left:1166px;top:1147px;width:1px;height:5px;background:#333;"></div>
<div class="a" style="left:1186px;top:1147px;width:1px;height:5px;background:#333;"></div>
<div class="a" style="left:1206px;top:1147px;width:1px;height:5px;background:#333;"></div>
<div class="a" style="left:1226px;top:1147px;width:1px;height:5px;background:#333;"></div>
<div class="a" style="left:1246px;top:1147px;width:1px;height:5px;background:#333;"></div>
<div class="a" style="left:1266px;top:1147px;width:1px;height:5px;background:#333;"></div>
<div class="a" style="left:1286px;top:1147px;width:1px;height:5px;background:#333;"></div>
<div class="a" style="left:1306px;top:1147px;width:1px;height:5px;background:#333;"></div>
<div class="a" style="left:1326px;top:1147px;width:1px;height:5px;background:#333;"></div>
<div class="a" style="left:1346px;top:1147px;width:1px;height:5px;background:#333;"></div>
<div class="a" style="left:1366px;top:1147px;width:1px;height:5px;background:#333;"></div>
<div class="a" style="left:1386px;top:1147px;width:1px;height:5px;background:#333;"></div>
<div class="a" style="left:1406px;top:1147px;width:1px;height:5px;background:#333;"></div>
<div class="a" style="left:1426px;top:1147px;width:1px;height:5px;background:#333;"></div>
<div class="a" style="left:1446px;top:1147px;width:1px;height:5px;background:#333;"></div>
<div class="a" style="left:1466px;top:1147px;width:1px;height:5px;background:#333;"></div>
<div class="a" style="left:1486px;top:1147px;width:1px;height:5px;background:#333;"></div>
<div class="a" style="left:1506px;top:1147px;width:1px;height:5px;background:#333;"></div>
<div class="a" style="left:1526px;top:1147px;width:1px;height:5px;background:#333;"></div>
<div class="a" style="left:1546px;top:1147px;width:1px;height:5px;background:#333;"></div>
<div class="a" style="left:1566px;top:1147px;width:1px;height:5px;background:#333;"></div>
<div class="a" style="left:1586px;top:1147px;width:1px;height:5px;background:#333;"></div>
<div class="a" style="left:1606px;top:1147px;width:1px;height:5px;background:#333;"></div>
<div class="a" style="left:1626px;top:1147px;width:1px;height:5px;background:#333;"></div>
<div class="a" style="left:1646px;top:1147px;width:1px;height:5px;background:#333;"></div>
<div class="a" style="left:1666px;top:1147px;width:1px;height:5px;background:#333;"></div>
<div class="a" style="left:1686px;top:1147px;width:1px;height:5px;background:#333;"></div>
<div class="a" style="left:1706px;top:1147px;width:1px;height:5px;background:#333;"></div>
<div class="a" style="left:1726px;top:1147px;width:1px;height:5px;background:#333;"></div>
<div class="a" style="left:1746px;top:1147px;width:1px;height:5px;background:#333;"></div>
<div class="a" style="left:1766px;top:1147px;width:1px;height:5px;background:#333;"></div>
<div class="a" style="left:1786px;top:1147px;width:1px;height:5px;background:#333;"></div>
<div class="a" style="left:1806px;top:1147px;width:1px;height:5px;background:#333;"></div>
<div class="a" style="left:1826px;top:1147px;width:1px;height:5px;background:#333;"></div>
<div class="a" style="left:1846px;top:1147px;width:1px;height:5px;background:#333;"></div>
<div class="a" style="left:1866px;top:1147px;width:1px;height:5px;background:#333;"></div>
<div class="a" style="left:1886px;top:1147px;width:1px;height:5px;background:#333;"></div>
<div class="a" style="left:1906px;top:1147px;width:1px;height:5px;background:#333;"></div>
<div class="a" style="left:1926px;top:1147px;width:1px;height:5px;background:#333;"></div>
<div class="a" style="left:1946px;top:1147px;width:1px;height:5px;background:#333;"></div>
<div class="a" style="left:1966px;top:1147px;width:1px;height:5px;background:#333;"></div>
<div class="a" style="left:1986px;top:1147px;width:1px;height:5px;background:#333;"></div>
<div class="a" style="left:2006px;top:1147px;width:1px;height:5px;background:#333;"></div>
<div class="a" style="left:2026px;top:1147px;width:1px;height:5px;background:#333;"></div>
<div class="a" style="left:2046px;top:1147px;width:1px;height:5px;background:#333;"></div>
<div class="a" style="left:2066px;top:1147px;width:1px;height:5px;background:#333;"></div>
<div class="a" style="left:2086px;top:1147px;width:1px;height:5px;background:#333;"></div>
<div class="a" style="left:2106px;top:1147px;width:1px;height:5px;background:#333;"></div>
<div class="a" style="left:2126px;top:1147px;width:1px;height:5px;background:#333;"></div>
<div class="a" style="left:2146px;top:1147px;width:1px;height:5px;background:#333;"></div>
<div class="a" style="left:2166px;top:1147px;width:1px;height:5px;background:#333;"></div>
<div class="a" style="left:2186px;top:1147px;width:1px;height:5px;background:#333;"></div>
<div class="a" style="left:2206px;top:1147px;width:1px;height:5px;background:#333;"></div>
<div class="a" style="left:2226px;top:1147px;width:1px;height:5px;background:#333;"></div>
<div class="a" style="left:2246px;top:1147px;width:1px;height:5px;background:#333;"></div>
<div class="a" style="left:2266px;top:1147px;width:1px;height:5px;background:#333;"></div>
<div class="a" style="left:2286px;top:1147px;width:1px;height:5px;background:#333;"></div>
<div class="a" style="left:2306px;top:1147px;width:1px;height:5px;background:#333;"></div>
<div class="a" style="left:2326px;top:1147px;width:1px;height:5px;background:#333;"></div>
<div class="a" style="left:2346px;top:1147px;width:1px;height:5px;background:#333;"></div>
<div class="a" style="left:2366px;top:1147px;width:1px;height:5px;background:#333;"></div>
<div class="a" style="left:2386px;top:1147px;width:1px;height:5px;background:#333;"></div>
<div class="a" style="left:2406px;top:1147px;width:1px;height:5px;background:#333;"></div>
<div class="a" style="left:2426px;top:1147px;width:1px;height:5px;background:#333;"></div>
<div class="a" style="left:2446px;top:1147px;width:1px;height:5px;background:#333;"></div>
<div class="a" style="left:2466px;top:1147px;width:1px;height:5px;background:#333;"></div>
<div class="a" style="left:2486px;top:1147px;width:1px;height:5px;background:#333;"></div>
<div class="a" style="left:2506px;top:1147px;width:1px;height:5px;background:#333;"></div>
<div class="a" style="left:2526px;top:1147px;width:1px;height:5px;background:#333;"></div>
<div class="a" style="left:515px;top:1152px;width:2033px;height:3px;background:linear-gradient(180deg,#5a5a5a,#2a2a2a);"></div>
<div class="a" style="left:1151px;top:1132px;width:7px;height:14px;background:#e02020;clip-path:polygon(0 0,100% 0,100% 100%)"></div>
<div class="a" style="left:1385px;top:1132px;width:6px;height:14px;background:#30a030;clip-path:polygon(0 0,100% 0,0 100%)"></div>
<div class="a" style="left:2548px;top:1132px;width:9px;height:24px;background:#474747;border-left:1px solid #222"></div>
<svg class="a" style="left:2547px;top:1139px;" width="11" height="10" viewBox="0 0 11 10"><path d="M5.5 0 V10" stroke="#ccc" stroke-width="0.8"/><path d="M4 2 L1 5 L4 8 M7 2 L10 5 L7 8" fill="none" stroke="#ccc" stroke-width="1.1"/></svg>
<div class="a" style="left:515px;top:1155px;width:2041px;height:1px;background:#474747;"></div>
<div class="a" style="left:515px;top:1156px;width:2041px;height:18px;background:repeating-linear-gradient(90deg,#555 0px 2px,#474747 2px 3px,#5a5a5a 3px 4px,#474747 4px 5px,#5a5a5a 5px 6px,#474747 6px 7px,#5a5a5a 7px 8px,#474747 8px 9px,#5a5a5a 9px 10px,#474747 10px 11px,#5a5a5a 11px 12px,#474747 12px 13px,#5a5a5a 13px 14px,#474747 14px 15px,#5a5a5a 15px 16px,#474747 16px 17px,#5a5a5a 17px 18px,#474747 18px 19px,#474747 19px 20px);background-position:11px 0"></div>
<div class="a" style="left:515px;top:1174px;width:2041px;height:1px;background:#474747;"></div>
<div class="a" style="left:515px;top:1175px;width:2041px;height:18px;background:repeating-linear-gradient(90deg,#6a6a6a 0px 2px,#4a4a4a 2px 3px,#6a6a6a 3px 4px,#4a4a4a 4px 5px,#6a6a6a 5px 6px,#4a4a4a 6px 7px,#6a6a6a 7px 8px,#4a4a4a 8px 9px,#6a6a6a 9px 10px,#4a4a4a 10px 11px,#6a6a6a 11px 12px,#4a4a4a 12px 13px,#6a6a6a 13px 14px,#4a4a4a 14px 15px,#6a6a6a 15px 16px,#4a4a4a 16px 17px,#6a6a6a 17px 18px,#4a4a4a 18px 19px,#4a4a4a 19px 20px);background-position:11px 0"></div>
<div class="a" style="left:515px;top:1193px;width:2041px;height:1px;background:#474747;"></div>
<div class="a" style="left:515px;top:1194px;width:2041px;height:18px;background:repeating-linear-gradient(90deg,#505050 0px 2px,#474747 2px 3px,#555555 3px 4px,#474747 4px 5px,#555555 5px 6px,#474747 6px 7px,#555555 7px 8px,#474747 8px 9px,#555555 9px 10px,#474747 10px 11px,#555555 11px 12px,#474747 12px 13px,#555555 13px 14px,#474747 14px 15px,#555555 15px 16px,#474747 16px 17px,#555555 17px 18px,#474747 18px 19px,#474747 19px 20px);background-position:11px 0"></div>
<div class="a" style="left:515px;top:1212px;width:2041px;height:1px;background:#474747;"></div>
<div class="a" style="left:515px;top:1213px;width:2041px;height:18px;background:repeating-linear-gradient(90deg,#b4b4b4 0px 2px,#9e9e9e 2px 3px,#b4b4b4 3px 4px,#9e9e9e 4px 5px,#b4b4b4 5px 6px,#9e9e9e 6px 7px,#b4b4b4 7px 8px,#9e9e9e 8px 9px,#b4b4b4 9px 10px,#9e9e9e 10px 11px,#b4b4b4 11px 12px,#9e9e9e 12px 13px,#b4b4b4 13px 14px,#9e9e9e 14px 15px,#b4b4b4 15px 16px,#9e9e9e 16px 17px,#b4b4b4 17px 18px,#9e9e9e 18px 19px,#9e9e9e 19px 20px);background-position:11px 0"></div>
<div class="a" style="left:515px;top:1231px;width:2041px;height:1px;background:#474747;"></div>
<div class="a" style="left:515px;top:1232px;width:2041px;height:18px;background:repeating-linear-gradient(90deg,#505050 0px 2px,#474747 2px 3px,#555555 3px 4px,#474747 4px 5px,#555555 5px 6px,#474747 6px 7px,#555555 7px 8px,#474747 8px 9px,#555555 9px 10px,#474747 10px 11px,#555555 11px 12px,#474747 12px 13px,#555555 13px 14px,#474747 14px 15px,#555555 15px 16px,#474747 16px 17px,#555555 17px 18px,#474747 18px 19px,#474747 19px 20px);background-position:11px 0"></div>
<div class="a" style="left:515px;top:1250px;width:2041px;height:1px;background:#474747;"></div>
<div class="a" style="left:515px;top:1251px;width:2041px;height:18px;background:repeating-linear-gradient(90deg,#6a6a6a 0px 2px,#4a4a4a 2px 3px,#6a6a6a 3px 4px,#4a4a4a 4px 5px,#6a6a6a 5px 6px,#4a4a4a 6px 7px,#6a6a6a 7px 8px,#4a4a4a 8px 9px,#6a6a6a 9px 10px,#4a4a4a 10px 11px,#6a6a6a 11px 12px,#4a4a4a 12px 13px,#6a6a6a 13px 14px,#4a4a4a 14px 15px,#6a6a6a 15px 16px,#4a4a4a 16px 17px,#6a6a6a 17px 18px,#4a4a4a 18px 19px,#4a4a4a 19px 20px);background-position:11px 0"></div>
<div class="a" style="left:515px;top:1269px;width:2041px;height:1px;background:#474747;"></div>
<div class="a" style="left:515px;top:1270px;width:2041px;height:75px;background:repeating-linear-gradient(90deg,#505050 0px 2px,#474747 2px 3px,#555555 3px 4px,#474747 4px 5px,#555555 5px 6px,#474747 6px 7px,#555555 7px 8px,#474747 8px 9px,#555555 9px 10px,#474747 10px 11px,#555555 11px 12px,#474747 12px 13px,#555555 13px 14px,#474747 14px 15px,#555555 15px 16px,#474747 16px 17px,#555555 17px 18px,#474747 18px 19px,#474747 19px 20px);background-position:11px 0"></div>
<div class="a" style="left:515px;top:1345px;width:2041px;height:1px;background:#474747;"></div>
<div class="a" style="left:515px;top:1346px;width:2041px;height:18px;background:repeating-linear-gradient(90deg,#6a6a6a 0px 2px,#4a4a4a 2px 3px,#6a6a6a 3px 4px,#4a4a4a 4px 5px,#6a6a6a 5px 6px,#4a4a4a 6px 7px,#6a6a6a 7px 8px,#4a4a4a 8px 9px,#6a6a6a 9px 10px,#4a4a4a 10px 11px,#6a6a6a 11px 12px,#4a4a4a 12px 13px,#6a6a6a 13px 14px,#4a4a4a 14px 15px,#6a6a6a 15px 16px,#4a4a4a 16px 17px,#6a6a6a 17px 18px,#4a4a4a 18px 19px,#4a4a4a 19px 20px);background-position:11px 0"></div>
<div class="a" style="left:515px;top:1364px;width:2041px;height:1px;background:#474747;"></div>
<div class="a" style="left:515px;top:1365px;width:2041px;height:7px;background:repeating-linear-gradient(90deg,#505050 0px 2px,#474747 2px 3px,#555555 3px 4px,#474747 4px 5px,#555555 5px 6px,#474747 6px 7px,#555555 7px 8px,#474747 8px 9px,#555555 9px 10px,#474747 10px 11px,#555555 11px 12px,#474747 12px 13px,#555555 13px 14px,#474747 14px 15px,#555555 15px 16px,#474747 16px 17px,#555555 17px 18px,#474747 18px 19px,#474747 19px 20px);background-position:11px 0"></div>
<svg class="a" style="left:515px;top:1156px;" width="2041" height="17" viewBox="0 0 2041 17"><rect x="0" y="8" width="2037" height="1" fill="#000"/><g fill="#000"><rect x="0" y="6.8" width="1.05" height="2.4"/><rect x="1" y="5.6" width="1.05" height="4.7"/><rect x="2" y="4.9" width="1.05" height="6.1"/><rect x="3" y="4.9" width="1.05" height="6.2"/><rect x="4" y="4.7" width="1.05" height="6.6"/><rect x="5" y="4.7" width="1.05" height="6.6"/><rect x="6" y="4.8" width="1.05" height="6.4"/><rect x="7" y="4.7" width="1.05" height="6.7"/><rect x="8" y="4.8" width="1.05" height="6.3"/><rect x="9" y="4.7" width="1.05" height="6.6"/><rect x="10" y="4.8" width="1.05" height="6.3"/><rect x="11" y="4.9" width="1.05" height="6.3"/><rect x="12" y="4.7" width="1.05" height="6.5"/><rect x="13" y="4.5" width="1.05" height="7.0"/><rect x="14" y="4.7" width="1.05" height="6.6"/><rect x="15" y="4.8" width="1.05" height="6.5"/><rect x="16" y="5.6" width="1.05" height="4.7"/><rect x="18" y="6.8" width="1.05" height="2.4"/><rect x="19" y="5.7" width="1.05" height="4.6"/><rect x="20" y="5.3" width="1.05" height="5.3"/><rect x="21" y="5.0" width="1.05" height="6.1"/><rect x="22" y="5.2" width="1.05" height="5.6"/><rect x="23" y="5.9" width="1.05" height="4.2"/><rect x="25" y="7.0" width="1.05" height="2.1"/><rect x="26" y="5.9" width="1.05" height="4.1"/><rect x="27" y="5.5" width="1.05" height="4.9"/><rect x="28" y="5.3" width="1.05" height="5.4"/><rect x="29" y="5.0" width="1.05" height="6.0"/><rect x="30" y="5.2" width="1.05" height="5.7"/><rect x="31" y="5.0" width="1.05" height="5.9"/><rect x="32" y="5.0" width="1.05" height="6.0"/><rect x="33" y="5.1" width="1.05" height="5.9"/><rect x="34" y="5.0" width="1.05" height="6.0"/><rect x="35" y="5.2" width="1.05" height="5.6"/><rect x="36" y="5.3" width="1.05" height="5.5"/><rect x="37" y="5.2" width="1.05" height="5.5"/><rect x="38" y="5.0" width="1.05" height="5.9"/><rect x="39" y="5.1" width="1.05" height="5.9"/><rect x="40" y="5.1" width="1.05" height="5.8"/><rect x="41" y="5.9" width="1.05" height="4.1"/><rect x="46" y="7.3" width="1.05" height="1.4"/><rect x="47" y="6.8" width="1.05" height="2.4"/><rect x="48" y="6.5" width="1.05" height="3.0"/><rect x="49" y="6.9" width="1.05" height="2.2"/><rect x="88" y="6.7" width="1.05" height="2.6"/><rect x="89" y="5.8" width="1.05" height="4.4"/><rect x="90" y="4.9" width="1.05" height="6.2"/><rect x="91" y="4.2" width="1.05" height="7.5"/><rect x="92" y="4.1" width="1.05" height="7.9"/><rect x="93" y="4.2" width="1.05" height="7.6"/><rect x="94" y="3.9" width="1.05" height="8.2"/><rect x="95" y="4.2" width="1.05" height="7.5"/><rect x="96" y="4.2" width="1.05" height="7.6"/><rect x="97" y="4.0" width="1.05" height="7.9"/><rect x="98" y="4.3" width="1.05" height="7.5"/><rect x="99" y="4.2" width="1.05" height="7.6"/><rect x="100" y="4.4" width="1.05" height="7.2"/><rect x="101" y="4.1" width="1.05" height="7.7"/><rect x="102" y="4.0" width="1.05" height="8.0"/><rect x="103" y="4.0" width="1.05" height="7.9"/><rect x="104" y="3.9" width="1.05" height="8.2"/><rect x="105" y="4.1" width="1.05" height="7.7"/><rect x="106" y="4.0" width="1.05" height="7.9"/><rect x="107" y="4.0" width="1.05" height="7.9"/><rect x="108" y="4.1" width="1.05" height="7.9"/><rect x="109" y="4.1" width="1.05" height="7.8"/><rect x="110" y="4.0" width="1.05" height="8.1"/><rect x="111" y="3.8" width="1.05" height="8.3"/><rect x="112" y="4.0" width="1.05" height="8.0"/><rect x="113" y="4.0" width="1.05" height="8.0"/><rect x="114" y="4.3" width="1.05" height="7.4"/><rect x="115" y="4.1" width="1.05" height="7.8"/><rect x="116" y="4.0" width="1.05" height="7.9"/><rect x="117" y="3.8" width="1.05" height="8.3"/><rect x="118" y="3.8" width="1.05" height="8.3"/><rect x="119" y="4.1" width="1.05" height="7.7"/><rect x="120" y="4.2" width="1.05" height="7.6"/><rect x="121" y="4.1" width="1.05" height="7.9"/><rect x="122" y="4.4" width="1.05" height="7.3"/><rect x="123" y="4.2" width="1.05" height="7.5"/><rect x="124" y="4.3" width="1.05" height="7.3"/><rect x="125" y="4.4" width="1.05" height="7.2"/><rect x="126" y="4.5" width="1.05" height="7.1"/><rect x="127" y="4.1" width="1.05" height="7.7"/><rect x="128" y="4.3" width="1.05" height="7.4"/><rect x="129" y="4.3" width="1.05" height="7.3"/><rect x="130" y="4.3" width="1.05" height="7.5"/><rect x="131" y="4.1" width="1.05" height="7.7"/><rect x="132" y="4.9" width="1.05" height="6.1"/><rect x="133" y="5.6" width="1.05" height="4.7"/><rect x="135" y="6.7" width="1.05" height="2.6"/><rect x="136" y="5.9" width="1.05" height="4.2"/><rect x="137" y="5.2" width="1.05" height="5.5"/><rect x="138" y="4.6" width="1.05" height="6.8"/><rect x="139" y="4.5" width="1.05" height="6.9"/><rect x="140" y="4.4" width="1.05" height="7.1"/><rect x="141" y="4.4" width="1.05" height="7.1"/><rect x="142" y="4.2" width="1.05" height="7.7"/><rect x="143" y="4.0" width="1.05" height="7.9"/><rect x="144" y="4.4" width="1.05" height="7.3"/><rect x="145" y="4.5" width="1.05" height="7.0"/><rect x="146" y="4.5" width="1.05" height="7.0"/><rect x="147" y="4.5" width="1.05" height="7.0"/><rect x="148" y="4.4" width="1.05" height="7.2"/><rect x="149" y="4.3" width="1.05" height="7.4"/><rect x="150" y="4.4" width="1.05" height="7.2"/><rect x="151" y="4.6" width="1.05" height="6.8"/><rect x="152" y="4.5" width="1.05" height="7.1"/><rect x="153" y="4.4" width="1.05" height="7.1"/><rect x="154" y="4.3" width="1.05" height="7.3"/><rect x="155" y="4.1" width="1.05" height="7.8"/><rect x="156" y="4.1" width="1.05" height="7.7"/><rect x="157" y="4.2" width="1.05" height="7.5"/><rect x="158" y="4.2" width="1.05" height="7.6"/><rect x="159" y="4.2" width="1.05" height="7.6"/><rect x="160" y="4.5" width="1.05" height="7.0"/><rect x="161" y="4.2" width="1.05" height="7.6"/><rect x="162" y="4.1" width="1.05" height="7.8"/><rect x="163" y="4.1" width="1.05" height="7.9"/><rect x="164" y="4.1" width="1.05" height="7.9"/><rect x="165" y="4.3" width="1.05" height="7.5"/><rect x="166" y="4.3" width="1.05" height="7.3"/><rect x="167" y="4.5" width="1.05" height="7.0"/><rect x="168" y="4.3" width="1.05" height="7.3"/><rect x="169" y="4.5" width="1.05" height="6.9"/><rect x="170" y="4.6" width="1.05" height="6.8"/><rect x="171" y="4.6" width="1.05" height="6.9"/><rect x="172" y="4.6" width="1.05" height="6.8"/><rect x="173" y="4.5" width="1.05" height="7.0"/><rect x="174" y="4.6" width="1.05" height="6.8"/><rect x="175" y="4.7" width="1.05" height="6.7"/><rect x="176" y="4.6" width="1.05" height="6.7"/><rect x="177" y="4.6" width="1.05" height="6.7"/><rect x="178" y="4.5" width="1.05" height="7.0"/><rect x="179" y="4.6" width="1.05" height="6.8"/><rect x="180" y="4.3" width="1.05" height="7.5"/><rect x="181" y="4.2" width="1.05" height="7.5"/><rect x="182" y="4.5" width="1.05" height="7.1"/><rect x="183" y="4.5" width="1.05" height="7.0"/><rect x="184" y="4.5" width="1.05" height="7.1"/><rect x="185" y="4.4" width="1.05" height="7.1"/><rect x="186" y="4.5" width="1.05" height="6.9"/><rect x="187" y="4.2" width="1.05" height="7.5"/><rect x="188" y="4.0" width="1.05" height="7.9"/><rect x="189" y="4.2" width="1.05" height="7.6"/><rect x="190" y="4.3" width="1.05" height="7.4"/><rect x="191" y="4.5" width="1.05" height="7.0"/><rect x="192" y="4.6" width="1.05" height="6.8"/><rect x="193" y="4.5" width="1.05" height="7.0"/><rect x="194" y="4.5" width="1.05" height="7.0"/><rect x="195" y="4.2" width="1.05" height="7.6"/><rect x="196" y="4.4" width="1.05" height="7.1"/><rect x="197" y="4.7" width="1.05" height="6.7"/><rect x="198" y="4.7" width="1.05" height="6.6"/><rect x="199" y="5.2" width="1.05" height="5.6"/><rect x="200" y="5.9" width="1.05" height="4.3"/><rect x="202" y="6.6" width="1.05" height="2.9"/><rect x="203" y="5.3" width="1.05" height="5.4"/><rect x="204" y="4.5" width="1.05" height="7.0"/><rect x="205" y="3.9" width="1.05" height="8.2"/><rect x="206" y="3.7" width="1.05" height="8.5"/><rect x="207" y="3.8" width="1.05" height="8.5"/><rect x="208" y="4.0" width="1.05" height="8.0"/><rect x="209" y="4.0" width="1.05" height="7.9"/><rect x="210" y="4.2" width="1.05" height="7.7"/><rect x="211" y="3.9" width="1.05" height="8.2"/><rect x="212" y="3.9" width="1.05" height="8.2"/><rect x="213" y="3.8" width="1.05" height="8.4"/><rect x="214" y="4.0" width="1.05" height="8.0"/><rect x="215" y="4.1" width="1.05" height="7.8"/><rect x="216" y="3.8" width="1.05" height="8.3"/><rect x="217" y="3.6" width="1.05" height="8.7"/><rect x="218" y="3.6" width="1.05" height="8.7"/><rect x="219" y="3.7" width="1.05" height="8.7"/><rect x="220" y="3.7" width="1.05" height="8.7"/><rect x="221" y="3.7" width="1.05" height="8.6"/><rect x="222" y="4.1" width="1.05" height="7.9"/><rect x="223" y="5.2" width="1.05" height="5.6"/><rect x="268" y="7.1" width="1.05" height="1.9"/><rect x="269" y="6.3" width="1.05" height="3.5"/><rect x="270" y="6.0" width="1.05" height="4.1"/><rect x="271" y="6.5" width="1.05" height="3.1"/><rect x="272" y="6.2" width="1.05" height="3.7"/><rect x="273" y="5.4" width="1.05" height="5.2"/><rect x="274" y="4.5" width="1.05" height="7.0"/><rect x="275" y="4.0" width="1.05" height="7.9"/><rect x="276" y="3.6" width="1.05" height="8.9"/><rect x="277" y="3.4" width="1.05" height="9.3"/><rect x="278" y="3.3" width="1.05" height="9.4"/><rect x="279" y="3.6" width="1.05" height="8.8"/><rect x="280" y="3.8" width="1.05" height="8.4"/><rect x="281" y="3.9" width="1.05" height="8.2"/><rect x="282" y="3.9" width="1.05" height="8.1"/><rect x="283" y="4.0" width="1.05" height="8.1"/><rect x="284" y="3.7" width="1.05" height="8.6"/><rect x="285" y="3.5" width="1.05" height="9.1"/><rect x="286" y="3.4" width="1.05" height="9.2"/><rect x="287" y="3.6" width="1.05" height="8.8"/><rect x="288" y="3.6" width="1.05" height="8.9"/><rect x="289" y="3.5" width="1.05" height="9.1"/><rect x="290" y="3.8" width="1.05" height="8.3"/><rect x="291" y="3.6" width="1.05" height="8.7"/><rect x="292" y="3.4" width="1.05" height="9.1"/><rect x="293" y="3.4" width="1.05" height="9.2"/><rect x="294" y="3.4" width="1.05" height="9.1"/><rect x="295" y="3.6" width="1.05" height="8.8"/><rect x="296" y="3.8" width="1.05" height="8.3"/><rect x="297" y="3.6" width="1.05" height="8.9"/><rect x="298" y="3.7" width="1.05" height="8.5"/><rect x="299" y="3.5" width="1.05" height="8.9"/><rect x="300" y="3.3" width="1.05" height="9.3"/><rect x="301" y="3.6" width="1.05" height="8.8"/><rect x="302" y="3.7" width="1.05" height="8.6"/><rect x="303" y="3.4" width="1.05" height="9.1"/><rect x="304" y="3.5" width="1.05" height="9.1"/><rect x="305" y="3.8" width="1.05" height="8.4"/><rect x="306" y="3.9" width="1.05" height="8.1"/><rect x="307" y="4.0" width="1.05" height="8.0"/><rect x="308" y="3.6" width="1.05" height="8.9"/><rect x="309" y="3.5" width="1.05" height="9.1"/><rect x="310" y="3.8" width="1.05" height="8.4"/><rect x="311" y="3.5" width="1.05" height="8.9"/><rect x="312" y="3.3" width="1.05" height="9.3"/><rect x="313" y="3.5" width="1.05" height="9.1"/><rect x="314" y="3.7" width="1.05" height="8.6"/><rect x="315" y="3.7" width="1.05" height="8.7"/><rect x="316" y="3.9" width="1.05" height="8.2"/><rect x="317" y="4.0" width="1.05" height="7.9"/><rect x="318" y="3.6" width="1.05" height="8.9"/><rect x="319" y="3.5" width="1.05" height="8.9"/><rect x="320" y="3.6" width="1.05" height="8.8"/><rect x="321" y="3.4" width="1.05" height="9.2"/><rect x="322" y="3.6" width="1.05" height="8.8"/><rect x="323" y="3.4" width="1.05" height="9.1"/><rect x="324" y="3.4" width="1.05" height="9.2"/><rect x="325" y="4.1" width="1.05" height="7.9"/><rect x="326" y="4.8" width="1.05" height="6.5"/><rect x="327" y="5.5" width="1.05" height="5.1"/><rect x="339" y="6.6" width="1.05" height="2.8"/><rect x="340" y="5.6" width="1.05" height="4.9"/><rect x="341" y="4.8" width="1.05" height="6.4"/><rect x="342" y="4.2" width="1.05" height="7.7"/><rect x="343" y="4.1" width="1.05" height="7.8"/><rect x="344" y="3.6" width="1.05" height="8.8"/><rect x="345" y="3.7" width="1.05" height="8.5"/><rect x="346" y="3.7" width="1.05" height="8.5"/><rect x="347" y="3.7" width="1.05" height="8.7"/><rect x="348" y="3.4" width="1.05" height="9.1"/><rect x="349" y="3.6" width="1.05" height="8.7"/><rect x="350" y="3.4" width="1.05" height="9.2"/><rect x="351" y="3.6" width="1.05" height="8.9"/><rect x="352" y="3.6" width="1.05" height="8.8"/><rect x="353" y="3.6" width="1.05" height="8.7"/><rect x="354" y="3.9" width="1.05" height="8.1"/><rect x="355" y="3.8" width="1.05" height="8.4"/><rect x="356" y="3.9" width="1.05" height="8.2"/><rect x="357" y="4.1" width="1.05" height="7.9"/><rect x="358" y="3.7" width="1.05" height="8.7"/><rect x="359" y="3.9" width="1.05" height="8.3"/><rect x="360" y="3.8" width="1.05" height="8.5"/><rect x="361" y="3.6" width="1.05" height="8.8"/><rect x="362" y="3.6" width="1.05" height="8.8"/><rect x="363" y="3.8" width="1.05" height="8.5"/><rect x="364" y="3.7" width="1.05" height="8.6"/><rect x="365" y="3.7" width="1.05" height="8.7"/><rect x="366" y="3.5" width="1.05" height="9.0"/><rect x="367" y="3.8" width="1.05" height="8.3"/><rect x="368" y="3.7" width="1.05" height="8.6"/><rect x="369" y="3.8" width="1.05" height="8.3"/><rect x="370" y="3.9" width="1.05" height="8.3"/><rect x="371" y="3.6" width="1.05" height="8.8"/><rect x="372" y="3.6" width="1.05" height="8.7"/><rect x="373" y="3.6" width="1.05" height="8.7"/><rect x="374" y="3.5" width="1.05" height="9.0"/><rect x="375" y="3.4" width="1.05" height="9.3"/><rect x="376" y="3.6" width="1.05" height="8.8"/><rect x="377" y="3.6" width="1.05" height="8.8"/><rect x="378" y="3.6" width="1.05" height="8.7"/><rect x="379" y="3.7" width="1.05" height="8.7"/><rect x="380" y="3.6" width="1.05" height="8.9"/><rect x="381" y="3.7" width="1.05" height="8.7"/><rect x="382" y="3.7" width="1.05" height="8.7"/><rect x="383" y="3.7" width="1.05" height="8.6"/><rect x="384" y="3.4" width="1.05" height="9.1"/><rect x="385" y="3.5" width="1.05" height="9.1"/><rect x="386" y="3.6" width="1.05" height="8.7"/><rect x="387" y="4.2" width="1.05" height="7.5"/><rect x="388" y="5.3" width="1.05" height="5.5"/><rect x="408" y="6.9" width="1.05" height="2.2"/><rect x="409" y="5.6" width="1.05" height="4.8"/><rect x="410" y="5.1" width="1.05" height="5.8"/><rect x="411" y="5.2" width="1.05" height="5.6"/><rect x="412" y="5.3" width="1.05" height="5.5"/><rect x="413" y="5.1" width="1.05" height="5.7"/><rect x="414" y="5.2" width="1.05" height="5.5"/><rect x="415" y="5.2" width="1.05" height="5.6"/><rect x="416" y="5.3" width="1.05" height="5.5"/><rect x="417" y="6.0" width="1.05" height="4.0"/><rect x="418" y="6.0" width="1.05" height="4.1"/><rect x="419" y="5.1" width="1.05" height="5.8"/><rect x="420" y="4.7" width="1.05" height="6.6"/><rect x="421" y="4.2" width="1.05" height="7.5"/><rect x="422" y="4.1" width="1.05" height="7.8"/><rect x="423" y="4.3" width="1.05" height="7.4"/><rect x="424" y="4.0" width="1.05" height="8.0"/><rect x="425" y="3.8" width="1.05" height="8.3"/><rect x="426" y="4.2" width="1.05" height="7.7"/><rect x="427" y="3.9" width="1.05" height="8.2"/><rect x="428" y="4.1" width="1.05" height="7.8"/><rect x="429" y="4.1" width="1.05" height="7.8"/><rect x="430" y="3.9" width="1.05" height="8.3"/><rect x="431" y="3.9" width="1.05" height="8.3"/><rect x="432" y="4.2" width="1.05" height="7.6"/><rect x="433" y="4.2" width="1.05" height="7.6"/><rect x="434" y="4.1" width="1.05" height="7.7"/><rect x="435" y="4.2" width="1.05" height="7.6"/><rect x="436" y="4.3" width="1.05" height="7.4"/><rect x="437" y="4.3" width="1.05" height="7.4"/><rect x="438" y="4.1" width="1.05" height="7.8"/><rect x="439" y="4.4" width="1.05" height="7.3"/><rect x="440" y="4.2" width="1.05" height="7.6"/><rect x="441" y="4.2" width="1.05" height="7.6"/><rect x="442" y="4.4" width="1.05" height="7.2"/><rect x="443" y="4.3" width="1.05" height="7.3"/><rect x="444" y="4.1" width="1.05" height="7.7"/><rect x="445" y="4.1" width="1.05" height="7.7"/><rect x="446" y="4.4" width="1.05" height="7.3"/><rect x="447" y="4.0" width="1.05" height="8.1"/><rect x="448" y="4.4" width="1.05" height="7.3"/><rect x="449" y="5.3" width="1.05" height="5.5"/><rect x="452" y="7.2" width="1.05" height="1.5"/><rect x="453" y="6.5" width="1.05" height="3.0"/><rect x="454" y="6.3" width="1.05" height="3.4"/><rect x="455" y="6.7" width="1.05" height="2.7"/><rect x="493" y="6.6" width="1.05" height="2.8"/><rect x="494" y="6.2" width="1.05" height="3.6"/><rect x="495" y="5.8" width="1.05" height="4.3"/><rect x="496" y="5.4" width="1.05" height="5.2"/><rect x="497" y="5.2" width="1.05" height="5.7"/><rect x="498" y="5.2" width="1.05" height="5.7"/><rect x="499" y="5.1" width="1.05" height="5.8"/><rect x="500" y="4.6" width="1.05" height="6.7"/><rect x="501" y="4.5" width="1.05" height="7.0"/><rect x="502" y="4.3" width="1.05" height="7.5"/><rect x="503" y="4.4" width="1.05" height="7.3"/><rect x="504" y="4.3" width="1.05" height="7.3"/><rect x="505" y="3.9" width="1.05" height="8.1"/><rect x="506" y="3.9" width="1.05" height="8.1"/><rect x="507" y="4.1" width="1.05" height="7.7"/><rect x="508" y="3.7" width="1.05" height="8.6"/><rect x="509" y="3.7" width="1.05" height="8.5"/><rect x="510" y="3.6" width="1.05" height="8.7"/><rect x="511" y="4.0" width="1.05" height="8.0"/><rect x="512" y="3.7" width="1.05" height="8.6"/><rect x="513" y="4.0" width="1.05" height="7.9"/><rect x="514" y="3.7" width="1.05" height="8.5"/><rect x="515" y="3.8" width="1.05" height="8.3"/><rect x="516" y="3.9" width="1.05" height="8.1"/><rect x="517" y="3.9" width="1.05" height="8.3"/><rect x="518" y="3.6" width="1.05" height="8.7"/><rect x="519" y="3.9" width="1.05" height="8.2"/><rect x="520" y="4.1" width="1.05" height="7.8"/><rect x="521" y="3.9" width="1.05" height="8.1"/><rect x="522" y="4.0" width="1.05" height="7.9"/><rect x="523" y="4.1" width="1.05" height="7.7"/><rect x="524" y="4.2" width="1.05" height="7.7"/><rect x="525" y="4.2" width="1.05" height="7.5"/><rect x="526" y="4.2" width="1.05" height="7.7"/><rect x="527" y="4.1" width="1.05" height="7.8"/><rect x="528" y="4.1" width="1.05" height="7.9"/><rect x="529" y="3.8" width="1.05" height="8.4"/><rect x="530" y="4.0" width="1.05" height="8.1"/><rect x="531" y="3.9" width="1.05" height="8.2"/><rect x="532" y="4.1" width="1.05" height="7.9"/><rect x="533" y="4.0" width="1.05" height="8.0"/><rect x="534" y="4.2" width="1.05" height="7.6"/><rect x="535" y="4.1" width="1.05" height="7.7"/><rect x="536" y="4.2" width="1.05" height="7.5"/><rect x="537" y="3.9" width="1.05" height="8.2"/><rect x="538" y="3.8" width="1.05" height="8.3"/><rect x="539" y="4.0" width="1.05" height="8.0"/><rect x="540" y="3.9" width="1.05" height="8.1"/><rect x="541" y="3.7" width="1.05" height="8.7"/><rect x="542" y="4.0" width="1.05" height="8.0"/><rect x="543" y="3.7" width="1.05" height="8.5"/><rect x="544" y="3.8" width="1.05" height="8.3"/><rect x="545" y="3.9" width="1.05" height="8.3"/><rect x="546" y="3.7" width="1.05" height="8.7"/><rect x="547" y="3.8" width="1.05" height="8.3"/><rect x="548" y="3.9" width="1.05" height="8.3"/><rect x="549" y="3.8" width="1.05" height="8.5"/><rect x="550" y="3.6" width="1.05" height="8.9"/><rect x="551" y="3.8" width="1.05" height="8.4"/><rect x="552" y="3.7" width="1.05" height="8.7"/><rect x="553" y="3.7" width="1.05" height="8.7"/><rect x="554" y="3.7" width="1.05" height="8.6"/><rect x="555" y="3.9" width="1.05" height="8.3"/><rect x="556" y="3.9" width="1.05" height="8.1"/><rect x="557" y="4.1" width="1.05" height="7.7"/><rect x="558" y="4.2" width="1.05" height="7.6"/><rect x="559" y="4.2" width="1.05" height="7.6"/><rect x="560" y="3.9" width="1.05" height="8.3"/><rect x="561" y="4.0" width="1.05" height="8.0"/><rect x="562" y="4.1" width="1.05" height="7.8"/><rect x="563" y="4.2" width="1.05" height="7.6"/><rect x="564" y="3.8" width="1.05" height="8.4"/><rect x="565" y="3.6" width="1.05" height="8.7"/><rect x="566" y="3.7" width="1.05" height="8.7"/><rect x="567" y="3.9" width="1.05" height="8.2"/><rect x="568" y="4.0" width="1.05" height="8.0"/><rect x="569" y="4.0" width="1.05" height="7.9"/><rect x="570" y="4.0" width="1.05" height="8.1"/><rect x="571" y="4.1" width="1.05" height="7.8"/><rect x="572" y="4.0" width="1.05" height="8.0"/><rect x="573" y="4.0" width="1.05" height="7.9"/><rect x="574" y="3.7" width="1.05" height="8.6"/><rect x="575" y="3.5" width="1.05" height="8.9"/><rect x="576" y="3.7" width="1.05" height="8.6"/><rect x="577" y="3.9" width="1.05" height="8.1"/><rect x="578" y="3.6" width="1.05" height="8.7"/><rect x="579" y="3.9" width="1.05" height="8.3"/><rect x="580" y="3.9" width="1.05" height="8.1"/><rect x="581" y="4.2" width="1.05" height="7.7"/><rect x="582" y="4.0" width="1.05" height="7.9"/><rect x="583" y="3.9" width="1.05" height="8.1"/><rect x="584" y="3.9" width="1.05" height="8.2"/><rect x="585" y="4.0" width="1.05" height="7.9"/><rect x="586" y="3.9" width="1.05" height="8.1"/><rect x="587" y="4.2" width="1.05" height="7.7"/><rect x="588" y="4.1" width="1.05" height="7.8"/><rect x="589" y="4.2" width="1.05" height="7.6"/><rect x="590" y="4.0" width="1.05" height="7.9"/><rect x="591" y="4.2" width="1.05" height="7.6"/><rect x="592" y="4.3" width="1.05" height="7.5"/><rect x="593" y="4.1" width="1.05" height="7.7"/><rect x="594" y="4.1" width="1.05" height="7.8"/><rect x="595" y="3.9" width="1.05" height="8.2"/><rect x="596" y="3.9" width="1.05" height="8.3"/><rect x="597" y="3.7" width="1.05" height="8.6"/><rect x="598" y="3.7" width="1.05" height="8.6"/><rect x="599" y="3.7" width="1.05" height="8.6"/><rect x="600" y="3.6" width="1.05" height="8.8"/><rect x="601" y="3.8" width="1.05" height="8.4"/><rect x="602" y="3.9" width="1.05" height="8.1"/><rect x="603" y="3.6" width="1.05" height="8.8"/><rect x="604" y="4.0" width="1.05" height="8.1"/><rect x="605" y="3.8" width="1.05" height="8.4"/><rect x="606" y="3.7" width="1.05" height="8.5"/><rect x="607" y="4.1" width="1.05" height="7.9"/><rect x="608" y="3.8" width="1.05" height="8.5"/><rect x="609" y="3.6" width="1.05" height="8.8"/><rect x="610" y="3.7" width="1.05" height="8.6"/><rect x="611" y="3.7" width="1.05" height="8.7"/><rect x="612" y="3.6" width="1.05" height="8.8"/><rect x="613" y="4.0" width="1.05" height="8.1"/><rect x="614" y="3.9" width="1.05" height="8.2"/><rect x="615" y="3.9" width="1.05" height="8.3"/><rect x="616" y="3.7" width="1.05" height="8.6"/><rect x="617" y="3.6" width="1.05" height="8.8"/><rect x="618" y="3.6" width="1.05" height="8.8"/><rect x="619" y="3.7" width="1.05" height="8.6"/><rect x="620" y="3.6" width="1.05" height="8.8"/><rect x="621" y="3.6" width="1.05" height="8.7"/><rect x="622" y="3.7" width="1.05" height="8.7"/><rect x="623" y="3.9" width="1.05" height="8.1"/><rect x="624" y="4.1" width="1.05" height="7.7"/><rect x="625" y="4.2" width="1.05" height="7.6"/><rect x="626" y="4.1" width="1.05" height="7.9"/><rect x="627" y="4.2" width="1.05" height="7.7"/><rect x="628" y="3.8" width="1.05" height="8.4"/><rect x="629" y="3.8" width="1.05" height="8.4"/><rect x="630" y="3.8" width="1.05" height="8.5"/><rect x="631" y="3.8" width="1.05" height="8.5"/><rect x="632" y="3.7" width="1.05" height="8.6"/><rect x="633" y="3.8" width="1.05" height="8.4"/><rect x="634" y="4.1" width="1.05" height="7.8"/><rect x="635" y="3.8" width="1.05" height="8.4"/><rect x="636" y="3.7" width="1.05" height="8.6"/><rect x="637" y="3.8" width="1.05" height="8.4"/><rect x="638" y="3.8" width="1.05" height="8.4"/><rect x="639" y="3.8" width="1.05" height="8.5"/><rect x="640" y="4.1" width="1.05" height="7.9"/><rect x="641" y="3.8" width="1.05" height="8.4"/><rect x="642" y="4.0" width="1.05" height="8.0"/><rect x="643" y="4.1" width="1.05" height="7.7"/><rect x="644" y="4.1" width="1.05" height="7.8"/><rect x="645" y="3.8" width="1.05" height="8.3"/><rect x="646" y="4.0" width="1.05" height="8.0"/><rect x="647" y="3.8" width="1.05" height="8.4"/><rect x="648" y="3.6" width="1.05" height="8.9"/><rect x="649" y="3.7" width="1.05" height="8.5"/><rect x="650" y="3.9" width="1.05" height="8.2"/><rect x="651" y="3.9" width="1.05" height="8.2"/><rect x="652" y="3.8" width="1.05" height="8.5"/><rect x="653" y="3.7" width="1.05" height="8.6"/><rect x="654" y="3.7" width="1.05" height="8.6"/><rect x="655" y="3.7" width="1.05" height="8.5"/><rect x="656" y="4.0" width="1.05" height="7.9"/><rect x="657" y="4.1" width="1.05" height="7.7"/><rect x="658" y="4.1" width="1.05" height="7.8"/><rect x="659" y="3.8" width="1.05" height="8.4"/><rect x="660" y="4.0" width="1.05" height="8.1"/><rect x="661" y="3.9" width="1.05" height="8.3"/><rect x="662" y="4.1" width="1.05" height="7.7"/><rect x="663" y="4.2" width="1.05" height="7.6"/><rect x="664" y="4.1" width="1.05" height="7.7"/><rect x="665" y="3.9" width="1.05" height="8.3"/><rect x="666" y="3.8" width="1.05" height="8.5"/><rect x="667" y="3.7" width="1.05" height="8.6"/><rect x="668" y="3.9" width="1.05" height="8.2"/><rect x="669" y="3.9" width="1.05" height="8.2"/><rect x="670" y="3.9" width="1.05" height="8.2"/><rect x="671" y="3.9" width="1.05" height="8.2"/><rect x="672" y="4.1" width="1.05" height="7.8"/><rect x="673" y="3.7" width="1.05" height="8.5"/><rect x="674" y="4.0" width="1.05" height="8.1"/><rect x="675" y="3.6" width="1.05" height="8.7"/><rect x="676" y="3.5" width="1.05" height="8.9"/><rect x="677" y="4.0" width="1.05" height="8.0"/><rect x="678" y="3.9" width="1.05" height="8.1"/><rect x="679" y="3.7" width="1.05" height="8.6"/><rect x="680" y="3.5" width="1.05" height="8.9"/><rect x="681" y="3.8" width="1.05" height="8.5"/><rect x="682" y="3.9" width="1.05" height="8.1"/><rect x="683" y="4.1" width="1.05" height="7.9"/><rect x="684" y="3.7" width="1.05" height="8.6"/><rect x="685" y="4.0" width="1.05" height="8.1"/><rect x="686" y="3.9" width="1.05" height="8.3"/><rect x="687" y="4.1" width="1.05" height="7.9"/><rect x="688" y="3.9" width="1.05" height="8.2"/><rect x="689" y="3.6" width="1.05" height="8.7"/><rect x="690" y="4.0" width="1.05" height="8.1"/><rect x="691" y="3.7" width="1.05" height="8.5"/><rect x="692" y="3.8" width="1.05" height="8.4"/><rect x="693" y="3.6" width="1.05" height="8.8"/><rect x="694" y="3.7" width="1.05" height="8.7"/><rect x="695" y="3.9" width="1.05" height="8.1"/><rect x="696" y="3.7" width="1.05" height="8.7"/><rect x="697" y="3.8" width="1.05" height="8.4"/><rect x="698" y="4.1" width="1.05" height="7.8"/><rect x="699" y="4.2" width="1.05" height="7.5"/><rect x="700" y="4.0" width="1.05" height="8.0"/><rect x="701" y="3.9" width="1.05" height="8.1"/><rect x="702" y="4.0" width="1.05" height="8.0"/><rect x="703" y="4.1" width="1.05" height="7.8"/><rect x="704" y="4.0" width="1.05" height="7.9"/><rect x="705" y="4.0" width="1.05" height="7.9"/><rect x="706" y="3.7" width="1.05" height="8.5"/><rect x="707" y="4.1" width="1.05" height="7.8"/><rect x="708" y="4.0" width="1.05" height="8.1"/><rect x="709" y="4.0" width="1.05" height="8.0"/><rect x="710" y="4.4" width="1.05" height="7.1"/><rect x="711" y="4.4" width="1.05" height="7.3"/><rect x="712" y="4.6" width="1.05" height="6.9"/><rect x="713" y="4.7" width="1.05" height="6.7"/><rect x="714" y="5.1" width="1.05" height="5.9"/><rect x="715" y="5.3" width="1.05" height="5.4"/><rect x="716" y="5.5" width="1.05" height="5.0"/><rect x="717" y="5.5" width="1.05" height="5.0"/><rect x="718" y="5.7" width="1.05" height="4.5"/><rect x="723" y="6.9" width="1.05" height="2.1"/><rect x="724" y="5.8" width="1.05" height="4.4"/><rect x="725" y="5.4" width="1.05" height="5.1"/><rect x="726" y="5.4" width="1.05" height="5.3"/><rect x="727" y="5.3" width="1.05" height="5.4"/><rect x="728" y="5.0" width="1.05" height="6.0"/><rect x="729" y="5.1" width="1.05" height="5.8"/><rect x="730" y="5.9" width="1.05" height="4.3"/><rect x="736" y="7.1" width="1.05" height="1.8"/><rect x="737" y="6.2" width="1.05" height="3.6"/><rect x="738" y="5.8" width="1.05" height="4.5"/><rect x="739" y="5.7" width="1.05" height="4.6"/><rect x="740" y="5.6" width="1.05" height="4.8"/><rect x="741" y="5.4" width="1.05" height="5.2"/><rect x="742" y="5.3" width="1.05" height="5.4"/><rect x="743" y="5.3" width="1.05" height="5.4"/><rect x="744" y="5.4" width="1.05" height="5.3"/><rect x="745" y="5.3" width="1.05" height="5.4"/><rect x="746" y="6.1" width="1.05" height="3.8"/><rect x="750" y="6.9" width="1.05" height="2.2"/><rect x="751" y="5.7" width="1.05" height="4.6"/><rect x="752" y="5.5" width="1.05" height="5.1"/><rect x="753" y="5.1" width="1.05" height="5.8"/><rect x="754" y="5.1" width="1.05" height="5.8"/><rect x="755" y="5.0" width="1.05" height="6.1"/><rect x="756" y="5.9" width="1.05" height="4.3"/><rect x="828" y="6.7" width="1.05" height="2.6"/><rect x="829" y="5.5" width="1.05" height="5.0"/><rect x="830" y="4.5" width="1.05" height="7.1"/><rect x="831" y="4.5" width="1.05" height="7.1"/><rect x="832" y="4.3" width="1.05" height="7.4"/><rect x="833" y="4.3" width="1.05" height="7.5"/><rect x="834" y="4.3" width="1.05" height="7.4"/><rect x="835" y="4.1" width="1.05" height="7.9"/><rect x="836" y="3.9" width="1.05" height="8.3"/><rect x="837" y="4.1" width="1.05" height="7.7"/><rect x="838" y="4.1" width="1.05" height="7.9"/><rect x="839" y="4.2" width="1.05" height="7.6"/><rect x="840" y="4.1" width="1.05" height="7.7"/><rect x="841" y="4.2" width="1.05" height="7.6"/><rect x="842" y="4.3" width="1.05" height="7.4"/><rect x="843" y="4.4" width="1.05" height="7.2"/><rect x="844" y="4.4" width="1.05" height="7.2"/><rect x="845" y="4.0" width="1.05" height="8.0"/><rect x="846" y="4.1" width="1.05" height="7.8"/><rect x="847" y="4.3" width="1.05" height="7.5"/><rect x="848" y="4.0" width="1.05" height="8.1"/><rect x="849" y="3.8" width="1.05" height="8.4"/><rect x="850" y="4.2" width="1.05" height="7.6"/><rect x="851" y="5.4" width="1.05" height="5.2"/><rect x="858" y="6.6" width="1.05" height="2.8"/><rect x="859" y="5.1" width="1.05" height="5.8"/><rect x="860" y="4.3" width="1.05" height="7.3"/><rect x="861" y="4.2" width="1.05" height="7.6"/><rect x="862" y="4.0" width="1.05" height="7.9"/><rect x="863" y="4.0" width="1.05" height="8.1"/><rect x="864" y="3.8" width="1.05" height="8.5"/><rect x="865" y="3.5" width="1.05" height="9.0"/><rect x="866" y="3.5" width="1.05" height="9.1"/><rect x="867" y="4.9" width="1.05" height="6.2"/><rect x="868" y="5.5" width="1.05" height="4.9"/><rect x="869" y="5.8" width="1.05" height="4.4"/><rect x="870" y="5.9" width="1.05" height="4.1"/><rect x="871" y="6.0" width="1.05" height="3.9"/><rect x="872" y="6.0" width="1.05" height="3.9"/><rect x="873" y="5.8" width="1.05" height="4.3"/><rect x="874" y="6.0" width="1.05" height="4.0"/><rect x="875" y="6.0" width="1.05" height="4.1"/><rect x="876" y="5.9" width="1.05" height="4.2"/><rect x="877" y="5.8" width="1.05" height="4.4"/><rect x="878" y="6.0" width="1.05" height="4.1"/><rect x="879" y="6.0" width="1.05" height="4.0"/><rect x="880" y="6.0" width="1.05" height="3.9"/><rect x="881" y="6.0" width="1.05" height="4.0"/><rect x="882" y="6.0" width="1.05" height="4.1"/><rect x="883" y="5.8" width="1.05" height="4.4"/><rect x="884" y="5.8" width="1.05" height="4.4"/><rect x="885" y="5.8" width="1.05" height="4.5"/><rect x="886" y="6.0" width="1.05" height="4.0"/><rect x="887" y="6.1" width="1.05" height="3.8"/><rect x="888" y="6.6" width="1.05" height="2.8"/><rect x="904" y="6.4" width="1.05" height="3.2"/><rect x="905" y="5.9" width="1.05" height="4.3"/><rect x="906" y="5.4" width="1.05" height="5.2"/><rect x="907" y="5.3" width="1.05" height="5.4"/><rect x="908" y="4.9" width="1.05" height="6.2"/><rect x="909" y="4.2" width="1.05" height="7.5"/><rect x="910" y="3.8" width="1.05" height="8.3"/><rect x="911" y="3.5" width="1.05" height="8.9"/><rect x="912" y="3.4" width="1.05" height="9.3"/><rect x="913" y="3.7" width="1.05" height="8.6"/><rect x="914" y="3.9" width="1.05" height="8.2"/><rect x="915" y="4.0" width="1.05" height="8.1"/><rect x="916" y="3.8" width="1.05" height="8.4"/><rect x="917" y="3.6" width="1.05" height="8.8"/><rect x="918" y="3.4" width="1.05" height="9.2"/><rect x="919" y="3.4" width="1.05" height="9.1"/><rect x="920" y="3.5" width="1.05" height="9.0"/><rect x="921" y="3.5" width="1.05" height="9.1"/><rect x="922" y="3.6" width="1.05" height="8.8"/><rect x="923" y="3.6" width="1.05" height="8.8"/><rect x="924" y="3.9" width="1.05" height="8.2"/><rect x="925" y="3.6" width="1.05" height="8.8"/><rect x="926" y="3.8" width="1.05" height="8.4"/><rect x="927" y="3.5" width="1.05" height="9.0"/><rect x="928" y="3.5" width="1.05" height="9.0"/><rect x="929" y="3.7" width="1.05" height="8.5"/><rect x="930" y="3.9" width="1.05" height="8.2"/><rect x="931" y="3.9" width="1.05" height="8.2"/><rect x="932" y="3.7" width="1.05" height="8.6"/><rect x="933" y="3.6" width="1.05" height="8.9"/><rect x="934" y="3.9" width="1.05" height="8.3"/><rect x="935" y="4.0" width="1.05" height="8.0"/><rect x="936" y="3.8" width="1.05" height="8.4"/><rect x="937" y="3.7" width="1.05" height="8.6"/><rect x="938" y="3.7" width="1.05" height="8.5"/><rect x="939" y="3.9" width="1.05" height="8.3"/><rect x="940" y="3.7" width="1.05" height="8.6"/><rect x="941" y="4.0" width="1.05" height="8.1"/><rect x="942" y="3.9" width="1.05" height="8.2"/><rect x="943" y="3.8" width="1.05" height="8.4"/><rect x="944" y="3.5" width="1.05" height="9.1"/><rect x="945" y="3.5" width="1.05" height="9.0"/><rect x="946" y="3.4" width="1.05" height="9.2"/><rect x="947" y="3.6" width="1.05" height="8.8"/><rect x="948" y="3.8" width="1.05" height="8.4"/><rect x="949" y="3.9" width="1.05" height="8.3"/><rect x="950" y="3.5" width="1.05" height="9.0"/><rect x="951" y="3.5" width="1.05" height="9.0"/><rect x="952" y="3.7" width="1.05" height="8.6"/><rect x="953" y="4.0" width="1.05" height="8.1"/><rect x="954" y="3.8" width="1.05" height="8.4"/><rect x="955" y="3.6" width="1.05" height="8.7"/><rect x="956" y="3.7" width="1.05" height="8.6"/><rect x="957" y="3.8" width="1.05" height="8.3"/><rect x="958" y="3.6" width="1.05" height="8.7"/><rect x="959" y="3.4" width="1.05" height="9.2"/><rect x="960" y="3.7" width="1.05" height="8.5"/><rect x="961" y="4.0" width="1.05" height="8.1"/><rect x="962" y="3.9" width="1.05" height="8.2"/><rect x="963" y="3.8" width="1.05" height="8.4"/><rect x="964" y="3.6" width="1.05" height="8.7"/><rect x="965" y="3.8" width="1.05" height="8.3"/><rect x="966" y="3.6" width="1.05" height="8.9"/><rect x="967" y="3.5" width="1.05" height="9.0"/><rect x="968" y="3.6" width="1.05" height="8.8"/><rect x="969" y="3.8" width="1.05" height="8.4"/><rect x="970" y="3.5" width="1.05" height="9.1"/><rect x="971" y="3.7" width="1.05" height="8.6"/><rect x="972" y="3.5" width="1.05" height="9.0"/><rect x="973" y="3.8" width="1.05" height="8.5"/><rect x="974" y="3.9" width="1.05" height="8.3"/><rect x="975" y="3.6" width="1.05" height="8.8"/><rect x="976" y="3.8" width="1.05" height="8.5"/><rect x="977" y="3.5" width="1.05" height="9.1"/><rect x="978" y="3.6" width="1.05" height="8.8"/><rect x="979" y="3.8" width="1.05" height="8.3"/><rect x="980" y="3.9" width="1.05" height="8.2"/><rect x="981" y="3.8" width="1.05" height="8.4"/><rect x="982" y="3.6" width="1.05" height="8.7"/><rect x="983" y="3.4" width="1.05" height="9.2"/><rect x="984" y="3.8" width="1.05" height="8.5"/><rect x="985" y="3.8" width="1.05" height="8.4"/><rect x="986" y="3.9" width="1.05" height="8.2"/><rect x="987" y="3.5" width="1.05" height="9.0"/><rect x="988" y="3.8" width="1.05" height="8.4"/><rect x="989" y="4.0" width="1.05" height="8.0"/><rect x="990" y="4.1" width="1.05" height="7.9"/><rect x="991" y="3.9" width="1.05" height="8.2"/><rect x="992" y="3.5" width="1.05" height="8.9"/><rect x="993" y="3.4" width="1.05" height="9.2"/><rect x="994" y="3.4" width="1.05" height="9.1"/><rect x="995" y="3.3" width="1.05" height="9.4"/><rect x="996" y="3.3" width="1.05" height="9.4"/><rect x="997" y="3.6" width="1.05" height="8.8"/><rect x="998" y="3.8" width="1.05" height="8.3"/><rect x="999" y="3.5" width="1.05" height="9.0"/><rect x="1000" y="3.5" width="1.05" height="9.1"/><rect x="1001" y="3.9" width="1.05" height="8.3"/><rect x="1002" y="3.7" width="1.05" height="8.7"/><rect x="1003" y="3.7" width="1.05" height="8.5"/><rect x="1004" y="3.8" width="1.05" height="8.4"/><rect x="1005" y="3.8" width="1.05" height="8.4"/><rect x="1006" y="3.9" width="1.05" height="8.2"/><rect x="1007" y="4.1" width="1.05" height="7.9"/><rect x="1008" y="4.0" width="1.05" height="8.1"/><rect x="1009" y="3.9" width="1.05" height="8.2"/><rect x="1010" y="3.5" width="1.05" height="9.0"/><rect x="1011" y="3.8" width="1.05" height="8.4"/><rect x="1012" y="3.5" width="1.05" height="9.1"/><rect x="1013" y="3.8" width="1.05" height="8.5"/><rect x="1014" y="3.8" width="1.05" height="8.4"/><rect x="1015" y="3.5" width="1.05" height="8.9"/><rect x="1016" y="3.4" width="1.05" height="9.1"/><rect x="1017" y="3.6" width="1.05" height="8.8"/><rect x="1018" y="3.9" width="1.05" height="8.2"/><rect x="1019" y="3.8" width="1.05" height="8.4"/><rect x="1020" y="3.8" width="1.05" height="8.4"/><rect x="1021" y="3.5" width="1.05" height="9.0"/><rect x="1022" y="3.8" width="1.05" height="8.4"/><rect x="1023" y="3.8" width="1.05" height="8.4"/><rect x="1024" y="3.5" width="1.05" height="9.0"/><rect x="1025" y="3.9" width="1.05" height="8.2"/><rect x="1026" y="3.8" width="1.05" height="8.4"/><rect x="1027" y="3.6" width="1.05" height="8.9"/><rect x="1028" y="3.5" width="1.05" height="9.0"/><rect x="1029" y="4.0" width="1.05" height="8.1"/><rect x="1030" y="4.3" width="1.05" height="7.3"/><rect x="1031" y="4.6" width="1.05" height="6.7"/><rect x="1032" y="4.6" width="1.05" height="6.8"/><rect x="1033" y="5.0" width="1.05" height="5.9"/><rect x="1034" y="5.2" width="1.05" height="5.5"/><rect x="1035" y="5.5" width="1.05" height="5.0"/><rect x="1155" y="6.6" width="1.05" height="2.7"/><rect x="1156" y="5.6" width="1.05" height="4.8"/><rect x="1157" y="4.4" width="1.05" height="7.3"/><rect x="1158" y="4.0" width="1.05" height="7.9"/><rect x="1159" y="4.1" width="1.05" height="7.8"/><rect x="1160" y="3.9" width="1.05" height="8.2"/><rect x="1161" y="4.0" width="1.05" height="7.9"/><rect x="1162" y="4.1" width="1.05" height="7.8"/><rect x="1163" y="4.3" width="1.05" height="7.4"/><rect x="1164" y="3.9" width="1.05" height="8.1"/><rect x="1165" y="3.7" width="1.05" height="8.6"/><rect x="1166" y="3.8" width="1.05" height="8.4"/><rect x="1167" y="3.6" width="1.05" height="8.7"/><rect x="1168" y="4.1" width="1.05" height="7.8"/><rect x="1169" y="4.1" width="1.05" height="7.7"/><rect x="1170" y="4.0" width="1.05" height="7.9"/><rect x="1171" y="3.7" width="1.05" height="8.5"/><rect x="1172" y="3.6" width="1.05" height="8.8"/><rect x="1173" y="3.9" width="1.05" height="8.2"/><rect x="1174" y="4.1" width="1.05" height="7.9"/><rect x="1175" y="4.0" width="1.05" height="7.9"/><rect x="1176" y="4.0" width="1.05" height="8.0"/><rect x="1177" y="3.7" width="1.05" height="8.5"/><rect x="1178" y="4.0" width="1.05" height="7.9"/><rect x="1179" y="3.8" width="1.05" height="8.4"/><rect x="1180" y="3.8" width="1.05" height="8.5"/><rect x="1181" y="3.7" width="1.05" height="8.6"/><rect x="1182" y="3.7" width="1.05" height="8.6"/><rect x="1183" y="3.8" width="1.05" height="8.4"/><rect x="1184" y="4.0" width="1.05" height="8.0"/><rect x="1185" y="4.1" width="1.05" height="7.9"/><rect x="1186" y="4.5" width="1.05" height="7.0"/><rect x="1187" y="5.3" width="1.05" height="5.4"/><rect x="1216" y="7.2" width="1.05" height="1.5"/><rect x="1217" y="6.5" width="1.05" height="2.9"/><rect x="1218" y="6.1" width="1.05" height="3.8"/><rect x="1219" y="6.1" width="1.05" height="3.9"/><rect x="1220" y="6.1" width="1.05" height="3.8"/><rect x="1221" y="6.1" width="1.05" height="3.7"/><rect x="1222" y="6.0" width="1.05" height="4.0"/><rect x="1223" y="6.6" width="1.05" height="2.8"/><rect x="1242" y="7.1" width="1.05" height="1.8"/><rect x="1243" y="6.3" width="1.05" height="3.4"/><rect x="1244" y="5.9" width="1.05" height="4.1"/><rect x="1245" y="6.0" width="1.05" height="4.0"/><rect x="1246" y="6.1" width="1.05" height="3.9"/><rect x="1247" y="6.1" width="1.05" height="3.8"/><rect x="1248" y="6.0" width="1.05" height="4.0"/><rect x="1249" y="5.9" width="1.05" height="4.2"/><rect x="1250" y="5.9" width="1.05" height="4.1"/><rect x="1251" y="6.0" width="1.05" height="4.0"/><rect x="1252" y="6.6" width="1.05" height="2.8"/><rect x="1259" y="6.9" width="1.05" height="2.2"/><rect x="1260" y="5.7" width="1.05" height="4.6"/><rect x="1261" y="5.2" width="1.05" height="5.6"/><rect x="1262" y="5.0" width="1.05" height="6.1"/><rect x="1263" y="4.9" width="1.05" height="6.1"/><rect x="1264" y="6.0" width="1.05" height="4.1"/><rect x="1281" y="6.4" width="1.05" height="3.2"/><rect x="1282" y="5.7" width="1.05" height="4.6"/><rect x="1283" y="4.9" width="1.05" height="6.1"/><rect x="1284" y="4.3" width="1.05" height="7.4"/><rect x="1285" y="3.7" width="1.05" height="8.5"/><rect x="1286" y="3.8" width="1.05" height="8.3"/><rect x="1287" y="3.8" width="1.05" height="8.3"/><rect x="1288" y="3.8" width="1.05" height="8.3"/><rect x="1289" y="3.9" width="1.05" height="8.2"/><rect x="1290" y="3.5" width="1.05" height="9.0"/><rect x="1291" y="3.5" width="1.05" height="9.0"/><rect x="1292" y="3.7" width="1.05" height="8.7"/><rect x="1293" y="3.7" width="1.05" height="8.6"/><rect x="1294" y="3.3" width="1.05" height="9.3"/><rect x="1295" y="3.5" width="1.05" height="9.0"/><rect x="1296" y="3.7" width="1.05" height="8.6"/><rect x="1297" y="3.5" width="1.05" height="9.1"/><rect x="1298" y="3.4" width="1.05" height="9.1"/><rect x="1299" y="3.2" width="1.05" height="9.5"/><rect x="1300" y="3.7" width="1.05" height="8.6"/><rect x="1301" y="3.6" width="1.05" height="8.7"/><rect x="1302" y="3.4" width="1.05" height="9.2"/><rect x="1303" y="3.3" width="1.05" height="9.4"/><rect x="1304" y="3.2" width="1.05" height="9.5"/><rect x="1305" y="3.7" width="1.05" height="8.6"/><rect x="1306" y="3.8" width="1.05" height="8.5"/><rect x="1307" y="3.9" width="1.05" height="8.2"/><rect x="1308" y="3.9" width="1.05" height="8.2"/><rect x="1309" y="3.4" width="1.05" height="9.1"/><rect x="1310" y="3.5" width="1.05" height="9.0"/><rect x="1311" y="3.3" width="1.05" height="9.4"/><rect x="1312" y="3.5" width="1.05" height="8.9"/><rect x="1313" y="3.4" width="1.05" height="9.3"/><rect x="1314" y="3.5" width="1.05" height="8.9"/><rect x="1315" y="3.7" width="1.05" height="8.6"/><rect x="1316" y="3.5" width="1.05" height="9.1"/><rect x="1317" y="3.3" width="1.05" height="9.4"/><rect x="1318" y="3.7" width="1.05" height="8.6"/><rect x="1319" y="3.6" width="1.05" height="8.8"/><rect x="1320" y="3.5" width="1.05" height="9.0"/><rect x="1321" y="3.7" width="1.05" height="8.5"/><rect x="1322" y="3.7" width="1.05" height="8.6"/><rect x="1323" y="3.9" width="1.05" height="8.3"/><rect x="1324" y="3.9" width="1.05" height="8.3"/><rect x="1325" y="3.8" width="1.05" height="8.3"/><rect x="1326" y="3.6" width="1.05" height="8.7"/><rect x="1327" y="3.5" width="1.05" height="9.0"/><rect x="1328" y="3.7" width="1.05" height="8.5"/><rect x="1329" y="3.9" width="1.05" height="8.1"/><rect x="1330" y="3.8" width="1.05" height="8.3"/><rect x="1331" y="3.6" width="1.05" height="8.8"/><rect x="1332" y="3.8" width="1.05" height="8.5"/><rect x="1333" y="3.8" width="1.05" height="8.5"/><rect x="1334" y="3.8" width="1.05" height="8.3"/><rect x="1335" y="3.5" width="1.05" height="9.0"/><rect x="1336" y="3.5" width="1.05" height="8.9"/><rect x="1337" y="3.8" width="1.05" height="8.4"/><rect x="1338" y="3.9" width="1.05" height="8.2"/><rect x="1339" y="3.8" width="1.05" height="8.4"/><rect x="1340" y="3.6" width="1.05" height="8.7"/><rect x="1341" y="3.5" width="1.05" height="8.9"/><rect x="1342" y="3.8" width="1.05" height="8.4"/><rect x="1343" y="3.9" width="1.05" height="8.3"/><rect x="1344" y="3.7" width="1.05" height="8.6"/><rect x="1345" y="4.2" width="1.05" height="7.6"/><rect x="1346" y="4.8" width="1.05" height="6.3"/><rect x="1347" y="5.5" width="1.05" height="5.1"/><rect x="1454" y="6.5" width="1.05" height="3.0"/><rect x="1455" y="5.2" width="1.05" height="5.6"/><rect x="1456" y="4.5" width="1.05" height="7.0"/><rect x="1457" y="4.4" width="1.05" height="7.3"/><rect x="1458" y="4.3" width="1.05" height="7.5"/><rect x="1459" y="4.0" width="1.05" height="8.0"/><rect x="1460" y="3.8" width="1.05" height="8.4"/><rect x="1461" y="4.1" width="1.05" height="7.8"/><rect x="1462" y="4.3" width="1.05" height="7.5"/><rect x="1463" y="4.1" width="1.05" height="7.9"/><rect x="1464" y="4.3" width="1.05" height="7.5"/><rect x="1465" y="4.4" width="1.05" height="7.1"/><rect x="1466" y="4.0" width="1.05" height="7.9"/><rect x="1467" y="5.3" width="1.05" height="5.4"/><rect x="1471" y="7.3" width="1.05" height="1.4"/><rect x="1472" y="6.8" width="1.05" height="2.5"/><rect x="1473" y="6.4" width="1.05" height="3.1"/><rect x="1474" y="6.4" width="1.05" height="3.2"/><rect x="1475" y="6.5" width="1.05" height="3.1"/><rect x="1476" y="6.5" width="1.05" height="3.0"/><rect x="1477" y="6.9" width="1.05" height="2.2"/><rect x="1480" y="6.5" width="1.05" height="3.1"/><rect x="1481" y="4.6" width="1.05" height="6.9"/><rect x="1482" y="4.3" width="1.05" height="7.5"/><rect x="1483" y="3.8" width="1.05" height="8.3"/><rect x="1484" y="3.8" width="1.05" height="8.4"/><rect x="1485" y="3.7" width="1.05" height="8.5"/><rect x="1486" y="5.1" width="1.05" height="5.8"/></g></svg>
<div class="a" style="left:1134px;top:1213px;width:215px;height:18px;background:#fff;"></div><div class="a" style="left:1187px;top:1213px;width:1px;height:18px;background:#b0b0b0;"></div><div class="a" style="left:1200px;top:1213px;width:1px;height:18px;background:#b0b0b0;"></div><div class="a" style="left:1218px;top:1213px;width:1px;height:18px;background:#b0b0b0;"></div><div class="a" style="left:1233px;top:1213px;width:1px;height:18px;background:#b0b0b0;"></div><div class="a" style="left:1250px;top:1213px;width:1px;height:18px;background:#b0b0b0;"></div><div class="a" style="left:1266px;top:1213px;width:1px;height:18px;background:#b0b0b0;"></div><div class="a" style="left:1282px;top:1213px;width:1px;height:18px;background:#b0b0b0;"></div><div class="a" style="left:1300px;top:1213px;width:1px;height:18px;background:#b0b0b0;"></div><div class="a" style="left:1313px;top:1213px;width:1px;height:18px;background:#b0b0b0;"></div><div class="a" style="left:1330px;top:1213px;width:1px;height:18px;background:#b0b0b0;"></div><div class="a" style="left:1347px;top:1213px;width:1px;height:18px;background:#b0b0b0;"></div><div class="a" style="left:1134px;top:1229px;width:215px;height:2px;background:repeating-linear-gradient(90deg,#aaa 0 1px,#fff 1px 2px)"></div>
<div class="a" style="left:1446px;top:1213px;width:493px;height:18px;background:#fff;"></div><div class="a" style="left:1458px;top:1213px;width:1px;height:18px;background:#b0b0b0;"></div><div class="a" style="left:1480px;top:1213px;width:1px;height:18px;background:#b0b0b0;"></div><div class="a" style="left:1490px;top:1213px;width:1px;height:18px;background:#b0b0b0;"></div><div class="a" style="left:1497px;top:1213px;width:1px;height:18px;background:#b0b0b0;"></div><div class="a" style="left:1593px;top:1213px;width:1px;height:18px;background:#b0b0b0;"></div><div class="a" style="left:1617px;top:1213px;width:1px;height:18px;background:#b0b0b0;"></div><div class="a" style="left:1639px;top:1213px;width:1px;height:18px;background:#b0b0b0;"></div><div class="a" style="left:1670px;top:1213px;width:1px;height:18px;background:#b0b0b0;"></div><div class="a" style="left:1685px;top:1213px;width:1px;height:18px;background:#b0b0b0;"></div><div class="a" style="left:1695px;top:1213px;width:1px;height:18px;background:#b0b0b0;"></div><div class="a" style="left:1705px;top:1213px;width:1px;height:18px;background:#b0b0b0;"></div><div class="a" style="left:1715px;top:1213px;width:1px;height:18px;background:#b0b0b0;"></div><div class="a" style="left:1728px;top:1213px;width:1px;height:18px;background:#b0b0b0;"></div><div class="a" style="left:1745px;top:1213px;width:1px;height:18px;background:#b0b0b0;"></div><div class="a" style="left:1750px;top:1213px;width:1px;height:18px;background:#b0b0b0;"></div><div class="a" style="left:1765px;top:1213px;width:1px;height:18px;background:#b0b0b0;"></div><div class="a" style="left:1785px;top:1213px;width:1px;height:18px;background:#b0b0b0;"></div><div class="a" style="left:1795px;top:1213px;width:1px;height:18px;background:#b0b0b0;"></div><div class="a" style="left:1842px;top:1213px;width:1px;height:18px;background:#b0b0b0;"></div><div class="a" style="left:1893px;top:1213px;width:1px;height:18px;background:#b0b0b0;"></div><div class="a" style="left:1910px;top:1213px;width:1px;height:18px;background:#b0b0b0;"></div><div class="a" style="left:1446px;top:1229px;width:493px;height:2px;background:repeating-linear-gradient(90deg,#aaa 0 1px,#fff 1px 2px)"></div>
<div class="a" style="left:943px;top:1240px;width:996px;height:2px;background:#000;"></div>
<div class="a" style="left:939px;top:1238px;width:8px;height:7px;background:#000;"></div>
<div class="a" style="left:985px;top:1238px;width:8px;height:7px;background:#000;"></div>
<div class="a" style="left:1130px;top:1238px;width:8px;height:7px;background:#000;"></div>
<div class="a" style="left:1709px;top:1238px;width:8px;height:7px;background:#000;"></div>
<div class="a" style="left:1935px;top:1238px;width:8px;height:7px;background:#b00000;border:1px solid #300"></div>
<div class="a" style="left:944px;top:1251px;width:405px;height:18px;background:#7e7e7e;border-top:1px solid #ddd;border-left:1px solid #ddd"></div><div class="a" style="left:944px;top:1267px;width:405px;height:2px;background:repeating-linear-gradient(90deg,#333 0 1px,#777 1px 2px)"></div>
<div class="a" style="left:1349px;top:1251px;width:172px;height:18px;background:#7e7e7e;border-top:1px solid #ddd;border-left:1px solid #ddd"></div><div class="a" style="left:1349px;top:1267px;width:172px;height:2px;background:repeating-linear-gradient(90deg,#333 0 1px,#777 1px 2px)"></div>
<div class="a" style="left:1134px;top:1251px;width:1px;height:18px;background:#222;"></div>
<div class="a" style="left:1135px;top:1251px;width:1px;height:18px;background:#ddd;"></div>
<div class="a" style="left:944px;top:1270px;width:190px;height:75px;background:#7e7e7e;border-top:1px solid #ddd;border-left:1px solid #ddd"></div><div class="a" style="left:944px;top:1343px;width:190px;height:2px;background:repeating-linear-gradient(90deg,#333 0 1px,#777 1px 2px)"></div>
<div class="a" style="left:1134px;top:1270px;width:215px;height:75px;background:#7e7e7e;border-top:1px solid #ddd;border-left:1px solid #ddd"></div><div class="a" style="left:1134px;top:1343px;width:215px;height:2px;background:repeating-linear-gradient(90deg,#333 0 1px,#777 1px 2px)"></div>
<div class="a" style="left:1522px;top:1270px;width:73px;height:75px;background:#7e7e7e;border-top:1px solid #ddd;border-left:1px solid #ddd"></div><div class="a" style="left:1522px;top:1343px;width:73px;height:2px;background:repeating-linear-gradient(90deg,#333 0 1px,#777 1px 2px)"></div>
<div class="a" style="left:1598px;top:1270px;width:72px;height:75px;background:#7e7e7e;border-top:1px solid #ddd;border-left:1px solid #ddd"></div><div class="a" style="left:1598px;top:1343px;width:72px;height:2px;background:repeating-linear-gradient(90deg,#333 0 1px,#777 1px 2px)"></div>
<div class="a" style="left:1670px;top:1270px;width:58px;height:75px;background:#7e7e7e;border-top:1px solid #ddd;border-left:1px solid #ddd"></div><div class="a" style="left:1670px;top:1343px;width:58px;height:2px;background:repeating-linear-gradient(90deg,#333 0 1px,#777 1px 2px)"></div>
<div class="a" style="left:1728px;top:1270px;width:31px;height:75px;background:#7e7e7e;border-top:1px solid #ddd;border-left:1px solid #ddd"></div><div class="a" style="left:1728px;top:1343px;width:31px;height:2px;background:repeating-linear-gradient(90deg,#333 0 1px,#777 1px 2px)"></div>
<div class="a" style="left:1760px;top:1270px;width:24px;height:75px;background:#7e7e7e;border-top:1px solid #ddd;border-left:1px solid #ddd"></div><div class="a" style="left:1760px;top:1343px;width:24px;height:2px;background:repeating-linear-gradient(90deg,#333 0 1px,#777 1px 2px)"></div>
<div class="a" style="left:1784px;top:1270px;width:12px;height:75px;background:#7e7e7e;border-top:1px solid #ddd;border-left:1px solid #ddd"></div><div class="a" style="left:1784px;top:1343px;width:12px;height:2px;background:repeating-linear-gradient(90deg,#333 0 1px,#777 1px 2px)"></div>
<div class="a" style="left:1796px;top:1270px;width:9px;height:75px;background:#7e7e7e;border-top:1px solid #ddd;border-left:1px solid #ddd"></div><div class="a" style="left:1796px;top:1343px;width:9px;height:2px;background:repeating-linear-gradient(90deg,#333 0 1px,#777 1px 2px)"></div>
<div class="a" style="left:1805px;top:1270px;width:15px;height:75px;background:#7e7e7e;border-top:1px solid #ddd;border-left:1px solid #ddd"></div><div class="a" style="left:1805px;top:1343px;width:15px;height:2px;background:repeating-linear-gradient(90deg,#333 0 1px,#777 1px 2px)"></div>
<div class="a" style="left:1820px;top:1270px;width:20px;height:75px;background:#7e7e7e;border-top:1px solid #ddd;border-left:1px solid #ddd"></div><div class="a" style="left:1820px;top:1343px;width:20px;height:2px;background:repeating-linear-gradient(90deg,#333 0 1px,#777 1px 2px)"></div>
<div class="a" style="left:1840px;top:1270px;width:24px;height:75px;background:#7e7e7e;border-top:1px solid #ddd;border-left:1px solid #ddd"></div><div class="a" style="left:1840px;top:1343px;width:24px;height:2px;background:repeating-linear-gradient(90deg,#333 0 1px,#777 1px 2px)"></div>
<div class="a" style="left:1864px;top:1270px;width:53px;height:75px;background:#7e7e7e;border-top:1px solid #ddd;border-left:1px solid #ddd"></div><div class="a" style="left:1864px;top:1343px;width:53px;height:2px;background:repeating-linear-gradient(90deg,#333 0 1px,#777 1px 2px)"></div>
<div class="a" style="left:1917px;top:1270px;width:22px;height:75px;background:#7e7e7e;border-top:1px solid #ddd;border-left:1px solid #ddd"></div><div class="a" style="left:1917px;top:1343px;width:22px;height:2px;background:repeating-linear-gradient(90deg,#333 0 1px,#777 1px 2px)"></div>
<div class="a" style="left:1134px;top:1270px;width:1px;height:75px;background:#222;"></div>
<div class="a" style="left:1522px;top:1270px;width:1px;height:75px;background:#222;"></div>
<div class="a" style="left:1598px;top:1270px;width:1px;height:75px;background:#222;"></div>
<div class="a" style="left:1670px;top:1270px;width:1px;height:75px;background:#222;"></div>
<div class="a" style="left:1728px;top:1270px;width:1px;height:75px;background:#222;"></div>
<div class="a" style="left:1760px;top:1270px;width:1px;height:75px;background:#222;"></div>
<div class="a" style="left:1784px;top:1270px;width:1px;height:75px;background:#222;"></div>
<div class="a" style="left:1796px;top:1270px;width:1px;height:75px;background:#222;"></div>
<div class="a" style="left:1805px;top:1270px;width:1px;height:75px;background:#222;"></div>
<div class="a" style="left:1820px;top:1270px;width:1px;height:75px;background:#222;"></div>
<div class="a" style="left:1840px;top:1270px;width:1px;height:75px;background:#222;"></div>
<div class="a" style="left:1864px;top:1270px;width:1px;height:75px;background:#222;"></div>
<div class="a" style="left:1917px;top:1270px;width:1px;height:75px;background:#222;"></div>
<div class="a" style="left:1595px;top:1270px;width:1px;height:75px;background:#222;"></div>
<div class="a" style="left:1596px;top:1270px;width:1px;height:75px;background:#ccc;"></div>
<div class="a" style="left:1598px;top:1270px;width:1px;height:75px;background:#222;"></div>
<div class="a" style="left:1599px;top:1270px;width:1px;height:75px;background:#ccc;"></div>
<div class="a" style="left:1865px;top:1270px;width:1px;height:75px;background:#222;"></div>
<div class="a" style="left:1866px;top:1270px;width:1px;height:75px;background:#ccc;"></div>
<div class="a" style="left:1874px;top:1270px;width:1px;height:75px;background:#222;"></div>
<div class="a" style="left:1875px;top:1270px;width:1px;height:75px;background:#ccc;"></div>
<div class="a" style="left:1878px;top:1270px;width:1px;height:75px;background:#222;"></div>
<div class="a" style="left:1879px;top:1270px;width:1px;height:75px;background:#ccc;"></div>
<div class="a" style="left:1882px;top:1270px;width:1px;height:75px;background:#222;"></div>
<div class="a" style="left:1883px;top:1270px;width:1px;height:75px;background:#ccc;"></div>
<div class="a" style="left:1888px;top:1270px;width:1px;height:75px;background:#222;"></div>
<div class="a" style="left:1889px;top:1270px;width:1px;height:75px;background:#ccc;"></div>
<div class="a" style="left:1894px;top:1270px;width:1px;height:75px;background:#222;"></div>
<div class="a" style="left:1895px;top:1270px;width:1px;height:75px;background:#ccc;"></div>
<div class="a" style="left:1900px;top:1270px;width:1px;height:75px;background:#222;"></div>
<div class="a" style="left:1901px;top:1270px;width:1px;height:75px;background:#ccc;"></div>
<div class="a" style="left:1911px;top:1270px;width:1px;height:75px;background:#222;"></div>
<div class="a" style="left:1912px;top:1270px;width:1px;height:75px;background:#ccc;"></div>
<div class="a" style="left:1916px;top:1270px;width:1px;height:75px;background:#222;"></div>
<div class="a" style="left:1917px;top:1270px;width:1px;height:75px;background:#ccc;"></div>
<div class="a" style="left:948px;top:1289px;width:53px;height:53px;background:#fff;"></div>
<div class="t" style="left:950px;top:1332px;font-size:9.8px;color:#111;">35</div>
<div class="a" style="left:1138px;top:1289px;width:53px;height:53px;background:#fff;"></div>
<div class="t" style="left:1140px;top:1332px;font-size:9.8px;color:#111;">84</div>
<div class="a" style="left:1526px;top:1289px;width:53px;height:53px;background:#fff;"></div>
<div class="t" style="left:1528px;top:1332px;font-size:9.8px;color:#111;">37</div>
<div class="a" style="left:1602px;top:1289px;width:53px;height:53px;background:#fff;"></div>
<div class="t" style="left:1604px;top:1332px;font-size:9.8px;color:#111;">85</div>
<div class="a" style="left:1674px;top:1289px;width:53px;height:53px;background:#fff;"></div>
<div class="t" style="left:1676px;top:1332px;font-size:9.8px;color:#111;">36</div>
<div class="a" style="left:1731px;top:1289px;width:27px;height:53px;background:#fff;"></div>
<div class="t" style="left:1733px;top:1332px;font-size:9.8px;color:#111;">38</div>
<div class="a" style="left:1764px;top:1289px;width:18px;height:53px;background:#fff;"></div>
<div class="t" style="left:1766px;top:1332px;font-size:9.8px;color:#111;">39</div>
<div class="a" style="left:1823px;top:1289px;width:15px;height:53px;background:#fff;"></div>
<div class="t" style="left:1825px;top:1332px;font-size:9.8px;color:#111;">43</div>
<div class="a" style="left:1843px;top:1289px;width:19px;height:53px;background:#fff;"></div>
<div class="t" style="left:1845px;top:1332px;font-size:9.8px;color:#111;">44</div>
<div class="a" style="left:1920px;top:1289px;width:17px;height:53px;background:#fff;"></div>
<div class="t" style="left:1922px;top:1332px;font-size:9.8px;color:#111;">73</div>
<div class="a" style="left:1117px;top:1289px;width:15px;height:12px;background:#e8e8e8;border:1px solid #111"></div>
<div class="t" style="left:1119px;top:1291px;font-size:9.8px;color:#111;">95</div>
<div class="a" style="left:1327px;top:1289px;width:21px;height:12px;background:#e8e8e8;border:1px solid #111"></div>
<div class="t" style="left:1329px;top:1291px;font-size:9.8px;color:#111;">108</div>
<div class="a" style="left:1578px;top:1289px;width:15px;height:12px;background:#e8e8e8;border:1px solid #111"></div>
<div class="t" style="left:1580px;top:1291px;font-size:9.8px;color:#111;">36</div>
<div class="a" style="left:1654px;top:1289px;width:15px;height:12px;background:#e8e8e8;border:1px solid #111"></div>
<div class="t" style="left:1656px;top:1291px;font-size:9.8px;color:#111;">36</div>
<div class="a" style="left:1712px;top:1289px;width:15px;height:12px;background:#e8e8e8;border:1px solid #111"></div>
<div class="t" style="left:1714px;top:1291px;font-size:9.8px;color:#111;">29</div>
<div class="a" style="left:1743px;top:1289px;width:15px;height:12px;background:#e8e8e8;border:1px solid #111"></div>
<div class="t" style="left:1745px;top:1291px;font-size:9.8px;color:#111;">16</div>
<div class="a" style="left:1768px;top:1289px;width:15px;height:12px;background:#e8e8e8;border:1px solid #111"></div>
<div class="t" style="left:1770px;top:1291px;font-size:9.8px;color:#111;">12</div>
<div class="a" style="left:1811px;top:1289px;width:9px;height:12px;background:#e8e8e8;border:1px solid #111"></div>
<div class="t" style="left:1813px;top:1291px;font-size:9.8px;color:#111;">7</div>
<div class="a" style="left:1824px;top:1289px;width:15px;height:12px;background:#e8e8e8;border:1px solid #111"></div>
<div class="t" style="left:1826px;top:1291px;font-size:9.8px;color:#111;">10</div>
<div class="a" style="left:1848px;top:1289px;width:15px;height:12px;background:#e8e8e8;border:1px solid #111"></div>
<div class="t" style="left:1850px;top:1291px;font-size:9.8px;color:#111;">12</div>
<div class="a" style="left:1923px;top:1289px;width:15px;height:12px;background:#e8e8e8;border:1px solid #111"></div>
<div class="t" style="left:1925px;top:1291px;font-size:9.8px;color:#111;">12</div>
<div class="a" style="left:1206px;top:1132px;width:1px;height:240px;background:#e02020;"></div>
<div class="a" style="left:1207px;top:1132px;width:1px;height:240px;background:rgba(200,40,40,0.45);"></div>
<div class="a" style="left:1206px;top:1133px;width:2px;height:13px;background:#300;"></div>
<div class="a" style="left:515px;top:1372px;width:2041px;height:16px;background:#111;"></div>
<svg class="a" style="left:520px;top:1373px;" width="13" height="14" viewBox="0 0 13 14"><circle cx="5" cy="5" r="4" fill="#9ee8f8"/><path d="M7 8 L11 13" stroke="#e8a030" stroke-width="2.2"/></svg>
<div class="a" style="left:541px;top:1378px;width:55px;height:1px;background:#888;"></div>
<div class="a" style="left:540px;top:1374px;width:4px;height:9px;background:#666;border:1px solid #999"></div>
<div class="a" style="left:598px;top:1372px;width:16px;height:16px;background:linear-gradient(180deg,#555,#333);"></div>
<svg class="a" style="left:603px;top:1376px;" width="6" height="8" viewBox="0 0 6 8"><path d="M5 0 L0 4 L5 8 Z" fill="#aaa"/></svg>
<div class="a" style="left:1761px;top:1373px;width:774px;height:15px;background:linear-gradient(180deg,#666,#3a3a3a);border-radius:2px"></div>
<div class="a" style="left:2536px;top:1372px;width:18px;height:16px;background:linear-gradient(180deg,#555,#333);border-left:1px solid #111"></div>
<svg class="a" style="left:2542px;top:1376px;" width="6" height="8" viewBox="0 0 6 8"><path d="M0 0 L5 4 L0 8 Z" fill="#aaa"/></svg>

</body></html>
